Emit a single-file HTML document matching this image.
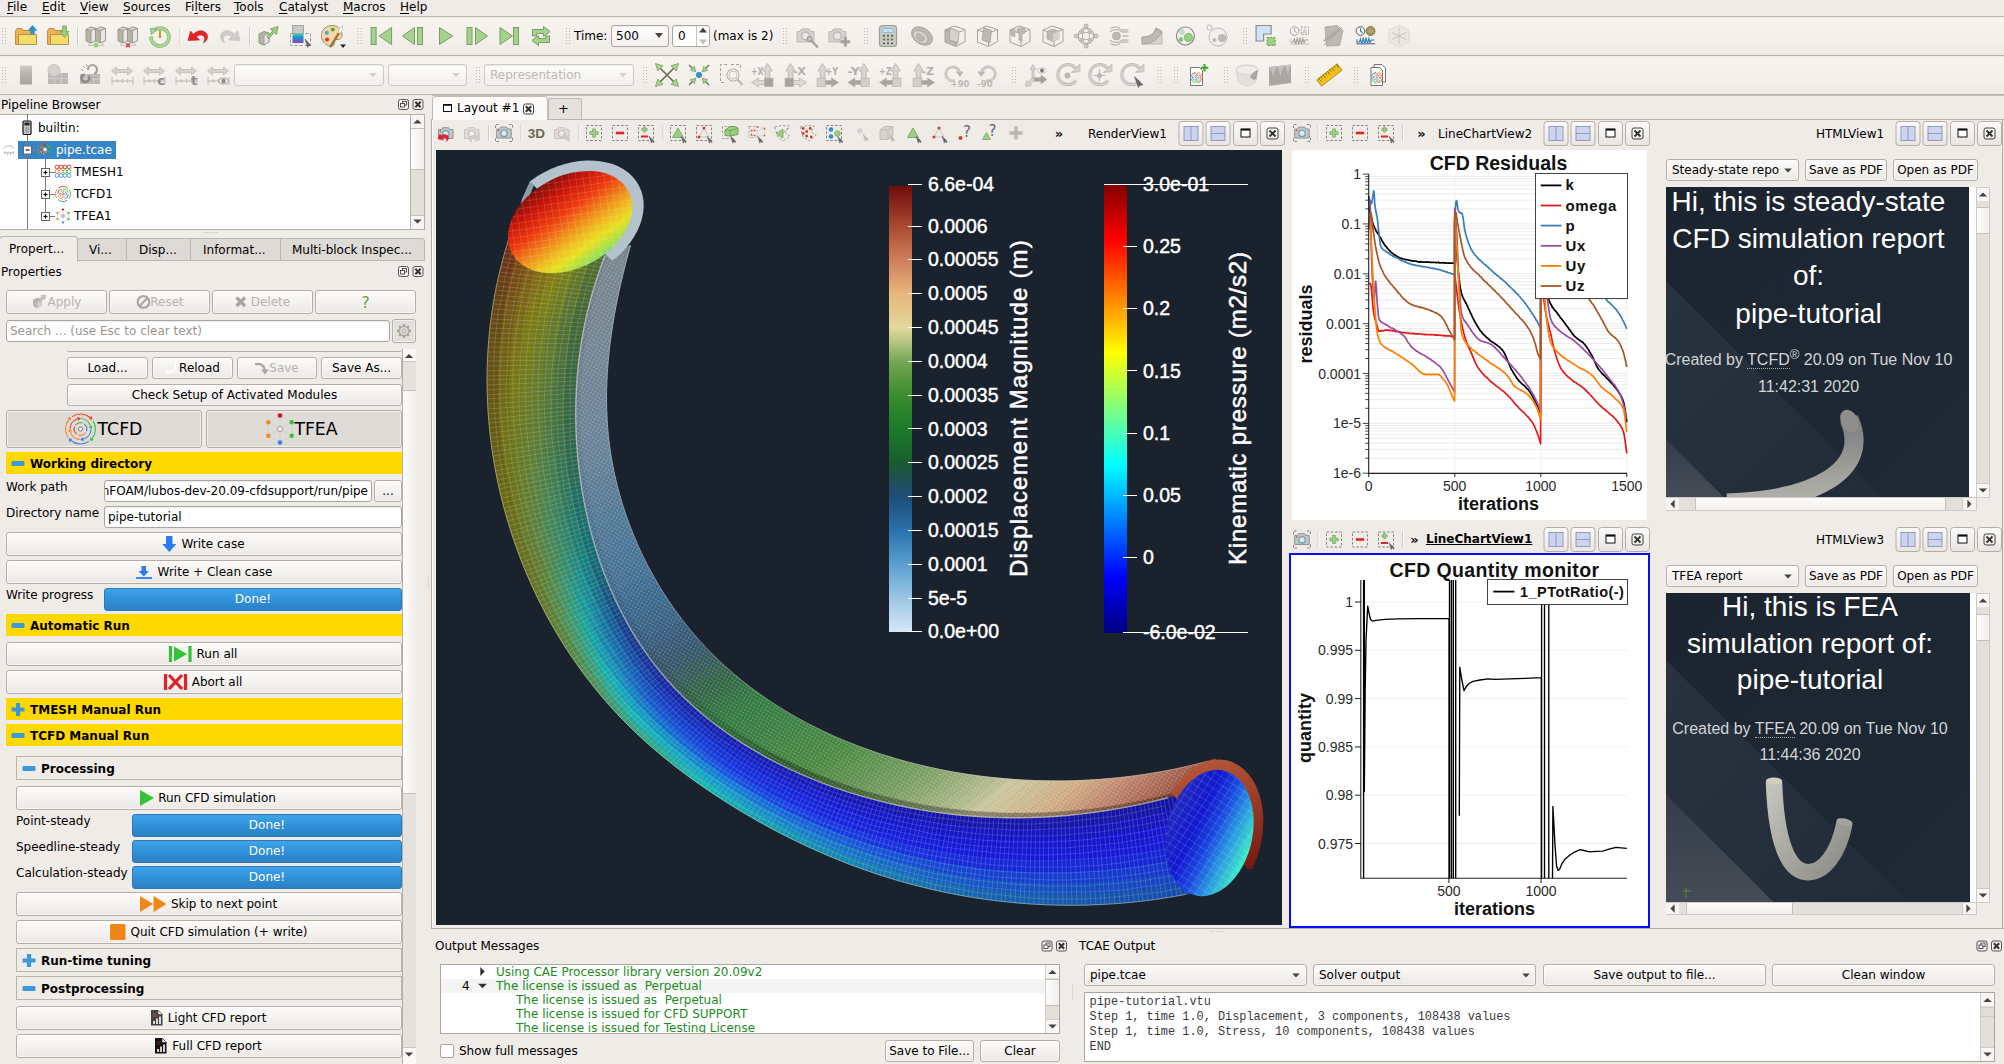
<!DOCTYPE html>
<html><head><meta charset="utf-8"><title>TCAE</title>
<style>
*{box-sizing:border-box}
html,body{margin:0;padding:0}
body{width:2004px;height:1064px;overflow:hidden;background:#efebe7;font-family:"DejaVu Sans","Liberation Sans",sans-serif;font-size:12px;color:#000;position:relative;line-height:15px}
.a{position:absolute}
.t{position:absolute;white-space:nowrap;line-height:15px;margin-top:1px}
.btn{padding-top:1px;position:absolute;border:1px solid #b4aea6;border-radius:3px;background:linear-gradient(#fcfbfa,#ece9e5);text-align:center;white-space:nowrap;box-shadow:inset 0 0 0 1px rgba(255,255,255,.55)}
.btn.dis{color:#b7b3ad}
.tb{position:absolute;border:1px solid #b4aea6;border-radius:3px;background:linear-gradient(#f9f8f6,#e6e2dd)}
.inp{position:absolute;border:1px solid #aaa59e;border-radius:3px;background:#fff;white-space:nowrap;overflow:hidden;box-shadow:inset 0 1px 1px rgba(0,0,0,.08)}
.hl{position:absolute;height:1px;background:#c9c4bd}
.ybar{padding-top:1px;position:absolute;left:6px;width:396px;height:22px;background:#ffd800;font-weight:bold;line-height:22px}
.gbar{padding-top:1px;position:absolute;left:16px;width:386px;height:24px;border:1px solid #b9b4ad;background:#efebe7;font-weight:bold;line-height:22px}
.prog{position:absolute;height:23px;border:1px solid #2f77b5;border-radius:3px;background:linear-gradient(#3fa4ea,#2f8fd6 55%,#2b82c6);color:#fff;text-align:center;line-height:21px}
.dark{background:#1a222d}
u{text-decoration:underline;text-underline-offset:2px}
svg{position:absolute;overflow:visible}
</style></head><body>
<!-- ===== MENU BAR ===== -->
<div class="a" style="left:0;top:0;width:2004px;height:17px;background:#efebe7;border-bottom:1px solid #bcb7b1"></div>
<div class="t" style="left:7px;top:-1px"><u>F</u>ile</div>
<div class="t" style="left:42px;top:-1px"><u>E</u>dit</div>
<div class="t" style="left:80px;top:-1px"><u>V</u>iew</div>
<div class="t" style="left:123px;top:-1px"><u>S</u>ources</div>
<div class="t" style="left:185px;top:-1px">Fi<u>l</u>ters</div>
<div class="t" style="left:234px;top:-1px"><u>T</u>ools</div>
<div class="t" style="left:279px;top:-1px"><u>C</u>atalyst</div>
<div class="t" style="left:343px;top:-1px"><u>M</u>acros</div>
<div class="t" style="left:400px;top:-1px"><u>H</u>elp</div>
<!-- ===== TOOLBARS ===== -->
<div class="a" style="left:0;top:18px;width:2004px;height:38px;background:linear-gradient(#f8f5f1,#f4f1ec 50%,#eeebe6);border-bottom:1px solid #b7b2ac"></div>
<div class="a" style="left:0;top:57px;width:2004px;height:38px;background:linear-gradient(#f8f5f1,#f4f1ec 50%,#eeebe6);border-bottom:1px solid #b7b2ac"></div>
<div class="t" style="left:574px;top:28px">Time:</div>
<div class="inp" style="left:611px;top:25px;width:58px;height:22px;line-height:21px;padding-left:4px;background:linear-gradient(#fff,#f4f2ef)">500</div>
<div class="inp" style="left:672px;top:25px;width:38px;height:22px;line-height:21px;padding-left:5px">0</div>
<div class="t" style="left:713px;top:28px">(max is 2)</div>
<div class="inp" style="left:234px;top:64px;width:150px;height:22px;background:linear-gradient(#fdfdfc,#f1efec);border-color:#cfcac4"></div>
<div class="inp" style="left:388px;top:64px;width:79px;height:22px;background:linear-gradient(#fdfdfc,#f1efec);border-color:#cfcac4"></div>
<div class="inp" style="left:484px;top:64px;width:150px;height:22px;background:linear-gradient(#fdfdfc,#f1efec);border-color:#cfcac4;color:#bdb9b3;line-height:21px;padding-left:5px">Representation</div>
<svg style="left:0;top:17px" width="2004" height="78" viewBox="0 17 2004 78">
<g transform="translate(-8.0 24.0)"><g fill="#bdb8b1"><rect x="10" y="4" width="1" height="1"/><rect x="13" y="4" width="1" height="1"/><rect x="10" y="7" width="1" height="1"/><rect x="13" y="7" width="1" height="1"/><rect x="10" y="10" width="1" height="1"/><rect x="13" y="10" width="1" height="1"/><rect x="10" y="13" width="1" height="1"/><rect x="13" y="13" width="1" height="1"/><rect x="10" y="16" width="1" height="1"/><rect x="13" y="16" width="1" height="1"/><rect x="10" y="19" width="1" height="1"/><rect x="13" y="19" width="1" height="1"/></g></g>
<g transform="translate(14.0 24.0)"><path d="M1.5 20.5V6.5l1.5-2h5l1.5 2H20v14z" fill="#f0b050" stroke="#b8924a" stroke-width="1"/><path d="M4.5 20.5V10.5H22.5V20.5z" fill="#f6da6a" stroke="#a89a52" stroke-width="1"/><path d="M18.5 1.2L23 6.5H20.3V10h-3.6V6.5H14z" fill="#2f8fd0" stroke="#2f8fd0" stroke-width=".5"/></g>
<g transform="translate(46.0 24.0)"><path d="M1.5 20.5V6.5l1.5-2h5l1.5 2H20v14z" fill="#f0b050" stroke="#b8924a" stroke-width="1"/><path d="M4.5 20.5V10.5H22.5V20.5z" fill="#f6da6a" stroke="#a89a52" stroke-width="1"/><path d="M16.7 2h3.6v5.5H23L18.5 13.5 14 7.5h2.7z" fill="#9bd07f" stroke="#7aa565" stroke-width="1"/></g>
<g transform="translate(65.0 24.0)"><path d="M12.5 3V21" stroke="#cfcac4" stroke-width="1"/><path d="M13.5 3V21" stroke="#fff" stroke-width="1"/></g>
<g transform="translate(84.0 24.0)"><path d="M5 19v2.5h14V19" fill="none" stroke="#c8c5c0" stroke-width="1.2"/><path d="M2 5.5l5-2.5 5 1.5v12l-5 2.5-5-2z" fill="#b4b6a4" stroke="#8f9088" stroke-width=".8"/><path d="M7 6.5l5-2v12l-5 2.5z" fill="#ece6ea" stroke="#8f9088" stroke-width=".8"/><path d="M2 5.5l5 1 5-2-5-1.5z" fill="#cfd0c8" stroke="#8f9088" stroke-width=".6"/><path d="M11.5 5.5l5-2.5 5 1.5v12l-5 2.5-5-2z" fill="#b4b6a4" stroke="#8f9088" stroke-width=".8"/><path d="M16.5 6.5l5-2v12l-5 2.5z" fill="#ece6ea" stroke="#8f9088" stroke-width=".8"/><path d="M11.5 5.5l5 1 5-2-5-1.5z" fill="#cfd0c8" stroke="#8f9088" stroke-width=".6"/><circle cx="12" cy="21.2" r="2.4" fill="#93cf7b"/></g>
<g transform="translate(116.0 24.0)"><path d="M5 19v2.5h14V19" fill="none" stroke="#c8c5c0" stroke-width="1.2"/><path d="M2 5.5l5-2.5 5 1.5v12l-5 2.5-5-2z" fill="#b4b6a4" stroke="#8f9088" stroke-width=".8"/><path d="M7 6.5l5-2v12l-5 2.5z" fill="#ece6ea" stroke="#8f9088" stroke-width=".8"/><path d="M2 5.5l5 1 5-2-5-1.5z" fill="#cfd0c8" stroke="#8f9088" stroke-width=".6"/><path d="M11.5 5.5l5-2.5 5 1.5v12l-5 2.5-5-2z" fill="#b4b6a4" stroke="#8f9088" stroke-width=".8"/><path d="M16.5 6.5l5-2v12l-5 2.5z" fill="#ece6ea" stroke="#8f9088" stroke-width=".8"/><path d="M11.5 5.5l5 1 5-2-5-1.5z" fill="#cfd0c8" stroke="#8f9088" stroke-width=".6"/><path d="M10 19.2l4 4m0-4l-4 4" stroke="#d83a3a" stroke-width="1.5"/></g>
<g transform="translate(148.0 24.0)"><path d="M5.2 7.2A9 9 0 1 1 3 12.5" fill="none" stroke="#8ab878" stroke-width="3.6"/><path d="M5.2 7.2A9 9 0 1 1 3 12.5" fill="none" stroke="#a9d896" stroke-width="2.2"/><path d="M2.2 4.5l7 .6-5.6 5.6z" fill="#a9d896" stroke="#7c9a6a" stroke-width=".8"/><path d="M12 6.5v5.5" stroke="#c89a30" stroke-width="2" stroke-linecap="round"/><circle cx="12" cy="12.6" r="1.5" fill="#c89a30"/></g>
<g transform="translate(167.5 24.0)"><path d="M12.5 3V21" stroke="#cfcac4" stroke-width="1"/><path d="M13.5 3V21" stroke="#fff" stroke-width="1"/></g>
<g transform="translate(186.0 24.0)"><path d="M2 16.5l2.5-9.5 3 3.2C11 6 17.5 5.5 20.5 9.5c2.2 3.4.6 7.300-3 9.3 1.800-3.300 1.400-6.200-1-7.300-2.200-1-4.500-.2-6 1.200l3 3.300z" fill="#e8202a" stroke="#c01820" stroke-width=".6"/></g>
<g transform="translate(218.0 24.0)"><g transform="translate(24 0) scale(-1 1)"><path d="M2 16.5l2.5-9.5 3 3.2C11 6 17.5 5.5 20.5 9.5c2.2 3.4.6 7.300-3 9.3 1.800-3.300 1.400-6.200-1-7.300-2.200-1-4.500-.2-6 1.200l3 3.300z" fill="#cfccc8" stroke="#bdbab5" stroke-width=".6"/></g></g>
<g transform="translate(237.0 24.0)"><path d="M12.5 3V21" stroke="#cfcac4" stroke-width="1"/><path d="M13.5 3V21" stroke="#fff" stroke-width="1"/></g>
<g transform="translate(256.0 24.0)"><path d="M3 10l5-2.500 5 1.500v9l-5 3-5-2z" fill="#b4b6a4" stroke="#7fa56a" stroke-width="1"/><path d="M8 11.500l5-2.500v9l-5 3z" fill="#e6e2e4" stroke="#8f9088" stroke-width=".7"/><path d="M11 12.500L17 7l-2.500-2 7.500-2.500-1.500 8-2-2-6 6z" fill="#9bd07f" stroke="#7aa565" stroke-width="1"/></g>
<g transform="translate(288.0 24.0)"><defs><linearGradient id="icm" x1="0" y1="0" x2="0" y2="1"><stop offset="0" stop-color="#4fd0b0"/><stop offset=".4" stop-color="#1f8fd8"/><stop offset="1" stop-color="#7a4fb0"/></linearGradient></defs><rect x="2.500" y="9.500" width="20" height="12" fill="none" stroke="#9a9792" stroke-width="1" stroke-dasharray="3 2"/><rect x="4.500" y="1.500" width="11" height="8" fill="#c9c9c9" stroke="#9a9792" stroke-width=".8"/><rect x="4.500" y="9.500" width="11" height="9.500" fill="url(#icm)"/><path d="M17 15l6 6.500-2.200.2-1.200 1.800z" fill="#666" stroke="#555" stroke-width=".5"/></g>
<g transform="translate(320.0 24.0)"><path d="M12.500 1.500C5 1.500 1 7 1.500 12.500 2 18.500 7.500 22.500 12 22c2.500-.3 2.500-2.500 2-3.800-.5-1.700 1-3 3-2.700 3.500.5 5.500-2.200 5-5.500-.7-5-4.500-8.500-9.500-8.500z" fill="#f5d9a8" stroke="#9a8a6a" stroke-width="1"/><circle cx="6.800" cy="8.800" r="2.100" fill="#4aa8e0"/><circle cx="12.800" cy="5.600" r="2.100" fill="#6aa040"/><circle cx="7" cy="15.500" r="2.100" fill="#e03a2a"/><path d="M9.500 22.500L18.500 8l1.600.9L11 23.500z" fill="#a8783a" stroke="#7a5a2a" stroke-width=".5"/><path d="M18 8.500c.5-3 2.500-5.500 4.500-6.500.3 2.500-.5 5.500-2.800 7.500z" fill="#fff" stroke="#aaa" stroke-width=".6"/></g>
<g transform="translate(347.5 24.0)"><g fill="#bdb8b1"><rect x="10" y="4" width="1" height="1"/><rect x="13" y="4" width="1" height="1"/><rect x="10" y="7" width="1" height="1"/><rect x="13" y="7" width="1" height="1"/><rect x="10" y="10" width="1" height="1"/><rect x="13" y="10" width="1" height="1"/><rect x="10" y="13" width="1" height="1"/><rect x="13" y="13" width="1" height="1"/><rect x="10" y="16" width="1" height="1"/><rect x="13" y="16" width="1" height="1"/><rect x="10" y="19" width="1" height="1"/><rect x="13" y="19" width="1" height="1"/></g></g>
<g transform="translate(369.6 24.0)"><rect x="1.5" y="3.500" width="5" height="17" fill="#a3d48d" stroke="#7c9a6a" stroke-width="1"/><path d="M22 3.500L9.5 12 22 20.500z" fill="#a3d48d" stroke="#7c9a6a" stroke-width="1"/></g>
<g transform="translate(401.0 24.0)"><path d="M13.5 3.500L1.5 12 13.5 20.500z" fill="#a3d48d" stroke="#7c9a6a" stroke-width="1"/><rect x="16.5" y="3.500" width="5" height="17" fill="#a3d48d" stroke="#7c9a6a" stroke-width="1"/></g>
<g transform="translate(434.0 24.0)"><path d="M5.5 3.500L18.5 12 5.5 20.500z" fill="#a3d48d" stroke="#7c9a6a" stroke-width="1"/></g>
<g transform="translate(465.0 24.0)"><rect x="2" y="3.500" width="5" height="17" fill="#a3d48d" stroke="#7c9a6a" stroke-width="1"/><path d="M10.5 3.500L22.5 12 10.5 20.500z" fill="#a3d48d" stroke="#7c9a6a" stroke-width="1"/></g>
<g transform="translate(498.0 24.0)"><path d="M2 3.500L14.5 12 2 20.500z" fill="#a3d48d" stroke="#7c9a6a" stroke-width="1"/><rect x="15.5" y="3.500" width="5" height="17" fill="#a3d48d" stroke="#7c9a6a" stroke-width="1"/></g>
<g transform="translate(529.0 24.0)"><path d="M3.500 12V5.500h11V2.500l6.500 5-6.500 5V9.500h-7V12z" fill="#a3d48d" stroke="#7c9a6a" stroke-width="1"/><path d="M20.500 12v6.500h-11v3l-6.500-5 6.500-5v3h7V12z" fill="#a3d48d" stroke="#7c9a6a" stroke-width="1"/></g>
<g transform="translate(556.0 24.0)"><g fill="#bdb8b1"><rect x="10" y="4" width="1" height="1"/><rect x="13" y="4" width="1" height="1"/><rect x="10" y="7" width="1" height="1"/><rect x="13" y="7" width="1" height="1"/><rect x="10" y="10" width="1" height="1"/><rect x="13" y="10" width="1" height="1"/><rect x="10" y="13" width="1" height="1"/><rect x="13" y="13" width="1" height="1"/><rect x="10" y="16" width="1" height="1"/><rect x="13" y="16" width="1" height="1"/><rect x="10" y="19" width="1" height="1"/><rect x="13" y="19" width="1" height="1"/></g></g>
<g transform="translate(773.0 24.0)"><g fill="#bdb8b1"><rect x="10" y="4" width="1" height="1"/><rect x="13" y="4" width="1" height="1"/><rect x="10" y="7" width="1" height="1"/><rect x="13" y="7" width="1" height="1"/><rect x="10" y="10" width="1" height="1"/><rect x="13" y="10" width="1" height="1"/><rect x="10" y="13" width="1" height="1"/><rect x="13" y="13" width="1" height="1"/><rect x="10" y="16" width="1" height="1"/><rect x="13" y="16" width="1" height="1"/><rect x="10" y="19" width="1" height="1"/><rect x="13" y="19" width="1" height="1"/></g></g>
<g transform="translate(795.5 24.0)"><path d="M1.500 7.500h3l1.500-2.500h8l1.500 2.500h3v10.500h-17z" fill="#d6d3cf" stroke="#bcb9b4" stroke-width="1"/><circle cx="10" cy="12" r="4" fill="#e9e7e4" stroke="#bcb9b4" stroke-width="1.500"/><circle cx="14" cy="15" r="2.200" fill="none" stroke="#a5a29d" stroke-width="1.500"/><path d="M15.500 16.500l7 7" stroke="#a5a29d" stroke-width="2.400"/></g>
<g transform="translate(827.4 24.0)"><path d="M1.500 7.500h3l1.500-2.500h8l1.500 2.500h3v10.500h-17z" fill="#d6d3cf" stroke="#bcb9b4" stroke-width="1"/><circle cx="10" cy="12" r="4" fill="#e9e7e4" stroke="#bcb9b4" stroke-width="1.500"/><path d="M18 13v9.500M13.300 17.800h9.500" stroke="#a5a29d" stroke-width="3"/></g>
<g transform="translate(854.0 24.0)"><g fill="#bdb8b1"><rect x="10" y="4" width="1" height="1"/><rect x="13" y="4" width="1" height="1"/><rect x="10" y="7" width="1" height="1"/><rect x="13" y="7" width="1" height="1"/><rect x="10" y="10" width="1" height="1"/><rect x="13" y="10" width="1" height="1"/><rect x="10" y="13" width="1" height="1"/><rect x="13" y="13" width="1" height="1"/><rect x="10" y="16" width="1" height="1"/><rect x="13" y="16" width="1" height="1"/><rect x="10" y="19" width="1" height="1"/><rect x="13" y="19" width="1" height="1"/></g></g>
<g transform="translate(876.0 24.0)"><rect x="3.500" y="1.500" width="17" height="21" rx="3" fill="#c8cac8" stroke="#9a9c98" stroke-width="1.200"/><rect x="6.500" y="4.500" width="11" height="4" rx="1" fill="#bfe0f8" stroke="#8aa0b0" stroke-width=".6"/><circle cx="8" cy="11.8" r="1.150" fill="#6a6a3a"/><circle cx="12" cy="11.8" r="1.150" fill="#6a6a3a"/><circle cx="16" cy="11.8" r="1.150" fill="#6a6a3a"/><circle cx="8" cy="15.600000000000001" r="1.150" fill="#6a6a3a"/><circle cx="12" cy="15.600000000000001" r="1.150" fill="#6a6a3a"/><circle cx="16" cy="15.600000000000001" r="1.150" fill="#6a6a3a"/><circle cx="8" cy="19.4" r="1.150" fill="#6a6a3a"/><circle cx="12" cy="19.4" r="1.150" fill="#6a6a3a"/><circle cx="16" cy="19.4" r="1.150" fill="#6a6a3a"/></g>
<g transform="translate(910.0 24.0)"><ellipse cx="12" cy="12" rx="11.500" ry="8" transform="rotate(35 12 12)" fill="#bcb9b4" stroke="#a5a29d" stroke-width=".8"/><ellipse cx="10.500" cy="13" rx="8.500" ry="5.500" transform="rotate(35 10.500 13)" fill="#d6d3cf" stroke="#a5a29d" stroke-width=".8"/><ellipse cx="10" cy="13.500" rx="4.500" ry="2.800" transform="rotate(35 10 13.500)" fill="#bcb9b4" stroke="#a5a29d" stroke-width=".8"/></g>
<g transform="translate(943.0 24.0)"><path d="M2 6l5-2.200 1 .3 8 3.400-1 11.500-2 3.500-11-4.500z" fill="#bcb9b4"/><path d="M2 6l9-4 11 3.500v12l-9 5-11-4.500z" fill="none" stroke="#a5a29d" stroke-width="1"/><path d="M2 6l11 3.500 9-4M13 9.500v13" fill="none" stroke="#a5a29d" stroke-width="1"/><path d="M7 4l9 3.500-1 11.500-9-3.500z" fill="#d6d3cf" stroke="#a5a29d" stroke-width=".8"/></g>
<g transform="translate(975.5 24.0)"><path d="M2 6l9-4 11 3.500v12l-9 5-11-4.500z" fill="none" stroke="#a5a29d" stroke-width="1"/><path d="M2 6l11 3.500 9-4M13 9.500v13" fill="none" stroke="#a5a29d" stroke-width="1"/><path d="M8 3.500l8 3-1.500 12.500-8-3z" fill="#bcb9b4" stroke="#a5a29d" stroke-width=".8"/></g>
<g transform="translate(1008.0 24.0)"><path d="M2 6l9-4 11 3.500v12l-9 5-11-4.500z" fill="none" stroke="#a5a29d" stroke-width="1"/><path d="M2 6l11 3.500 9-4M13 9.500v13" fill="none" stroke="#a5a29d" stroke-width="1"/><path d="M3 6.500l4-1.800v8l-4-1.500zM9 5l4-1.500 4 1.300v4l-3 1.500v7l-3-1.200v-7l-2-.8z" fill="#bcb9b4" stroke="#a5a29d" stroke-width=".6"/></g>
<g transform="translate(1041.0 24.0)"><path d="M2 6l9-4 11 3.500v12l-9 5-11-4.500z" fill="none" stroke="#a5a29d" stroke-width="1"/><path d="M2 6l11 3.500 9-4M13 9.500v13" fill="none" stroke="#a5a29d" stroke-width="1"/><path d="M6 7.500l6-2.500 6 2v7.500l-6 3-6-2.500z" fill="#bcb9b4" stroke="#a5a29d" stroke-width=".6"/><path d="M12 10l6-3v7.500l-6 3z" fill="#d6d3cf"/></g>
<g transform="translate(1074.0 24.0)"><circle cx="12" cy="12" r="8" fill="none" stroke="#a5a29d" stroke-width="1"/><ellipse cx="12" cy="12" rx="8" ry="3.500" fill="none" stroke="#a5a29d" stroke-width=".8"/><ellipse cx="12" cy="12" rx="3.500" ry="8" fill="none" stroke="#a5a29d" stroke-width=".8"/><circle cx="12" cy="2" r="2" fill="#d6d3cf" stroke="#a5a29d" stroke-width=".8"/><circle cx="12" cy="22" r="2" fill="#d6d3cf" stroke="#a5a29d" stroke-width=".8"/><circle cx="2" cy="12" r="2" fill="#d6d3cf" stroke="#a5a29d" stroke-width=".8"/><circle cx="22" cy="12" r="2" fill="#d6d3cf" stroke="#a5a29d" stroke-width=".8"/><circle cx="8" cy="8" r="1.400" fill="#d6d3cf" stroke="#a5a29d" stroke-width=".7"/><circle cx="16" cy="8" r="1.400" fill="#d6d3cf" stroke="#a5a29d" stroke-width=".7"/><circle cx="8" cy="16" r="1.400" fill="#d6d3cf" stroke="#a5a29d" stroke-width=".7"/><circle cx="16" cy="16" r="1.400" fill="#d6d3cf" stroke="#a5a29d" stroke-width=".7"/></g>
<g transform="translate(1107.4 24.0)"><circle cx="9" cy="12" r="4" fill="#bcb9b4" stroke="#a5a29d" stroke-width=".6"/><path d="M3 4.500c4-2.500 8-2 11 1.500h7M3 19.500c4 2.500 8 2 11-1.500h7M2.500 8c3-3 9-3.500 12 0h6.500M2.500 16c3 3 9 3.500 12 0h6.500M15 12h6" fill="none" stroke="#a5a29d" stroke-width="1"/></g>
<g transform="translate(1140.0 24.0)"><path d="M2 20v-7c8 0 12-3 14-9l6 3.500V20z" fill="#d6d3cf" stroke="#bcb9b4" stroke-width="1"/><path d="M2 20v-7c8 0 12-3 14-9l6 3.500c-3 7-9 12.500-20 12.500z" fill="#bcb9b4" stroke="#a5a29d" stroke-width=".8"/></g>
<g transform="translate(1173.4 24.0)"><circle cx="12" cy="12" r="9" fill="#f2f0ed" stroke="#8a8a86" stroke-width="1.200"/><circle cx="15" cy="13.500" r="4.200" fill="#93cf7b" stroke="#7aa565" stroke-width=".6"/><circle cx="8.500" cy="8" r="2.400" fill="#c4e4e0" stroke="#9ab8b4" stroke-width=".6"/><circle cx="7.500" cy="15.500" r="1.900" fill="#8ac070" stroke="#7aa565" stroke-width=".5"/></g>
<g transform="translate(1205.5 24.0)"><circle cx="12.500" cy="13" r="9" fill="#f2f0ed" stroke="#bcb9b4" stroke-width="1"/><circle cx="16.500" cy="14" r="4" fill="#bcb9b4"/><circle cx="9" cy="16" r="2" fill="#bcb9b4"/><circle cx="4" cy="3.500" r="2.500" fill="#f8f7f5" stroke="#bcb9b4" stroke-width="1"/></g>
<g transform="translate(1233.0 24.0)"><g fill="#bdb8b1"><rect x="10" y="4" width="1" height="1"/><rect x="13" y="4" width="1" height="1"/><rect x="10" y="7" width="1" height="1"/><rect x="13" y="7" width="1" height="1"/><rect x="10" y="10" width="1" height="1"/><rect x="13" y="10" width="1" height="1"/><rect x="10" y="13" width="1" height="1"/><rect x="13" y="13" width="1" height="1"/><rect x="10" y="16" width="1" height="1"/><rect x="13" y="16" width="1" height="1"/><rect x="10" y="19" width="1" height="1"/><rect x="13" y="19" width="1" height="1"/></g></g>
<g transform="translate(1254.6 24.0)"><path d="M1.500 1.500h15v8.500h-7.500v7h-7.500z" fill="#cfe4f8" stroke="#8a8c90" stroke-width="1.200"/><rect x="12.500" y="13.500" width="8" height="8" fill="#9bd07f" stroke="#6a8a5a" stroke-width="1" stroke-dasharray="2 1.500"/></g>
<g transform="translate(1288.0 24.0)"><circle cx="6.500" cy="7" r="4.300" fill="#f8f7f5" stroke="#a5a29d" stroke-width="1"/><path d="M6.500 4v3.200l2.200 1.500" fill="none" stroke="#a5a29d" stroke-width="1"/><rect x="13" y="3" width="7.500" height="7.500" fill="none" stroke="#a5a29d" stroke-width="1" stroke-dasharray="2 1.300"/><path d="M14.500 9l2.200-4.500 2.300 4.500z" fill="#d6d3cf" stroke="#bcb9b4" stroke-width=".6"/><path d="M3 15.0v5h18.500" fill="none" stroke="#a5a29d" stroke-width="1" opacity=".6"/><path d="M3.500 18.0h2l1-3 1.400 5.500 1.400-7 1.400 7 1.400-7 1.400 6.500 1.400-5.500 1.200 4 1.300-2.500h3" fill="none" stroke="#a5a29d" stroke-width="1.150"/></g>
<g transform="translate(1321.0 24.0)"><path d="M4 3l12-1.500 6 5-3.500 15-13 .5z" fill="#bcb9b4" stroke="#a5a29d" stroke-width=".8"/><path d="M3 21L21 3M2 16l2 1 .5-3 2.200 1.500.3-3.300 2.300 1.600.2-3.500 2.400 1.700.2-3.500 2.300 1.600.3-3.400 2.200 1.500.3-3 2.300 1.300" fill="none" stroke="#a5a29d" stroke-width="1"/></g>
<g transform="translate(1354.0 24.0)"><circle cx="6.500" cy="7" r="4.300" fill="#fbfbfa" stroke="#555" stroke-width="1"/><path d="M6.500 4v3.200l2.200 1.500" fill="none" stroke="#2f7fc0" stroke-width="1.200"/><circle cx="16.500" cy="7" r="4.400" fill="#c8a030" stroke="#7a6a3a" stroke-width="1"/><rect x="14" y="4.500" width="5" height="5" fill="#a8a090" stroke="#8a7a4a" stroke-width=".5" stroke-dasharray="1.500 1"/><path d="M3 15.0v5h18.500" fill="none" stroke="#2f7fc0" stroke-width="1" opacity=".6"/><path d="M3.500 18.0h2l1-3 1.400 5.500 1.400-7 1.400 7 1.400-7 1.400 6.500 1.400-5.500 1.200 4 1.300-2.500h3" fill="none" stroke="#2f7fc0" stroke-width="1.150"/><path d="M3 15.500v4h18" fill="none" stroke="#888" stroke-width="1"/></g>
<g transform="translate(1387.0 24.0)"><path d="M2 6l10-4.500 10 4.500v12l-10 4.500-10-4.500z" fill="#ebe8e4" stroke="#dcd9d4" stroke-width="1"/><path d="M12 4v16M5 8.500l14 7M19 8.500l-14 7" stroke="#c9c6c1" stroke-width="1"/></g>
<g transform="translate(-8.0 63.0)"><g fill="#bdb8b1"><rect x="10" y="4" width="1" height="1"/><rect x="13" y="4" width="1" height="1"/><rect x="10" y="7" width="1" height="1"/><rect x="13" y="7" width="1" height="1"/><rect x="10" y="10" width="1" height="1"/><rect x="13" y="10" width="1" height="1"/><rect x="10" y="13" width="1" height="1"/><rect x="13" y="13" width="1" height="1"/><rect x="10" y="16" width="1" height="1"/><rect x="13" y="16" width="1" height="1"/><rect x="10" y="19" width="1" height="1"/><rect x="13" y="19" width="1" height="1"/></g></g>
<g transform="translate(14.0 63.0)"><defs><linearGradient id="igr" x1="0" y1="0" x2="0" y2="1"><stop offset="0" stop-color="#cfccc8"/><stop offset=".5" stop-color="#b4b1ad"/><stop offset="1" stop-color="#a8a5a1"/></linearGradient></defs><rect x="6" y="2.500" width="12" height="19" rx="1" fill="url(#igr)"/></g>
<g transform="translate(46.0 63.0)"><rect x="2" y="10" width="20" height="11" fill="#bcb9b4"/><path d="M2 15.5h20M8.666666666666668 10v11M15.333333333333334 10v11" stroke="#d6d3cf" stroke-width=".8"/><circle cx="8" cy="7.500" r="6" fill="#d6d3cf" stroke="#bcb9b4" stroke-width=".8"/></g>
<g transform="translate(78.0 63.0)"><rect x="2" y="11" width="20" height="10" fill="#bcb9b4"/><path d="M2 16.0h20M8.666666666666668 11v10M15.333333333333334 11v10" stroke="#d6d3cf" stroke-width=".8"/><path d="M10 7c0-3 2-5 4.500-5s4.500 2 4.500 5c0 2-1.500 3.500-3 4" fill="none" stroke="#a5a29d" stroke-width="2.200"/><path d="M10.500 13c1.500 1.500 1 4.500-1.500 5.500s-5-.5-5.500-2.500 1-4 3-4.500" fill="none" stroke="#8f8c88" stroke-width="2.600"/><path d="M5 3l2 2M8.500 1.500l.8 2.500M3 6.500l2.500.8M14 14l2.500.5M13 16l1.500 2" stroke="#a5a29d" stroke-width="1"/></g>
<g transform="translate(110.0 63.0)"><path d="M1.500 8l5-4v2.500h11V4l5 4-5 4V9.500h-11V12z" fill="#d6d3cf" stroke="#bcb9b4" stroke-width=".8"/><path d="M2 14v8M23 14v8M2 18h21M7.200 16v4M12.500 16v4M17.700 16v4" stroke="#bcb9b4" stroke-width="1" fill="none"/></g>
<g transform="translate(142.0 63.0)"><path d="M1.500 8l5-4v2.500h11V4l5 4-5 4V9.500h-11V12z" fill="#d6d3cf" stroke="#bcb9b4" stroke-width=".8"/><path d="M2 14v8M23 14v8M2 18h21M7.200 16v4M12.500 16v4M17.700 16v4" stroke="#bcb9b4" stroke-width="1" fill="none"/><text x="19" y="22" font-family="DejaVu Sans,sans-serif" font-weight="bold" font-size="13" fill="#8f8c88" text-anchor="middle">c</text></g>
<g transform="translate(174.0 63.0)"><path d="M1.500 8l5-4v2.500h11V4l5 4-5 4V9.500h-11V12z" fill="#d6d3cf" stroke="#bcb9b4" stroke-width=".8"/><path d="M2 14v8M23 14v8M2 18h21M7.200 16v4M12.500 16v4M17.700 16v4" stroke="#bcb9b4" stroke-width="1" fill="none"/><text x="20" y="22" font-family="DejaVu Sans,sans-serif" font-weight="bold" font-size="13" fill="#8f8c88" text-anchor="middle">t</text></g>
<g transform="translate(206.0 63.0)"><path d="M1.500 8l5-4v2.500h11V4l5 4-5 4V9.500h-11V12z" fill="#d6d3cf" stroke="#bcb9b4" stroke-width=".8"/><path d="M2 14v8M23 14v8M2 18h21M7.200 16v4M12.500 16v4M17.700 16v4" stroke="#bcb9b4" stroke-width="1" fill="none"/><ellipse cx="17.500" cy="18" rx="5" ry="3" fill="#efebe7" stroke="#a5a29d" stroke-width="1"/><circle cx="17.500" cy="18" r="2.200" fill="#8f8c88"/></g>
<g transform="translate(466.0 63.0)"><g fill="#bdb8b1"><rect x="10" y="4" width="1" height="1"/><rect x="13" y="4" width="1" height="1"/><rect x="10" y="7" width="1" height="1"/><rect x="13" y="7" width="1" height="1"/><rect x="10" y="10" width="1" height="1"/><rect x="13" y="10" width="1" height="1"/><rect x="10" y="13" width="1" height="1"/><rect x="13" y="13" width="1" height="1"/><rect x="10" y="16" width="1" height="1"/><rect x="13" y="16" width="1" height="1"/><rect x="10" y="19" width="1" height="1"/><rect x="13" y="19" width="1" height="1"/></g></g>
<g transform="translate(633.0 63.0)"><g fill="#bdb8b1"><rect x="10" y="4" width="1" height="1"/><rect x="13" y="4" width="1" height="1"/><rect x="10" y="7" width="1" height="1"/><rect x="13" y="7" width="1" height="1"/><rect x="10" y="10" width="1" height="1"/><rect x="13" y="10" width="1" height="1"/><rect x="10" y="13" width="1" height="1"/><rect x="13" y="13" width="1" height="1"/><rect x="10" y="16" width="1" height="1"/><rect x="13" y="16" width="1" height="1"/><rect x="10" y="19" width="1" height="1"/><rect x="13" y="19" width="1" height="1"/></g></g>
<g transform="translate(655.0 63.0)"><path d="M5 5l14 14M19 5L5 19" stroke="#6a6a52" stroke-width="1.600"/><path d="M0 0L7.500 2.300 2.300 7.500z" transform="translate(0.5 0.5) rotate(0)" fill="#a3d48d" stroke="#7c9a6a" stroke-width=".8"/><path d="M0 0L7.500 2.300 2.300 7.500z" transform="translate(23.5 0.5) rotate(90)" fill="#a3d48d" stroke="#7c9a6a" stroke-width=".8"/><path d="M0 0L7.500 2.300 2.300 7.500z" transform="translate(23.5 23.5) rotate(180)" fill="#a3d48d" stroke="#7c9a6a" stroke-width=".8"/><path d="M0 0L7.500 2.300 2.300 7.500z" transform="translate(0.5 23.5) rotate(270)" fill="#a3d48d" stroke="#7c9a6a" stroke-width=".8"/></g>
<g transform="translate(687.0 63.0)"><circle cx="12" cy="12" r="3" fill="#2f8fd0"/><g transform="rotate(0 12 12)"><path d="M2 2l4 4" stroke="#6a6a52" stroke-width="1.300"/><path d="M8.800 8.800L3.300 7.300 7.300 3.300z" fill="#a3d48d" stroke="#7c9a6a" stroke-width=".8"/></g><g transform="rotate(90 12 12)"><path d="M2 2l4 4" stroke="#6a6a52" stroke-width="1.300"/><path d="M8.800 8.800L3.300 7.300 7.300 3.300z" fill="#a3d48d" stroke="#7c9a6a" stroke-width=".8"/></g><g transform="rotate(180 12 12)"><path d="M2 2l4 4" stroke="#6a6a52" stroke-width="1.300"/><path d="M8.800 8.800L3.300 7.300 7.300 3.300z" fill="#a3d48d" stroke="#7c9a6a" stroke-width=".8"/></g><g transform="rotate(270 12 12)"><path d="M2 2l4 4" stroke="#6a6a52" stroke-width="1.300"/><path d="M8.800 8.800L3.300 7.300 7.300 3.300z" fill="#a3d48d" stroke="#7c9a6a" stroke-width=".8"/></g></g>
<g transform="translate(719.0 63.0)"><path d="M8 1.500H1.500v18h4M12 1.500h9.500v6" fill="none" stroke="#a5a29d" stroke-width="1" stroke-dasharray="3 2"/><circle cx="14" cy="12" r="6" fill="none" stroke="#bcb9b4" stroke-width="1.200"/><circle cx="14" cy="12" r="4" fill="none" stroke="#bcb9b4" stroke-width=".8"/><path d="M18.500 16.500l5 5.500" stroke="#bcb9b4" stroke-width="2.200"/></g>
<g transform="translate(751.0 63.0)"><path d="M14.200 17V8h-2.400L16.500.500 21.200 8h-2.400V17z" fill="#d8d5d1" stroke="#b4b1ac" stroke-width=".8"/><path d="M15 17.500H7.500v-2.500L.500 19.500l7 4.500v-2.500H15z" fill="#dcd9d5" stroke="#b4b1ac" stroke-width=".7"/><rect x="13.500" y="15.200" width="8.500" height="8.500" fill="#a8a5a0" stroke="#b4b1ac" stroke-width=".6"/><text x="0" y="12.300" font-family="DejaVu Sans,sans-serif" font-weight="bold" font-size="10" fill="#b4b1ac" textLength="12.500" lengthAdjust="spacingAndGlyphs">+X</text></g>
<g transform="translate(783.0 63.0)"><path d="M5.200 17V8H2.800L7.500.500 12.200 8H9.800V17z" fill="#d8d5d1" stroke="#b4b1ac" stroke-width=".8"/><path d="M9 17.500h7.500v-2.500l7 4.500-7 4.500v-2.500H9z" fill="#dcd9d5" stroke="#b4b1ac" stroke-width=".7"/><rect x="2" y="15.200" width="8.500" height="8.500" fill="#a8a5a0" stroke="#b4b1ac" stroke-width=".6"/><text x="10.500" y="12.300" font-family="DejaVu Sans,sans-serif" font-weight="bold" font-size="10" fill="#b4b1ac" textLength="12.500" lengthAdjust="spacingAndGlyphs">-X</text></g>
<g transform="translate(815.0 63.0)"><path d="M5.200 17V8H2.800L7.500.500 12.200 8H9.800V17z" fill="#d8d5d1" stroke="#b4b1ac" stroke-width=".8"/><path d="M9 17.500h7.500v-2.500l7 4.500-7 4.500v-2.500H9z" fill="#a8a5a0" stroke="#b4b1ac" stroke-width=".7"/><rect x="2" y="15.200" width="8.500" height="8.500" fill="#d2cfcb" stroke="#b4b1ac" stroke-width=".6"/><text x="10.500" y="12.300" font-family="DejaVu Sans,sans-serif" font-weight="bold" font-size="10" fill="#b4b1ac" textLength="12.500" lengthAdjust="spacingAndGlyphs">+Y</text></g>
<g transform="translate(847.4 63.0)"><path d="M14.200 17V8h-2.400L16.500.500 21.200 8h-2.400V17z" fill="#d8d5d1" stroke="#b4b1ac" stroke-width=".8"/><path d="M15 17.500H7.500v-2.500L.500 19.500l7 4.500v-2.500H15z" fill="#a8a5a0" stroke="#b4b1ac" stroke-width=".7"/><rect x="13.500" y="15.200" width="8.500" height="8.500" fill="#d2cfcb" stroke="#b4b1ac" stroke-width=".6"/><text x="0" y="12.300" font-family="DejaVu Sans,sans-serif" font-weight="bold" font-size="10" fill="#b4b1ac" textLength="12.500" lengthAdjust="spacingAndGlyphs">-Y</text></g>
<g transform="translate(879.0 63.0)"><path d="M14.200 17V8h-2.400L16.500.500 21.200 8h-2.400V17z" fill="#d8d5d1" stroke="#b4b1ac" stroke-width=".8"/><path d="M15 17.500H7.500v-2.500L.500 19.500l7 4.500v-2.500H15z" fill="#a8a5a0" stroke="#b4b1ac" stroke-width=".7"/><rect x="13.500" y="15.200" width="8.500" height="8.500" fill="#d2cfcb" stroke="#b4b1ac" stroke-width=".6"/><text x="0" y="12.300" font-family="DejaVu Sans,sans-serif" font-weight="bold" font-size="10" fill="#b4b1ac" textLength="12.500" lengthAdjust="spacingAndGlyphs">+Z</text></g>
<g transform="translate(911.0 63.0)"><path d="M5.200 17V8H2.800L7.500.500 12.200 8H9.800V17z" fill="#d8d5d1" stroke="#b4b1ac" stroke-width=".8"/><path d="M9 17.500h7.500v-2.500l7 4.500-7 4.500v-2.500H9z" fill="#a8a5a0" stroke="#b4b1ac" stroke-width=".7"/><rect x="2" y="15.200" width="8.500" height="8.500" fill="#d2cfcb" stroke="#b4b1ac" stroke-width=".6"/><text x="10.500" y="12.300" font-family="DejaVu Sans,sans-serif" font-weight="bold" font-size="10" fill="#b4b1ac" textLength="12.500" lengthAdjust="spacingAndGlyphs">-Z</text></g>
<g transform="translate(943.0 63.0)"><g transform="translate(-2 0)"><path d="M14 17.500A7 7 0 1 1 18.500 9" fill="none" stroke="#bcb9b4" stroke-width="2.600"/><path d="M14.500 8.500h8l-3.500 5.500z" fill="#bcb9b4"/><path d="M14 17.500A7 7 0 1 1 18.500 9" fill="none" stroke="#d6d3cf" stroke-width="1.200"/></g><text x="17" y="24" font-family="DejaVu Sans,sans-serif" font-weight="bold" font-size="8.500" fill="#bcb9b4" text-anchor="middle">+90</text></g>
<g transform="translate(978.0 63.0)"><g transform="translate(22 0) scale(-1 1)"><path d="M14 17.500A7 7 0 1 1 18.500 9" fill="none" stroke="#bcb9b4" stroke-width="2.600"/><path d="M14.500 8.500h8l-3.500 5.500z" fill="#bcb9b4"/><path d="M14 17.500A7 7 0 1 1 18.500 9" fill="none" stroke="#d6d3cf" stroke-width="1.200"/></g><text x="7" y="24" font-family="DejaVu Sans,sans-serif" font-weight="bold" font-size="8.500" fill="#bcb9b4" text-anchor="middle">-90</text></g>
<g transform="translate(1002.0 63.0)"><g fill="#bdb8b1"><rect x="10" y="4" width="1" height="1"/><rect x="13" y="4" width="1" height="1"/><rect x="10" y="7" width="1" height="1"/><rect x="13" y="7" width="1" height="1"/><rect x="10" y="10" width="1" height="1"/><rect x="13" y="10" width="1" height="1"/><rect x="10" y="13" width="1" height="1"/><rect x="13" y="13" width="1" height="1"/><rect x="10" y="16" width="1" height="1"/><rect x="13" y="16" width="1" height="1"/><rect x="10" y="19" width="1" height="1"/><rect x="13" y="19" width="1" height="1"/></g></g>
<g transform="translate(1024.0 63.0)"><path d="M8 17V6.500h-2l3-5 3 5h-2V15z" fill="#d6d3cf" stroke="#bcb9b4" stroke-width=".8"/><path d="M10 14.500h7v-2.500l6 4.500-6 4.500v-2.500h-7z" fill="#a5a29d" stroke="#bcb9b4" stroke-width=".6"/><path d="M9 15l-5 4-1.500-1.500-1 6 6-1-1.500-1.500 4.500-4z" fill="#d6d3cf" stroke="#bcb9b4" stroke-width=".8"/><ellipse cx="18" cy="7.500" rx="4.500" ry="2.600" fill="#f4f2ef" stroke="#bcb9b4" stroke-width=".8"/><circle cx="18" cy="7.500" r="1.900" fill="#777"/></g>
<g transform="translate(1056.0 63.0)"><path d="M20 17.500A10 10 0 1 1 21.500 9" fill="none" stroke="#bcb9b4" stroke-width="3.200"/><path d="M20 17.500A10 10 0 1 1 21.500 9" fill="none" stroke="#d6d3cf" stroke-width="1.600"/><path d="M15.500 9.500l8.500-1V1z" fill="#d6d3cf" stroke="#bcb9b4" stroke-width=".8"/><circle cx="11.500" cy="12.500" r="3" fill="#bcb9b4"/></g>
<g transform="translate(1088.0 63.0)"><path d="M20 17.500A10 10 0 1 1 21.500 9" fill="none" stroke="#bcb9b4" stroke-width="3.200"/><path d="M20 17.500A10 10 0 1 1 21.500 9" fill="none" stroke="#d6d3cf" stroke-width="1.600"/><path d="M15.500 9.500l8.500-1V1z" fill="#d6d3cf" stroke="#bcb9b4" stroke-width=".8"/><circle cx="11.500" cy="12.500" r="2.500" fill="#bcb9b4"/><path d="M11.500 6.500v12M5.500 12.500h12" stroke="#bcb9b4" stroke-width="1.200"/></g>
<g transform="translate(1120.0 63.0)"><path d="M20 17.500A10 10 0 1 1 21.500 9" fill="none" stroke="#bcb9b4" stroke-width="3.200"/><path d="M20 17.500A10 10 0 1 1 21.500 9" fill="none" stroke="#d6d3cf" stroke-width="1.600"/><path d="M15.500 9.500l8.500-1V1z" fill="#d6d3cf" stroke="#bcb9b4" stroke-width=".8"/><path d="M14.500 13.500l8.500 8.500-3 .2-1.600 2.300z" fill="#6a6a6a" stroke="#555" stroke-width=".5"/></g>
<g transform="translate(1147.4 63.0)"><g fill="#bdb8b1"><rect x="10" y="4" width="1" height="1"/><rect x="13" y="4" width="1" height="1"/><rect x="10" y="7" width="1" height="1"/><rect x="13" y="7" width="1" height="1"/><rect x="10" y="10" width="1" height="1"/><rect x="13" y="10" width="1" height="1"/><rect x="10" y="13" width="1" height="1"/><rect x="13" y="13" width="1" height="1"/><rect x="10" y="16" width="1" height="1"/><rect x="13" y="16" width="1" height="1"/><rect x="10" y="19" width="1" height="1"/><rect x="13" y="19" width="1" height="1"/></g></g>
<g transform="translate(1164.0 63.0)"><g fill="#bdb8b1"><rect x="10" y="4" width="1" height="1"/><rect x="13" y="4" width="1" height="1"/><rect x="10" y="7" width="1" height="1"/><rect x="13" y="7" width="1" height="1"/><rect x="10" y="10" width="1" height="1"/><rect x="13" y="10" width="1" height="1"/><rect x="10" y="13" width="1" height="1"/><rect x="13" y="13" width="1" height="1"/><rect x="10" y="16" width="1" height="1"/><rect x="13" y="16" width="1" height="1"/><rect x="10" y="19" width="1" height="1"/><rect x="13" y="19" width="1" height="1"/></g></g>
<g transform="translate(1186.0 63.0)"><path d="M4.500 4.500h9l3 3v15h-12z" fill="#fdfdfd" stroke="#777" stroke-width="1"/><path d="M15.9 15.3A5.5 5.5 0 0 1 11.3 19.9" fill="none" stroke="#e8442e" stroke-width="0.8"/><path d="M9.7 19.9A5.5 5.5 0 0 1 5.1 15.3" fill="none" stroke="#3fbf3f" stroke-width="0.8"/><path d="M5.1 13.7A5.5 5.5 0 0 1 9.7 9.1" fill="none" stroke="#3f7fe8" stroke-width="0.8"/><path d="M11.3 9.1A5.5 5.5 0 0 1 15.9 13.7" fill="none" stroke="#f08a2a" stroke-width="0.8"/><path d="M13.6 16.9A4.0 4.0 0 0 1 9.0 18.2" fill="none" stroke="#3fbf3f" stroke-width="0.8"/><path d="M8.1 17.6A4.0 4.0 0 0 1 6.8 13.0" fill="none" stroke="#3f7fe8" stroke-width="0.8"/><path d="M7.4 12.1A4.0 4.0 0 0 1 12.0 10.8" fill="none" stroke="#f08a2a" stroke-width="0.8"/><path d="M12.9 11.4A4.0 4.0 0 0 1 14.2 16.0" fill="none" stroke="#e8442e" stroke-width="0.8"/><path d="M11.4 16.8A2.5 2.5 0 0 1 8.5 16.0" fill="none" stroke="#3f7fe8" stroke-width="0.8"/><path d="M8.2 15.4A2.5 2.5 0 0 1 9.0 12.5" fill="none" stroke="#f08a2a" stroke-width="0.8"/><path d="M9.6 12.2A2.5 2.5 0 0 1 12.5 13.0" fill="none" stroke="#e8442e" stroke-width="0.8"/><path d="M12.8 13.6A2.5 2.5 0 0 1 12.0 16.5" fill="none" stroke="#3fbf3f" stroke-width="0.8"/><circle cx="10.5" cy="14.5" r="0.8" fill="none" stroke="#666" stroke-width="0.6400000000000001"/><path d="M18.500 1v7.500M14.800 4.800h7.500" stroke="#3aa82a" stroke-width="2"/></g>
<g transform="translate(1214.0 63.0)"><g fill="#bdb8b1"><rect x="10" y="4" width="1" height="1"/><rect x="13" y="4" width="1" height="1"/><rect x="10" y="7" width="1" height="1"/><rect x="13" y="7" width="1" height="1"/><rect x="10" y="10" width="1" height="1"/><rect x="13" y="10" width="1" height="1"/><rect x="10" y="13" width="1" height="1"/><rect x="13" y="13" width="1" height="1"/><rect x="10" y="16" width="1" height="1"/><rect x="13" y="16" width="1" height="1"/><rect x="10" y="19" width="1" height="1"/><rect x="13" y="19" width="1" height="1"/></g></g>
<g transform="translate(1235.0 63.0)"><path d="M1 7c0-3 5-5 11-5s11 2 11 5l-2 11c-1 3-5 4.500-9 4.500s-8-1.500-9-4.500z" fill="#e4e1dd" stroke="#d2cfca" stroke-width=".8"/><ellipse cx="12" cy="7" rx="11" ry="4.500" fill="#efedea" stroke="#d2cfca" stroke-width=".8"/><path d="M15 14c2-4 5-6.500 8-7l-1.500 9c-2 1-4.500 1-6.500-2z" fill="#aaa7a3"/></g>
<g transform="translate(1268.0 63.0)"><path d="M1 4l22-2.500v18.500l-22 3z" fill="#aaa7a3"/><path d="M1 4c2 1 3 6 4 10 1-6 2.500-9 4.500-10.500 1.500 2 2 7 3 10 1-6 2.500-9 4.500-10.500 1.500 2 2 6 3 9 .8-5 1.800-8 3-9.500V1.500L1 4z" fill="#c4c1bd"/></g>
<g transform="translate(1295.0 63.0)"><g fill="#bdb8b1"><rect x="10" y="4" width="1" height="1"/><rect x="13" y="4" width="1" height="1"/><rect x="10" y="7" width="1" height="1"/><rect x="13" y="7" width="1" height="1"/><rect x="10" y="10" width="1" height="1"/><rect x="13" y="10" width="1" height="1"/><rect x="10" y="13" width="1" height="1"/><rect x="13" y="13" width="1" height="1"/><rect x="10" y="16" width="1" height="1"/><rect x="13" y="16" width="1" height="1"/><rect x="10" y="19" width="1" height="1"/><rect x="13" y="19" width="1" height="1"/></g></g>
<g transform="translate(1317.4 63.0)"><g transform="rotate(-38 12 12)"><rect x="-1" y="8" width="26" height="8" fill="#f2c21a" stroke="#a8841a" stroke-width=".8"/><path d="M1.5 8v4" stroke="#7a5f10" stroke-width=".8"/><path d="M4.3 8v2.5" stroke="#7a5f10" stroke-width=".8"/><path d="M7.1 8v4" stroke="#7a5f10" stroke-width=".8"/><path d="M9.899999999999999 8v2.5" stroke="#7a5f10" stroke-width=".8"/><path d="M12.7 8v4" stroke="#7a5f10" stroke-width=".8"/><path d="M15.5 8v2.5" stroke="#7a5f10" stroke-width=".8"/><path d="M18.299999999999997 8v4" stroke="#7a5f10" stroke-width=".8"/><path d="M21.099999999999998 8v2.5" stroke="#7a5f10" stroke-width=".8"/><path d="M23.9 8v4" stroke="#7a5f10" stroke-width=".8"/></g></g>
<g transform="translate(1344.0 63.0)"><g fill="#bdb8b1"><rect x="10" y="4" width="1" height="1"/><rect x="13" y="4" width="1" height="1"/><rect x="10" y="7" width="1" height="1"/><rect x="13" y="7" width="1" height="1"/><rect x="10" y="10" width="1" height="1"/><rect x="13" y="10" width="1" height="1"/><rect x="10" y="13" width="1" height="1"/><rect x="13" y="13" width="1" height="1"/><rect x="10" y="16" width="1" height="1"/><rect x="13" y="16" width="1" height="1"/><rect x="10" y="19" width="1" height="1"/><rect x="13" y="19" width="1" height="1"/></g></g>
<g transform="translate(1366.0 63.0)"><path d="M8 1.500h8l3.500 3.500v14h-11.500z" fill="#fdfdfd" stroke="#777" stroke-width="1"/><path d="M5 4.500h8.500l3 3v15h-11.500z" fill="#fdfdfd" stroke="#777" stroke-width="1"/><path d="M16.4 15.3A5.5 5.5 0 0 1 11.8 19.9" fill="none" stroke="#e8442e" stroke-width="0.8"/><path d="M10.2 19.9A5.5 5.5 0 0 1 5.6 15.3" fill="none" stroke="#3fbf3f" stroke-width="0.8"/><path d="M5.6 13.7A5.5 5.5 0 0 1 10.2 9.1" fill="none" stroke="#3f7fe8" stroke-width="0.8"/><path d="M11.8 9.1A5.5 5.5 0 0 1 16.4 13.7" fill="none" stroke="#f08a2a" stroke-width="0.8"/><path d="M14.1 16.9A4.0 4.0 0 0 1 9.5 18.2" fill="none" stroke="#3fbf3f" stroke-width="0.8"/><path d="M8.6 17.6A4.0 4.0 0 0 1 7.3 13.0" fill="none" stroke="#3f7fe8" stroke-width="0.8"/><path d="M7.9 12.1A4.0 4.0 0 0 1 12.5 10.8" fill="none" stroke="#f08a2a" stroke-width="0.8"/><path d="M13.4 11.4A4.0 4.0 0 0 1 14.7 16.0" fill="none" stroke="#e8442e" stroke-width="0.8"/><path d="M11.9 16.8A2.5 2.5 0 0 1 9.0 16.0" fill="none" stroke="#3f7fe8" stroke-width="0.8"/><path d="M8.7 15.4A2.5 2.5 0 0 1 9.5 12.5" fill="none" stroke="#f08a2a" stroke-width="0.8"/><path d="M10.1 12.2A2.5 2.5 0 0 1 13.0 13.0" fill="none" stroke="#e8442e" stroke-width="0.8"/><path d="M13.3 13.6A2.5 2.5 0 0 1 12.5 16.5" fill="none" stroke="#3fbf3f" stroke-width="0.8"/><circle cx="11" cy="14.5" r="0.8" fill="none" stroke="#666" stroke-width="0.6400000000000001"/></g>
<path d="M340 44.500h6l-3 3.500z" fill="#222"/><path d="M655 33h8l-4 5z" fill="#444"/><path d="M699 32.500h8l-4-5z" fill="#444"/><path d="M699 39.500h8l-4 5z" fill="#bbb"/><path d="M696.500 26v20" stroke="#c9c4bd"/><path d="M369 73h8l-4 4.500zM452 73h8l-4 4.500zM619 73h8l-4 4.500z" fill="#d6d3cf"/></svg>

<!-- ===== PIPELINE BROWSER ===== -->
<div class="t" style="left:1px;top:97px">Pipeline Browser</div>
<div class="a" style="left:-1px;top:114px;width:412px;height:116px;background:#fff;border:1px solid #b4aea6"></div>
<div class="a" style="left:410px;top:114px;width:15px;height:116px;background:#e3e0dc;border:1px solid #b4aea6"></div>
<div class="a" style="left:411px;top:115px;width:13px;height:14px;background:#f7f6f4"></div><div class="a" style="left:411px;top:215px;width:13px;height:14px;background:#f7f6f4;border-top:1px solid #c4bfb8"></div><div class="a" style="left:411px;top:128px;width:13px;height:42px;background:linear-gradient(to right,#fdfcfb,#f1efec);border-bottom:1px solid #c4bfb8;border-top:1px solid #c4bfb8"></div>
<div class="a" style="left:27px;top:114px;width:1px;height:115px;background:#666"></div>
<div class="a" style="left:45px;top:158px;width:1px;height:62px;background:#666"></div>
<div class="t" style="left:38px;top:120px">builtin:</div>
<div class="a" style="left:18px;top:141px;width:98px;height:18px;background:#3584c6"></div>
<div class="t" style="left:56px;top:142px;color:#fff">pipe.tcae</div>
<div class="t" style="left:74px;top:164px">TMESH1</div>
<div class="t" style="left:74px;top:186px">TCFD1</div>
<div class="t" style="left:74px;top:208px">TFEA1</div>
<!-- ===== TABS ===== -->
<div class="a" style="left:77px;top:238px;width:348px;height:23px;background:#dedad6;border:1px solid #bbb6af;border-radius:3px 3px 0 0"></div>
<div class="a" style="left:126px;top:239px;width:1px;height:21px;background:#bbb6af"></div>
<div class="a" style="left:190px;top:239px;width:1px;height:21px;background:#bbb6af"></div>
<div class="a" style="left:280px;top:239px;width:1px;height:21px;background:#bbb6af"></div>
<div class="a" style="left:-1px;top:236px;width:79px;height:26px;background:#efebe7;border:1px solid #bbb6af;border-bottom:none;border-radius:4px 4px 0 0"></div>
<div class="t" style="left:9px;top:241px">Propert...</div>
<div class="t" style="left:89px;top:242px">Vi...</div>
<div class="t" style="left:139px;top:242px">Disp...</div>
<div class="t" style="left:203px;top:242px">Informat...</div>
<div class="t" style="left:292px;top:242px">Multi-block Inspec...</div>
<div class="t" style="left:1px;top:264px">Properties</div>
<!-- buttons row -->
<div class="btn dis" style="left:6px;top:290px;width:101px;height:24px;line-height:21px;padding-left:16px">Apply</div>
<div class="btn dis" style="left:109px;top:290px;width:101px;height:24px;line-height:21px;padding-left:15px">Reset</div>
<div class="btn dis" style="left:212px;top:290px;width:101px;height:24px;line-height:21px;padding-left:16px">Delete</div>
<div class="btn" style="left:315px;top:290px;width:101px;height:24px;line-height:21px;color:#6f9f4a;font-size:16px">?</div>
<div class="inp" style="left:6px;top:320px;width:384px;height:22px;line-height:21px;padding-left:3px;color:#9a968f">Search ... (use Esc to clear text)</div>
<div class="btn" style="left:392px;top:319px;width:24px;height:24px;background:#e3dfda"></div>
<!-- scroll area -->
<div class="a" style="left:67px;top:350px;width:335px;height:2px;border-bottom:1px solid #b4aea6;border-radius:0 0 3px 3px"></div>
<div class="a" style="left:402px;top:349px;width:14px;height:715px;background:#e5e2de;border-left:1px solid #b4afa8"></div><div class="a" style="left:403px;top:349px;width:13px;height:13px;background:#faf9f7;border-bottom:1px solid #cbc6c0"></div><div class="a" style="left:403px;top:1047px;width:13px;height:17px;background:#faf9f7;border-top:1px solid #cbc6c0"></div>
<div class="a" style="left:403px;top:390px;width:13px;height:404px;background:linear-gradient(to right,#fdfcfb,#f1efec);border-top:1px solid #c4bfb8;border-bottom:1px solid #c4bfb8"></div>
<div class="btn" style="left:67px;top:357px;width:81px;height:22px;line-height:19px">Load...</div>
<div class="btn" style="left:152px;top:357px;width:81px;height:22px;line-height:19px;padding-left:14px">Reload</div>
<div class="btn dis" style="left:237px;top:357px;width:80px;height:22px;line-height:19px;padding-left:14px">Save</div>
<div class="btn" style="left:321px;top:357px;width:81px;height:22px;line-height:19px">Save As...</div>
<div class="btn" style="left:67px;top:384px;width:335px;height:22px;line-height:19px">Check Setup of Activated Modules</div>
<div class="btn" style="left:6px;top:410px;width:196px;height:38px;background:#dfdbd7;font-size:17.3px;line-height:35px;padding-left:32px">TCFD</div>
<div class="btn" style="left:206px;top:410px;width:196px;height:38px;background:#dfdbd7;font-size:17.3px;line-height:35px;padding-left:24px">TFEA</div>
<div class="ybar" style="top:452px;padding-left:24px">Working directory</div>
<div class="t" style="left:6px;top:479px">Work path</div>
<div class="inp" style="left:104px;top:480px;width:268px;height:22px;line-height:20px;text-align:right;padding-right:3px"><span style="position:absolute;right:3px">nFOAM/lubos-dev-20.09-cfdsupport/run/pipe</span></div>
<div class="btn" style="left:374px;top:480px;width:28px;height:22px;line-height:19px">...</div>
<div class="t" style="left:6px;top:505px">Directory name</div>
<div class="inp" style="left:104px;top:506px;width:298px;height:22px;line-height:20px;padding-left:3px">pipe-tutorial</div>
<div class="btn" style="left:6px;top:532px;width:396px;height:24px;line-height:21px;padding-left:18px">Write case</div>
<div class="btn" style="left:6px;top:560px;width:396px;height:24px;line-height:21px;padding-left:22px">Write + Clean case</div>
<div class="t" style="left:6px;top:587px">Write progress</div>
<div class="prog" style="left:104px;top:588px;width:298px">Done!</div>
<div class="ybar" style="top:614px;padding-left:24px">Automatic Run</div>
<div class="btn" style="left:6px;top:642px;width:396px;height:24px;line-height:21px;padding-left:26px">Run all</div>
<div class="btn" style="left:6px;top:670px;width:396px;height:24px;line-height:21px;padding-left:26px">Abort all</div>
<div class="ybar" style="top:698px;padding-left:24px">TMESH Manual Run</div>
<div class="ybar" style="top:724px;padding-left:24px">TCFD Manual Run</div>
<div class="gbar" style="top:756px;padding-left:24px">Processing</div>
<div class="btn" style="left:16px;top:786px;width:386px;height:24px;line-height:21px;padding-left:16px">Run CFD simulation</div>
<div class="t" style="left:16px;top:813px">Point-steady</div>
<div class="prog" style="left:132px;top:814px;width:270px">Done!</div>
<div class="t" style="left:16px;top:839px">Speedline-steady</div>
<div class="prog" style="left:132px;top:840px;width:270px">Done!</div>
<div class="t" style="left:16px;top:865px">Calculation-steady</div>
<div class="prog" style="left:132px;top:866px;width:270px">Done!</div>
<div class="btn" style="left:16px;top:892px;width:386px;height:24px;line-height:21px;padding-left:30px">Skip to next point</div>
<div class="btn" style="left:16px;top:920px;width:386px;height:24px;line-height:21px;padding-left:20px">Quit CFD simulation (+ write)</div>
<div class="gbar" style="top:948px;padding-left:24px">Run-time tuning</div>
<div class="gbar" style="top:976px;padding-left:24px">Postprocessing</div>
<div class="btn" style="left:16px;top:1006px;width:386px;height:24px;line-height:21px;padding-left:16px">Light CFD report</div>
<div class="btn" style="left:16px;top:1034px;width:386px;height:24px;line-height:21px;padding-left:16px">Full CFD report</div>
<!-- ===== CENTRAL AREA ===== -->
<div class="a" style="left:432px;top:95px;width:1572px;height:1px;background:#c4bfb9"></div>
<div class="a" style="left:431px;top:119px;width:1573px;height:1px;background:#b8b3ad"></div>
<div class="a" style="left:548px;top:98px;width:34px;height:21px;background:#e4e0dc;border:1px solid #c0bbb4;border-bottom:none;border-radius:3px 3px 0 0"></div>
<div class="t" style="left:558px;top:100px;font-size:13px">+</div>
<div class="a" style="left:432px;top:96px;width:116px;height:24px;background:#fbfaf9;border:1px solid #c0bbb4;border-bottom:none;border-radius:4px 4px 0 0"></div>
<div class="a" style="left:431px;top:119px;width:1px;height:810px;background:#b0aca7"></div><div class="a" style="left:432px;top:120px;width:1px;height:808px;background:#fbfaf8"></div>
<div class="t" style="left:457px;top:100px">Layout #1</div>
<div class="a" style="left:2002px;top:119px;width:1px;height:810px;background:#b0aca7"></div>
<!-- view title bars -->
<div class="t" style="left:1088px;top:126px">RenderView1</div>
<div class="t" style="left:1438px;top:126px">LineChartView2</div>
<div class="t" style="left:1816px;top:126px">HTMLView1</div>
<div class="t" style="left:1426px;top:531px;font-weight:bold;text-decoration:underline">LineChartView1</div>
<div class="t" style="left:1816px;top:532px">HTMLView3</div>
<svg style="left:436px;top:150px" width="846" height="775" viewBox="436 150 846 775">
<rect x="436" y="150" width="846" height="775" fill="#1a222d"/>
<g><path d="M508.6 239.5L520.7 241.5L516.9 253.5L504.9 251.8Z" fill="#6d3115" stroke="#6d3115" stroke-width=".8"/><path d="M520.7 241.5L532.7 243.4L529.0 255.2L516.9 253.5Z" fill="#784215" stroke="#784215" stroke-width=".8"/><path d="M532.7 243.4L544.8 245.4L541.0 257.0L529.0 255.2Z" fill="#805415" stroke="#805415" stroke-width=".8"/><path d="M544.8 245.4L556.9 247.3L553.0 258.7L541.0 257.0Z" fill="#856615" stroke="#856615" stroke-width=".8"/><path d="M556.9 247.3L568.9 249.3L565.1 260.4L553.0 258.7Z" fill="#857615" stroke="#857615" stroke-width=".8"/><path d="M568.9 249.3L581.0 251.2L577.1 262.1L565.1 260.4Z" fill="#808015" stroke="#808015" stroke-width=".8"/><path d="M581.0 251.2L593.1 253.2L589.2 263.9L577.1 262.1Z" fill="#6a7823" stroke="#6a7823" stroke-width=".8"/><path d="M593.1 253.2L605.2 255.1L601.2 265.6L589.2 263.9Z" fill="#546d2d" stroke="#546d2d" stroke-width=".8"/><path d="M605.2 255.1L608.7 253.7L604.9 264.2L601.2 265.6Z" fill="#727d87" stroke="#727d87" stroke-width=".8"/><path d="M608.7 253.7L630.6 245.3L627.7 255.8L604.9 264.2Z" fill="#79858f" stroke="#79858f" stroke-width=".8"/><path d="M504.9 251.8L516.9 253.5L513.5 265.6L501.5 264.1Z" fill="#6c3515" stroke="#6c3515" stroke-width=".8"/><path d="M516.9 253.5L529.0 255.2L525.5 267.1L513.5 265.6Z" fill="#774615" stroke="#774615" stroke-width=".8"/><path d="M529.0 255.2L541.0 257.0L537.5 268.6L525.5 267.1Z" fill="#7f5815" stroke="#7f5815" stroke-width=".8"/><path d="M541.0 257.0L553.0 258.7L549.5 270.2L537.5 268.6Z" fill="#836a15" stroke="#836a15" stroke-width=".8"/><path d="M553.0 258.7L565.1 260.4L561.5 271.7L549.5 270.2Z" fill="#837815" stroke="#837815" stroke-width=".8"/><path d="M565.1 260.4L577.1 262.1L573.5 273.2L561.5 271.7Z" fill="#7b7f18" stroke="#7b7f18" stroke-width=".8"/><path d="M577.1 262.1L589.2 263.9L585.5 274.7L573.5 273.2Z" fill="#667725" stroke="#667725" stroke-width=".8"/><path d="M589.2 263.9L601.2 265.6L597.5 276.2L585.5 274.7Z" fill="#516c2f" stroke="#516c2f" stroke-width=".8"/><path d="M601.2 265.6L604.9 264.2L601.4 274.8L597.5 276.2Z" fill="#727d87" stroke="#727d87" stroke-width=".8"/><path d="M604.9 264.2L627.7 255.8L624.9 266.5L601.4 274.8Z" fill="#798690" stroke="#798690" stroke-width=".8"/><path d="M501.5 264.1L513.5 265.6L510.5 277.9L498.5 276.6Z" fill="#6b3915" stroke="#6b3915" stroke-width=".8"/><path d="M513.5 265.6L525.5 267.1L522.4 279.1L510.5 277.9Z" fill="#764a15" stroke="#764a15" stroke-width=".8"/><path d="M525.5 267.1L537.5 268.6L534.4 280.4L522.4 279.1Z" fill="#7e5c15" stroke="#7e5c15" stroke-width=".8"/><path d="M537.5 268.6L549.5 270.2L546.3 281.7L534.4 280.4Z" fill="#826d15" stroke="#826d15" stroke-width=".8"/><path d="M549.5 270.2L561.5 271.7L558.3 283.0L546.3 281.7Z" fill="#827b15" stroke="#827b15" stroke-width=".8"/><path d="M561.5 271.7L573.5 273.2L570.2 284.3L558.3 283.0Z" fill="#767e1c" stroke="#767e1c" stroke-width=".8"/><path d="M573.5 273.2L585.5 274.7L582.2 285.6L570.2 284.3Z" fill="#627628" stroke="#627628" stroke-width=".8"/><path d="M585.5 274.7L597.5 276.2L594.1 286.9L582.2 285.6Z" fill="#4e6b31" stroke="#4e6b31" stroke-width=".8"/><path d="M597.5 276.2L601.4 274.8L598.1 285.5L594.1 286.9Z" fill="#717e88" stroke="#717e88" stroke-width=".8"/><path d="M601.4 274.8L624.9 266.5L622.3 277.1L598.1 285.5Z" fill="#788691" stroke="#788691" stroke-width=".8"/><path d="M498.5 276.6L510.5 277.9L507.7 290.2L495.8 289.1Z" fill="#6a3d15" stroke="#6a3d15" stroke-width=".8"/><path d="M510.5 277.9L522.4 279.1L519.6 291.2L507.7 290.2Z" fill="#744e15" stroke="#744e15" stroke-width=".8"/><path d="M522.4 279.1L534.4 280.4L531.5 292.3L519.6 291.2Z" fill="#7c6015" stroke="#7c6015" stroke-width=".8"/><path d="M534.4 280.4L546.3 281.7L543.4 293.4L531.5 292.3Z" fill="#807015" stroke="#807015" stroke-width=".8"/><path d="M546.3 281.7L558.3 283.0L555.3 294.4L543.4 293.4Z" fill="#807e15" stroke="#807e15" stroke-width=".8"/><path d="M558.3 283.0L570.2 284.3L567.2 295.5L555.3 294.4Z" fill="#727c1f" stroke="#727c1f" stroke-width=".8"/><path d="M570.2 284.3L582.2 285.6L579.1 296.6L567.2 295.5Z" fill="#5f742a" stroke="#5f742a" stroke-width=".8"/><path d="M582.2 285.6L594.1 286.9L591.0 297.7L579.1 296.6Z" fill="#4c6a33" stroke="#4c6a33" stroke-width=".8"/><path d="M594.1 286.9L598.1 285.5L595.1 296.3L591.0 297.7Z" fill="#717e88" stroke="#717e88" stroke-width=".8"/><path d="M598.1 285.5L622.3 277.1L619.8 287.8L595.1 296.3Z" fill="#788691" stroke="#788691" stroke-width=".8"/><path d="M495.8 289.1L507.7 290.2L505.4 302.6L493.5 301.7Z" fill="#684115" stroke="#684115" stroke-width=".8"/><path d="M507.7 290.2L519.6 291.2L517.2 303.4L505.4 302.6Z" fill="#735215" stroke="#735215" stroke-width=".8"/><path d="M519.6 291.2L531.5 292.3L529.0 304.3L517.2 303.4Z" fill="#7b6415" stroke="#7b6415" stroke-width=".8"/><path d="M531.5 292.3L543.4 293.4L540.9 305.1L529.0 304.3Z" fill="#7f7415" stroke="#7f7415" stroke-width=".8"/><path d="M543.4 293.4L555.3 294.4L552.7 306.0L540.9 305.1Z" fill="#7e7f16" stroke="#7e7f16" stroke-width=".8"/><path d="M555.3 294.4L567.2 295.5L564.6 306.8L552.7 306.0Z" fill="#6d7b23" stroke="#6d7b23" stroke-width=".8"/><path d="M567.2 295.5L579.1 296.6L576.4 307.7L564.6 306.8Z" fill="#5b732d" stroke="#5b732d" stroke-width=".8"/><path d="M579.1 296.6L591.0 297.7L588.2 308.5L576.4 307.7Z" fill="#496834" stroke="#496834" stroke-width=".8"/><path d="M591.0 297.7L595.1 296.3L592.3 307.1L588.2 308.5Z" fill="#707e89" stroke="#707e89" stroke-width=".8"/><path d="M595.1 296.3L619.8 287.8L617.5 298.5L592.3 307.1Z" fill="#778692" stroke="#778692" stroke-width=".8"/><path d="M493.5 301.7L505.4 302.6L503.4 315.0L491.6 314.4Z" fill="#674515" stroke="#674515" stroke-width=".8"/><path d="M505.4 302.6L517.2 303.4L515.1 315.6L503.4 315.0Z" fill="#725615" stroke="#725615" stroke-width=".8"/><path d="M517.2 303.4L529.0 304.3L526.9 316.3L515.1 315.6Z" fill="#7a6715" stroke="#7a6715" stroke-width=".8"/><path d="M529.0 304.3L540.9 305.1L538.6 316.9L526.9 316.3Z" fill="#7e7715" stroke="#7e7715" stroke-width=".8"/><path d="M540.9 305.1L552.7 306.0L550.4 317.5L538.6 316.9Z" fill="#787e1a" stroke="#787e1a" stroke-width=".8"/><path d="M552.7 306.0L564.6 306.8L562.2 318.2L550.4 317.5Z" fill="#697a26" stroke="#697a26" stroke-width=".8"/><path d="M564.6 306.8L576.4 307.7L573.9 318.8L562.2 318.2Z" fill="#57722f" stroke="#57722f" stroke-width=".8"/><path d="M576.4 307.7L588.2 308.5L585.7 319.4L573.9 318.8Z" fill="#466736" stroke="#466736" stroke-width=".8"/><path d="M588.2 308.5L592.3 307.1L589.9 318.0L585.7 319.4Z" fill="#707e89" stroke="#707e89" stroke-width=".8"/><path d="M592.3 307.1L617.5 298.5L615.4 309.3L589.9 318.0Z" fill="#778692" stroke="#778692" stroke-width=".8"/><path d="M491.6 314.4L503.4 315.0L501.7 327.5L490.0 327.1Z" fill="#664815" stroke="#664815" stroke-width=".8"/><path d="M503.4 315.0L515.1 315.6L513.4 327.9L501.7 327.5Z" fill="#715915" stroke="#715915" stroke-width=".8"/><path d="M515.1 315.6L526.9 316.3L525.0 328.3L513.4 327.9Z" fill="#786a15" stroke="#786a15" stroke-width=".8"/><path d="M526.9 316.3L538.6 316.9L536.7 328.7L525.0 328.3Z" fill="#7c7a15" stroke="#7c7a15" stroke-width=".8"/><path d="M538.6 316.9L550.4 317.5L548.4 329.2L536.7 328.7Z" fill="#737c1e" stroke="#737c1e" stroke-width=".8"/><path d="M550.4 317.5L562.2 318.2L560.1 329.6L548.4 329.2Z" fill="#647829" stroke="#647829" stroke-width=".8"/><path d="M562.2 318.2L573.9 318.8L571.8 330.0L560.1 329.6Z" fill="#547132" stroke="#547132" stroke-width=".8"/><path d="M573.9 318.8L585.7 319.4L583.5 330.4L571.8 330.0Z" fill="#436638" stroke="#436638" stroke-width=".8"/><path d="M585.7 319.4L589.9 318.0L587.7 329.0L583.5 330.4Z" fill="#6f7e8a" stroke="#6f7e8a" stroke-width=".8"/><path d="M589.9 318.0L615.4 309.3L613.5 320.1L587.7 329.0Z" fill="#768693" stroke="#768693" stroke-width=".8"/><path d="M490.0 327.1L501.7 327.5L500.3 340.0L488.7 339.8Z" fill="#664b15" stroke="#664b15" stroke-width=".8"/><path d="M501.7 327.5L513.4 327.9L511.9 340.2L500.3 340.0Z" fill="#705d15" stroke="#705d15" stroke-width=".8"/><path d="M513.4 327.9L525.0 328.3L523.5 340.4L511.9 340.2Z" fill="#786d15" stroke="#786d15" stroke-width=".8"/><path d="M525.0 328.3L536.7 328.7L535.1 340.6L523.5 340.4Z" fill="#7a7b16" stroke="#7a7b16" stroke-width=".8"/><path d="M536.7 328.7L548.4 329.2L546.7 340.8L535.1 340.6Z" fill="#6f7b21" stroke="#6f7b21" stroke-width=".8"/><path d="M548.4 329.2L560.1 329.6L558.3 341.0L546.7 340.8Z" fill="#61782b" stroke="#61782b" stroke-width=".8"/><path d="M560.1 329.6L571.8 330.0L569.9 341.3L558.3 341.0Z" fill="#517034" stroke="#517034" stroke-width=".8"/><path d="M571.8 330.0L583.5 330.4L581.5 341.5L569.9 341.3Z" fill="#416639" stroke="#416639" stroke-width=".8"/><path d="M583.5 330.4L587.7 329.0L585.7 340.0L581.5 341.5Z" fill="#6e7e8a" stroke="#6e7e8a" stroke-width=".8"/><path d="M587.7 329.0L613.5 320.1L611.8 331.0L585.7 340.0Z" fill="#758693" stroke="#758693" stroke-width=".8"/><path d="M488.7 339.8L500.3 340.0L499.3 352.6L487.8 352.6Z" fill="#664e15" stroke="#664e15" stroke-width=".8"/><path d="M500.3 340.0L511.9 340.2L510.8 352.6L499.3 352.6Z" fill="#705f15" stroke="#705f15" stroke-width=".8"/><path d="M511.9 340.2L523.5 340.4L522.3 352.6L510.8 352.6Z" fill="#787015" stroke="#787015" stroke-width=".8"/><path d="M523.5 340.4L535.1 340.6L533.8 352.6L522.3 352.6Z" fill="#787b18" stroke="#787b18" stroke-width=".8"/><path d="M535.1 340.6L546.7 340.8L545.3 352.6L533.8 352.6Z" fill="#6d7b24" stroke="#6d7b24" stroke-width=".8"/><path d="M546.7 340.8L558.3 341.0L556.8 352.6L545.3 352.6Z" fill="#5e782e" stroke="#5e782e" stroke-width=".8"/><path d="M558.3 341.0L569.9 341.3L568.3 352.5L556.8 352.6Z" fill="#4f7036" stroke="#4f7036" stroke-width=".8"/><path d="M569.9 341.3L581.5 341.5L579.8 352.5L568.3 352.5Z" fill="#3f663b" stroke="#3f663b" stroke-width=".8"/><path d="M581.5 341.5L585.7 340.0L584.1 351.0L579.8 352.5Z" fill="#6e7e8b" stroke="#6e7e8b" stroke-width=".8"/><path d="M585.7 340.0L611.8 331.0L610.3 341.8L584.1 351.0Z" fill="#758694" stroke="#758694" stroke-width=".8"/><path d="M487.8 352.6L499.3 352.6L498.7 365.2L487.3 365.4Z" fill="#665015" stroke="#665015" stroke-width=".8"/><path d="M499.3 352.6L510.8 352.6L510.1 365.0L498.7 365.2Z" fill="#706115" stroke="#706115" stroke-width=".8"/><path d="M510.8 352.6L522.3 352.6L521.5 364.7L510.1 365.0Z" fill="#787315" stroke="#787315" stroke-width=".8"/><path d="M522.3 352.6L533.8 352.6L532.9 364.5L521.5 364.7Z" fill="#757b1b" stroke="#757b1b" stroke-width=".8"/><path d="M533.8 352.6L545.3 352.6L544.3 364.3L532.9 364.5Z" fill="#6a7b26" stroke="#6a7b26" stroke-width=".8"/><path d="M545.3 352.6L556.8 352.6L555.7 364.1L544.3 364.3Z" fill="#5c7830" stroke="#5c7830" stroke-width=".8"/><path d="M556.8 352.6L568.3 352.5L567.1 363.9L555.7 364.1Z" fill="#4d7038" stroke="#4d7038" stroke-width=".8"/><path d="M568.3 352.5L579.8 352.5L578.5 363.7L567.1 363.9Z" fill="#3e663c" stroke="#3e663c" stroke-width=".8"/><path d="M579.8 352.5L584.1 351.0L582.7 362.1L578.5 363.7Z" fill="#6d7e8b" stroke="#6d7e8b" stroke-width=".8"/><path d="M584.1 351.0L610.3 341.8L609.0 352.7L582.7 362.1Z" fill="#748694" stroke="#748694" stroke-width=".8"/><path d="M487.3 365.4L498.7 365.2L498.3 377.8L487.0 378.2Z" fill="#665215" stroke="#665215" stroke-width=".8"/><path d="M498.7 365.2L510.1 365.0L509.6 377.4L498.3 377.8Z" fill="#706415" stroke="#706415" stroke-width=".8"/><path d="M510.1 365.0L521.5 364.7L520.9 376.9L509.6 377.4Z" fill="#787515" stroke="#787515" stroke-width=".8"/><path d="M521.5 364.7L532.9 364.5L532.2 376.5L520.9 376.9Z" fill="#737b1d" stroke="#737b1d" stroke-width=".8"/><path d="M532.9 364.5L544.3 364.3L543.5 376.1L532.2 376.5Z" fill="#687b28" stroke="#687b28" stroke-width=".8"/><path d="M544.3 364.3L555.7 364.1L554.8 375.7L543.5 376.1Z" fill="#5a7832" stroke="#5a7832" stroke-width=".8"/><path d="M555.7 364.1L567.1 363.9L566.1 375.2L554.8 375.7Z" fill="#4b703a" stroke="#4b703a" stroke-width=".8"/><path d="M567.1 363.9L578.5 363.7L577.4 374.8L566.1 375.2Z" fill="#3c663e" stroke="#3c663e" stroke-width=".8"/><path d="M578.5 363.7L582.7 362.1L581.7 373.3L577.4 374.8Z" fill="#6c7e8c" stroke="#6c7e8c" stroke-width=".8"/><path d="M582.7 362.1L609.0 352.7L608.0 363.7L581.7 373.3Z" fill="#738695" stroke="#738695" stroke-width=".8"/><path d="M487.0 378.2L498.3 377.8L498.3 390.4L487.2 391.0Z" fill="#665415" stroke="#665415" stroke-width=".8"/><path d="M498.3 377.8L509.6 377.4L509.5 389.8L498.3 390.4Z" fill="#706615" stroke="#706615" stroke-width=".8"/><path d="M509.6 377.4L520.9 376.9L520.7 389.1L509.5 389.8Z" fill="#777815" stroke="#777815" stroke-width=".8"/><path d="M520.9 376.9L532.2 376.5L531.9 388.5L520.7 389.1Z" fill="#707b20" stroke="#707b20" stroke-width=".8"/><path d="M532.2 376.5L543.5 376.1L543.0 387.9L531.9 388.5Z" fill="#657b2b" stroke="#657b2b" stroke-width=".8"/><path d="M543.5 376.1L554.8 375.7L554.2 387.3L543.0 387.9Z" fill="#587834" stroke="#587834" stroke-width=".8"/><path d="M554.8 375.7L566.1 375.2L565.4 386.6L554.2 387.3Z" fill="#49703c" stroke="#49703c" stroke-width=".8"/><path d="M566.1 375.2L577.4 374.8L576.6 386.0L565.4 386.6Z" fill="#3b6640" stroke="#3b6640" stroke-width=".8"/><path d="M577.4 374.8L581.7 373.3L580.8 384.4L576.6 386.0Z" fill="#6c7d8c" stroke="#6c7d8c" stroke-width=".8"/><path d="M581.7 373.3L608.0 363.7L607.2 374.6L580.8 384.4Z" fill="#738595" stroke="#738595" stroke-width=".8"/><path d="M487.2 391.0L498.3 390.4L498.7 403.0L487.6 403.8Z" fill="#665615" stroke="#665615" stroke-width=".8"/><path d="M498.3 390.4L509.5 389.8L509.7 402.2L498.7 403.0Z" fill="#706915" stroke="#706915" stroke-width=".8"/><path d="M509.5 389.8L520.7 389.1L520.8 401.3L509.7 402.2Z" fill="#757817" stroke="#757817" stroke-width=".8"/><path d="M520.7 389.1L531.9 388.5L531.8 400.5L520.8 401.3Z" fill="#6d7b23" stroke="#6d7b23" stroke-width=".8"/><path d="M531.9 388.5L543.0 387.9L542.9 399.7L531.8 400.5Z" fill="#637b2d" stroke="#637b2d" stroke-width=".8"/><path d="M543.0 387.9L554.2 387.3L553.9 398.9L542.9 399.7Z" fill="#567837" stroke="#567837" stroke-width=".8"/><path d="M554.2 387.3L565.4 386.6L565.0 398.0L553.9 398.9Z" fill="#47703d" stroke="#47703d" stroke-width=".8"/><path d="M565.4 386.6L576.6 386.0L576.0 397.2L565.0 398.0Z" fill="#396641" stroke="#396641" stroke-width=".8"/><path d="M576.6 386.0L580.8 384.4L580.3 395.6L576.0 397.2Z" fill="#6b7d8d" stroke="#6b7d8d" stroke-width=".8"/><path d="M580.8 384.4L607.2 374.6L606.7 385.6L580.3 395.6Z" fill="#728596" stroke="#728596" stroke-width=".8"/><path d="M487.6 403.8L498.7 403.0L499.3 415.6L488.4 416.6Z" fill="#665915" stroke="#665915" stroke-width=".8"/><path d="M498.7 403.0L509.7 402.2L510.3 414.5L499.3 415.6Z" fill="#706b15" stroke="#706b15" stroke-width=".8"/><path d="M509.7 402.2L520.8 401.3L521.2 413.5L510.3 414.5Z" fill="#72781a" stroke="#72781a" stroke-width=".8"/><path d="M520.8 401.3L531.8 400.5L532.1 412.5L521.2 413.5Z" fill="#6b7b25" stroke="#6b7b25" stroke-width=".8"/><path d="M531.8 400.5L542.9 399.7L543.0 411.5L532.1 412.5Z" fill="#607b30" stroke="#607b30" stroke-width=".8"/><path d="M542.9 399.7L553.9 398.9L553.9 410.5L543.0 411.5Z" fill="#537839" stroke="#537839" stroke-width=".8"/><path d="M553.9 398.9L565.0 398.0L564.8 409.4L553.9 410.5Z" fill="#45703f" stroke="#45703f" stroke-width=".8"/><path d="M565.0 398.0L576.0 397.2L575.8 408.4L564.8 409.4Z" fill="#386643" stroke="#386643" stroke-width=".8"/><path d="M576.0 397.2L580.3 395.6L580.1 406.7L575.8 408.4Z" fill="#6a7d8d" stroke="#6a7d8d" stroke-width=".8"/><path d="M580.3 395.6L606.7 385.6L606.5 396.5L580.1 406.7Z" fill="#718596" stroke="#718596" stroke-width=".8"/><path d="M488.4 416.6L499.3 415.6L500.3 428.1L489.6 429.4Z" fill="#665b15" stroke="#665b15" stroke-width=".8"/><path d="M499.3 415.6L510.3 414.5L511.1 426.9L500.3 428.1Z" fill="#706e15" stroke="#706e15" stroke-width=".8"/><path d="M510.3 414.5L521.2 413.5L521.9 425.7L511.1 426.9Z" fill="#70781d" stroke="#70781d" stroke-width=".8"/><path d="M521.2 413.5L532.1 412.5L532.7 424.5L521.9 425.7Z" fill="#687b28" stroke="#687b28" stroke-width=".8"/><path d="M532.1 412.5L543.0 411.5L543.4 423.3L532.7 424.5Z" fill="#5e7b32" stroke="#5e7b32" stroke-width=".8"/><path d="M543.0 411.5L553.9 410.5L554.2 422.1L543.4 423.3Z" fill="#51783b" stroke="#51783b" stroke-width=".8"/><path d="M553.9 410.5L564.8 409.4L565.0 420.8L554.2 422.1Z" fill="#437041" stroke="#437041" stroke-width=".8"/><path d="M564.8 409.4L575.8 408.4L575.8 419.6L565.0 420.8Z" fill="#366644" stroke="#366644" stroke-width=".8"/><path d="M575.8 408.4L580.1 406.7L580.1 417.9L575.8 419.6Z" fill="#697d8e" stroke="#697d8e" stroke-width=".8"/><path d="M580.1 406.7L606.5 396.5L606.6 407.5L580.1 417.9Z" fill="#708597" stroke="#708597" stroke-width=".8"/><path d="M489.6 429.4L500.3 428.1L501.6 440.7L491.0 442.1Z" fill="#665d15" stroke="#665d15" stroke-width=".8"/><path d="M500.3 428.1L511.1 426.9L512.3 439.3L501.6 440.7Z" fill="#707015" stroke="#707015" stroke-width=".8"/><path d="M511.1 426.9L521.9 425.7L522.9 437.9L512.3 439.3Z" fill="#6d781f" stroke="#6d781f" stroke-width=".8"/><path d="M521.9 425.7L532.7 424.5L533.5 436.5L522.9 437.9Z" fill="#667b2a" stroke="#667b2a" stroke-width=".8"/><path d="M532.7 424.5L543.4 423.3L544.2 435.0L533.5 436.5Z" fill="#5b7b35" stroke="#5b7b35" stroke-width=".8"/><path d="M543.4 423.3L554.2 422.1L554.8 433.6L544.2 435.0Z" fill="#4f783d" stroke="#4f783d" stroke-width=".8"/><path d="M554.2 422.1L565.0 420.8L565.4 432.2L554.8 433.6Z" fill="#417043" stroke="#417043" stroke-width=".8"/><path d="M565.0 420.8L575.8 419.6L576.1 430.8L565.4 432.2Z" fill="#346646" stroke="#346646" stroke-width=".8"/><path d="M575.8 419.6L580.1 417.9L580.4 429.1L576.1 430.8Z" fill="#687d8e" stroke="#687d8e" stroke-width=".8"/><path d="M580.1 417.9L606.6 407.5L607.1 418.5L580.4 429.1Z" fill="#6f8597" stroke="#6f8597" stroke-width=".8"/><path d="M491.0 442.1L501.6 440.7L503.3 453.2L492.8 454.8Z" fill="#665f15" stroke="#665f15" stroke-width=".8"/><path d="M501.6 440.7L512.3 439.3L513.8 451.6L503.3 453.2Z" fill="#6e7117" stroke="#6e7117" stroke-width=".8"/><path d="M512.3 439.3L522.9 437.9L524.2 450.0L513.8 451.6Z" fill="#6b7822" stroke="#6b7822" stroke-width=".8"/><path d="M522.9 437.9L533.5 436.5L534.7 448.4L524.2 450.0Z" fill="#637c2e" stroke="#637c2e" stroke-width=".8"/><path d="M533.5 436.5L544.2 435.0L545.2 446.8L534.7 448.4Z" fill="#597c38" stroke="#597c38" stroke-width=".8"/><path d="M544.2 435.0L554.8 433.6L555.7 445.2L545.2 446.8Z" fill="#4c7841" stroke="#4c7841" stroke-width=".8"/><path d="M554.8 433.6L565.4 432.2L566.1 443.6L555.7 445.2Z" fill="#3f7146" stroke="#3f7146" stroke-width=".8"/><path d="M565.4 432.2L576.1 430.8L576.6 442.0L566.1 443.6Z" fill="#326649" stroke="#326649" stroke-width=".8"/><path d="M576.1 430.8L580.4 429.1L581.0 440.3L576.6 442.0Z" fill="#677d8e" stroke="#677d8e" stroke-width=".8"/><path d="M580.4 429.1L607.1 418.5L607.8 429.4L581.0 440.3Z" fill="#6e8597" stroke="#6e8597" stroke-width=".8"/><path d="M492.8 454.8L503.3 453.2L505.2 465.6L494.9 467.4Z" fill="#676215" stroke="#676215" stroke-width=".8"/><path d="M503.3 453.2L513.8 451.6L515.5 463.9L505.2 465.6Z" fill="#6d7219" stroke="#6d7219" stroke-width=".8"/><path d="M513.8 451.6L524.2 450.0L525.9 462.1L515.5 463.9Z" fill="#697925" stroke="#697925" stroke-width=".8"/><path d="M524.2 450.0L534.7 448.4L536.2 460.3L525.9 462.1Z" fill="#617d32" stroke="#617d32" stroke-width=".8"/><path d="M534.7 448.4L545.2 446.8L546.5 458.5L536.2 460.3Z" fill="#567d3d" stroke="#567d3d" stroke-width=".8"/><path d="M545.2 446.8L555.7 445.2L556.8 456.8L546.5 458.5Z" fill="#497945" stroke="#497945" stroke-width=".8"/><path d="M555.7 445.2L566.1 443.6L567.1 455.0L556.8 456.8Z" fill="#3c724b" stroke="#3c724b" stroke-width=".8"/><path d="M566.1 443.6L576.6 442.0L577.4 453.2L567.1 455.0Z" fill="#2f674d" stroke="#2f674d" stroke-width=".8"/><path d="M576.6 442.0L581.0 440.3L581.8 451.4L577.4 453.2Z" fill="#667c8f" stroke="#667c8f" stroke-width=".8"/><path d="M581.0 440.3L607.8 429.4L608.9 440.4L581.8 451.4Z" fill="#6c8498" stroke="#6c8498" stroke-width=".8"/><path d="M494.9 467.4L505.2 465.6L507.5 478.0L497.4 480.0Z" fill="#686515" stroke="#686515" stroke-width=".8"/><path d="M505.2 465.6L515.5 463.9L517.6 476.1L507.5 478.0Z" fill="#6c731c" stroke="#6c731c" stroke-width=".8"/><path d="M515.5 463.9L525.9 462.1L527.8 474.1L517.6 476.1Z" fill="#677b28" stroke="#677b28" stroke-width=".8"/><path d="M525.9 462.1L536.2 460.3L537.9 472.2L527.8 474.1Z" fill="#5e7f36" stroke="#5e7f36" stroke-width=".8"/><path d="M536.2 460.3L546.5 458.5L548.1 470.2L537.9 472.2Z" fill="#527f41" stroke="#527f41" stroke-width=".8"/><path d="M546.5 458.5L556.8 456.8L558.2 468.3L548.1 470.2Z" fill="#467b4a" stroke="#467b4a" stroke-width=".8"/><path d="M556.8 456.8L567.1 455.0L568.3 466.3L558.2 468.3Z" fill="#39734f" stroke="#39734f" stroke-width=".8"/><path d="M567.1 455.0L577.4 453.2L578.5 464.4L568.3 466.3Z" fill="#2c6851" stroke="#2c6851" stroke-width=".8"/><path d="M577.4 453.2L581.8 451.4L582.9 462.5L578.5 464.4Z" fill="#637b8e" stroke="#637b8e" stroke-width=".8"/><path d="M581.8 451.4L608.9 440.4L610.3 451.2L582.9 462.5Z" fill="#698398" stroke="#698398" stroke-width=".8"/><path d="M497.4 480.0L507.5 478.0L510.1 490.4L500.1 492.5Z" fill="#696815" stroke="#696815" stroke-width=".8"/><path d="M507.5 478.0L517.6 476.1L520.0 488.2L510.1 490.4Z" fill="#6a741e" stroke="#6a741e" stroke-width=".8"/><path d="M517.6 476.1L527.8 474.1L530.0 486.1L520.0 488.2Z" fill="#657c2c" stroke="#657c2c" stroke-width=".8"/><path d="M527.8 474.1L537.9 472.2L540.0 484.0L530.0 486.1Z" fill="#5b803a" stroke="#5b803a" stroke-width=".8"/><path d="M537.9 472.2L548.1 470.2L549.9 481.9L540.0 484.0Z" fill="#4f8046" stroke="#4f8046" stroke-width=".8"/><path d="M548.1 470.2L558.2 468.3L559.9 479.7L549.9 481.9Z" fill="#427c4e" stroke="#427c4e" stroke-width=".8"/><path d="M558.2 468.3L568.3 466.3L569.9 477.6L559.9 479.7Z" fill="#357454" stroke="#357454" stroke-width=".8"/><path d="M568.3 466.3L578.5 464.4L579.8 475.5L569.9 477.6Z" fill="#296955" stroke="#296955" stroke-width=".8"/><path d="M578.5 464.4L582.9 462.5L584.3 473.6L579.8 475.5Z" fill="#607a8e" stroke="#607a8e" stroke-width=".8"/><path d="M582.9 462.5L610.3 451.2L612.1 462.1L584.3 473.6Z" fill="#668297" stroke="#668297" stroke-width=".8"/><path d="M500.1 492.5L510.1 490.4L513.0 502.6L503.2 504.9Z" fill="#6a6a15" stroke="#6a6a15" stroke-width=".8"/><path d="M510.1 490.4L520.0 488.2L522.7 500.3L513.0 502.6Z" fill="#697521" stroke="#697521" stroke-width=".8"/><path d="M520.0 488.2L530.0 486.1L532.5 498.0L522.7 500.3Z" fill="#637d2f" stroke="#637d2f" stroke-width=".8"/><path d="M530.0 486.1L540.0 484.0L542.3 495.8L532.5 498.0Z" fill="#58823e" stroke="#58823e" stroke-width=".8"/><path d="M540.0 484.0L549.9 481.9L552.1 493.5L542.3 495.8Z" fill="#4c824a" stroke="#4c824a" stroke-width=".8"/><path d="M549.9 481.9L559.9 479.7L561.9 491.2L552.1 493.5Z" fill="#3f7d53" stroke="#3f7d53" stroke-width=".8"/><path d="M559.9 479.7L569.9 477.6L571.6 488.9L561.9 491.2Z" fill="#327558" stroke="#327558" stroke-width=".8"/><path d="M569.9 477.6L579.8 475.5L581.4 486.6L571.6 488.9Z" fill="#266a59" stroke="#266a59" stroke-width=".8"/><path d="M579.8 475.5L584.3 473.6L586.0 484.7L581.4 486.6Z" fill="#5c788e" stroke="#5c788e" stroke-width=".8"/><path d="M584.3 473.6L612.1 462.1L614.2 472.8L586.0 484.7Z" fill="#628097" stroke="#628097" stroke-width=".8"/><path d="M503.2 504.9L513.0 502.6L516.2 514.8L506.6 517.3Z" fill="#6a6c17" stroke="#6a6c17" stroke-width=".8"/><path d="M513.0 502.6L522.7 500.3L525.8 512.4L516.2 514.8Z" fill="#687724" stroke="#687724" stroke-width=".8"/><path d="M522.7 500.3L532.5 498.0L535.3 509.9L525.8 512.4Z" fill="#617f33" stroke="#617f33" stroke-width=".8"/><path d="M532.5 498.0L542.3 495.8L544.9 507.5L535.3 509.9Z" fill="#558342" stroke="#558342" stroke-width=".8"/><path d="M542.3 495.8L552.1 493.5L554.5 505.0L544.9 507.5Z" fill="#49834f" stroke="#49834f" stroke-width=".8"/><path d="M552.1 493.5L561.9 491.2L564.1 502.6L554.5 505.0Z" fill="#3c7f58" stroke="#3c7f58" stroke-width=".8"/><path d="M561.9 491.2L571.6 488.9L573.7 500.1L564.1 502.6Z" fill="#2e775d" stroke="#2e775d" stroke-width=".8"/><path d="M571.6 488.9L581.4 486.6L583.3 497.6L573.7 500.1Z" fill="#226c5e" stroke="#226c5e" stroke-width=".8"/><path d="M581.4 486.6L586.0 484.7L588.0 495.7L583.3 497.6Z" fill="#59778d" stroke="#59778d" stroke-width=".8"/><path d="M586.0 484.7L614.2 472.8L616.7 483.5L588.0 495.7Z" fill="#5f7e96" stroke="#5f7e96" stroke-width=".8"/><path d="M506.6 517.3L516.2 514.8L519.7 526.9L510.3 529.5Z" fill="#696d19" stroke="#696d19" stroke-width=".8"/><path d="M516.2 514.8L525.8 512.4L529.1 524.3L519.7 526.9Z" fill="#667826" stroke="#667826" stroke-width=".8"/><path d="M525.8 512.4L535.3 509.9L538.5 521.7L529.1 524.3Z" fill="#5f8036" stroke="#5f8036" stroke-width=".8"/><path d="M535.3 509.9L544.9 507.5L547.9 519.1L538.5 521.7Z" fill="#528447" stroke="#528447" stroke-width=".8"/><path d="M544.9 507.5L554.5 505.0L557.3 516.5L547.9 519.1Z" fill="#458454" stroke="#458454" stroke-width=".8"/><path d="M554.5 505.0L564.1 502.6L566.7 513.9L557.3 516.5Z" fill="#38805d" stroke="#38805d" stroke-width=".8"/><path d="M564.1 502.6L573.7 500.1L576.0 511.3L566.7 513.9Z" fill="#2b7862" stroke="#2b7862" stroke-width=".8"/><path d="M573.7 500.1L583.3 497.6L585.4 508.6L576.0 511.3Z" fill="#1f6d62" stroke="#1f6d62" stroke-width=".8"/><path d="M583.3 497.6L588.0 495.7L590.2 506.6L585.4 508.6Z" fill="#56768d" stroke="#56768d" stroke-width=".8"/><path d="M588.0 495.7L616.7 483.5L619.5 494.1L590.2 506.6Z" fill="#5b7d96" stroke="#5b7d96" stroke-width=".8"/><path d="M510.3 529.5L519.7 526.9L523.5 538.9L514.3 541.7Z" fill="#686e1a" stroke="#686e1a" stroke-width=".8"/><path d="M519.7 526.9L529.1 524.3L532.7 536.2L523.5 538.9Z" fill="#657929" stroke="#657929" stroke-width=".8"/><path d="M529.1 524.3L538.5 521.7L541.9 533.4L532.7 536.2Z" fill="#5c813a" stroke="#5c813a" stroke-width=".8"/><path d="M538.5 521.7L547.9 519.1L551.1 530.6L541.9 533.4Z" fill="#4f864b" stroke="#4f864b" stroke-width=".8"/><path d="M547.9 519.1L557.3 516.5L560.3 527.9L551.1 530.6Z" fill="#418659" stroke="#418659" stroke-width=".8"/><path d="M557.3 516.5L566.7 513.9L569.5 525.1L560.3 527.9Z" fill="#348162" stroke="#348162" stroke-width=".8"/><path d="M566.7 513.9L576.0 511.3L578.7 522.4L569.5 525.1Z" fill="#277967" stroke="#277967" stroke-width=".8"/><path d="M576.0 511.3L585.4 508.6L587.9 519.6L578.7 522.4Z" fill="#1b6e67" stroke="#1b6e67" stroke-width=".8"/><path d="M585.4 508.6L590.2 506.6L592.7 517.5L587.9 519.6Z" fill="#53758e" stroke="#53758e" stroke-width=".8"/><path d="M590.2 506.6L619.5 494.1L622.6 504.7L592.7 517.5Z" fill="#587c97" stroke="#587c97" stroke-width=".8"/><path d="M514.3 541.7L523.5 538.9L527.6 550.8L518.6 553.8Z" fill="#676f1c" stroke="#676f1c" stroke-width=".8"/><path d="M523.5 538.9L532.7 536.2L536.6 547.9L527.6 550.8Z" fill="#637a2c" stroke="#637a2c" stroke-width=".8"/><path d="M532.7 536.2L541.9 533.4L545.6 545.0L536.6 547.9Z" fill="#5a833e" stroke="#5a833e" stroke-width=".8"/><path d="M541.9 533.4L551.1 530.6L554.6 542.1L545.6 545.0Z" fill="#4c8750" stroke="#4c8750" stroke-width=".8"/><path d="M551.1 530.6L560.3 527.9L563.6 539.2L554.6 542.1Z" fill="#3e875e" stroke="#3e875e" stroke-width=".8"/><path d="M560.3 527.9L569.5 525.1L572.6 536.3L563.6 539.2Z" fill="#308367" stroke="#308367" stroke-width=".8"/><path d="M569.5 525.1L578.7 522.4L581.6 533.4L572.6 536.3Z" fill="#237a6c" stroke="#237a6c" stroke-width=".8"/><path d="M578.7 522.4L587.9 519.6L590.5 530.5L581.6 533.4Z" fill="#186f6c" stroke="#186f6c" stroke-width=".8"/><path d="M587.9 519.6L592.7 517.5L595.5 528.3L590.5 530.5Z" fill="#4f748f" stroke="#4f748f" stroke-width=".8"/><path d="M592.7 517.5L622.6 504.7L626.0 515.1L595.5 528.3Z" fill="#547c98" stroke="#547c98" stroke-width=".8"/><path d="M518.6 553.8L527.6 550.8L532.1 562.6L523.3 565.7Z" fill="#66701e" stroke="#66701e" stroke-width=".8"/><path d="M527.6 550.8L536.6 547.9L540.8 559.6L532.1 562.6Z" fill="#617c2f" stroke="#617c2f" stroke-width=".8"/><path d="M536.6 547.9L545.6 545.0L549.6 556.5L540.8 559.6Z" fill="#578441" stroke="#578441" stroke-width=".8"/><path d="M545.6 545.0L554.6 542.1L558.4 553.5L549.6 556.5Z" fill="#498854" stroke="#498854" stroke-width=".8"/><path d="M554.6 542.1L563.6 539.2L567.2 550.4L558.4 553.5Z" fill="#3a8863" stroke="#3a8863" stroke-width=".8"/><path d="M563.6 539.2L572.6 536.3L575.9 547.4L567.2 550.4Z" fill="#2c846c" stroke="#2c846c" stroke-width=".8"/><path d="M572.6 536.3L581.6 533.4L584.7 544.3L575.9 547.4Z" fill="#1f7c71" stroke="#1f7c71" stroke-width=".8"/><path d="M581.6 533.4L590.5 530.5L593.5 541.3L584.7 544.3Z" fill="#156f70" stroke="#156f70" stroke-width=".8"/><path d="M590.5 530.5L595.5 528.3L598.6 539.1L593.5 541.3Z" fill="#4d738e" stroke="#4d738e" stroke-width=".8"/><path d="M595.5 528.3L626.0 515.1L629.7 525.4L598.6 539.1Z" fill="#527a97" stroke="#527a97" stroke-width=".8"/><path d="M523.3 565.7L532.1 562.6L536.8 574.3L528.2 577.5Z" fill="#657120" stroke="#657120" stroke-width=".8"/><path d="M532.1 562.6L540.8 559.6L545.4 571.1L536.8 574.3Z" fill="#607d32" stroke="#607d32" stroke-width=".8"/><path d="M540.8 559.6L549.6 556.5L553.9 568.0L545.4 571.1Z" fill="#558545" stroke="#558545" stroke-width=".8"/><path d="M549.6 556.5L558.4 553.5L562.5 564.8L553.9 568.0Z" fill="#458a59" stroke="#458a59" stroke-width=".8"/><path d="M558.4 553.5L567.2 550.4L571.1 561.6L562.5 564.8Z" fill="#368a68" stroke="#368a68" stroke-width=".8"/><path d="M567.2 550.4L575.9 547.4L579.6 558.4L571.1 561.6Z" fill="#288572" stroke="#288572" stroke-width=".8"/><path d="M575.9 547.4L584.7 544.3L588.2 555.2L579.6 558.4Z" fill="#1b7d76" stroke="#1b7d76" stroke-width=".8"/><path d="M584.7 544.3L593.5 541.3L596.8 552.0L588.2 555.2Z" fill="#156d71" stroke="#156d71" stroke-width=".8"/><path d="M593.5 541.3L598.6 539.1L601.9 549.7L596.8 552.0Z" fill="#4b718e" stroke="#4b718e" stroke-width=".8"/><path d="M598.6 539.1L629.7 525.4L633.8 535.6L601.9 549.7Z" fill="#507897" stroke="#507897" stroke-width=".8"/><path d="M528.2 577.5L536.8 574.3L541.8 585.9L533.5 589.2Z" fill="#647424" stroke="#647424" stroke-width=".8"/><path d="M536.8 574.3L545.4 571.1L550.2 582.6L541.8 585.9Z" fill="#5d8037" stroke="#5d8037" stroke-width=".8"/><path d="M545.4 571.1L553.9 568.0L558.5 579.2L550.2 582.6Z" fill="#51894d" stroke="#51894d" stroke-width=".8"/><path d="M553.9 568.0L562.5 564.8L566.9 575.9L558.5 579.2Z" fill="#408d62" stroke="#408d62" stroke-width=".8"/><path d="M562.5 564.8L571.1 561.6L575.2 572.6L566.9 575.9Z" fill="#308d73" stroke="#308d73" stroke-width=".8"/><path d="M571.1 561.6L579.6 558.4L583.6 569.3L575.2 572.6Z" fill="#21897c" stroke="#21897c" stroke-width=".8"/><path d="M579.6 558.4L588.2 555.2L591.9 566.0L583.6 569.3Z" fill="#157f80" stroke="#157f80" stroke-width=".8"/><path d="M588.2 555.2L596.8 552.0L600.3 562.7L591.9 566.0Z" fill="#156874" stroke="#156874" stroke-width=".8"/><path d="M596.8 552.0L601.9 549.7L605.6 560.3L600.3 562.7Z" fill="#496f8d" stroke="#496f8d" stroke-width=".8"/><path d="M601.9 549.7L633.8 535.6L638.1 545.7L605.6 560.3Z" fill="#4d7796" stroke="#4d7796" stroke-width=".8"/><path d="M533.5 589.2L541.8 585.9L547.1 597.3L539.0 600.7Z" fill="#637729" stroke="#637729" stroke-width=".8"/><path d="M541.8 585.9L550.2 582.6L555.3 593.9L547.1 597.3Z" fill="#5a843e" stroke="#5a843e" stroke-width=".8"/><path d="M550.2 582.6L558.5 579.2L563.4 590.4L555.3 593.9Z" fill="#4c8d55" stroke="#4c8d55" stroke-width=".8"/><path d="M558.5 579.2L566.9 575.9L571.6 587.0L563.4 590.4Z" fill="#3a926d" stroke="#3a926d" stroke-width=".8"/><path d="M566.9 575.9L575.2 572.6L579.7 583.5L571.6 587.0Z" fill="#28927e" stroke="#28927e" stroke-width=".8"/><path d="M575.2 572.6L583.6 569.3L587.8 580.1L579.7 583.5Z" fill="#198d89" stroke="#198d89" stroke-width=".8"/><path d="M583.6 569.3L591.9 566.0L596.0 576.6L587.8 580.1Z" fill="#157a84" stroke="#157a84" stroke-width=".8"/><path d="M591.9 566.0L600.3 562.7L604.1 573.2L596.0 576.6Z" fill="#156377" stroke="#156377" stroke-width=".8"/><path d="M600.3 562.7L605.6 560.3L609.5 570.7L604.1 573.2Z" fill="#466e8c" stroke="#466e8c" stroke-width=".8"/><path d="M605.6 560.3L638.1 545.7L642.7 555.7L609.5 570.7Z" fill="#4a7595" stroke="#4a7595" stroke-width=".8"/><path d="M539.0 600.7L547.1 597.3L552.8 608.6L544.9 612.1Z" fill="#617a2e" stroke="#617a2e" stroke-width=".8"/><path d="M547.1 597.3L555.3 593.9L560.7 605.0L552.8 608.6Z" fill="#578745" stroke="#578745" stroke-width=".8"/><path d="M555.3 593.9L563.4 590.4L568.6 601.4L560.7 605.0Z" fill="#47915f" stroke="#47915f" stroke-width=".8"/><path d="M563.4 590.4L571.6 587.0L576.5 597.9L568.6 601.4Z" fill="#339678" stroke="#339678" stroke-width=".8"/><path d="M571.6 587.0L579.7 583.5L584.5 594.3L576.5 597.9Z" fill="#20968b" stroke="#20968b" stroke-width=".8"/><path d="M579.7 583.5L587.8 580.1L592.4 590.8L584.5 594.3Z" fill="#158c91" stroke="#158c91" stroke-width=".8"/><path d="M587.8 580.1L596.0 576.6L600.3 587.2L592.4 590.8Z" fill="#157587" stroke="#157587" stroke-width=".8"/><path d="M596.0 576.6L604.1 573.2L608.2 583.6L600.3 587.2Z" fill="#155e7a" stroke="#155e7a" stroke-width=".8"/><path d="M604.1 573.2L609.5 570.7L613.7 581.1L608.2 583.6Z" fill="#436c8b" stroke="#436c8b" stroke-width=".8"/><path d="M609.5 570.7L642.7 555.7L647.6 565.5L613.7 581.1Z" fill="#487394" stroke="#487394" stroke-width=".8"/><path d="M544.9 612.1L552.8 608.6L558.7 619.7L551.0 623.4Z" fill="#5f7e33" stroke="#5f7e33" stroke-width=".8"/><path d="M552.8 608.6L560.7 605.0L566.4 616.0L558.7 619.7Z" fill="#538b4d" stroke="#538b4d" stroke-width=".8"/><path d="M560.7 605.0L568.6 601.4L574.1 612.3L566.4 616.0Z" fill="#419568" stroke="#419568" stroke-width=".8"/><path d="M568.6 601.4L576.5 597.9L581.8 608.7L574.1 612.3Z" fill="#2b9a83" stroke="#2b9a83" stroke-width=".8"/><path d="M576.5 597.9L584.5 594.3L589.5 605.0L581.8 608.7Z" fill="#179a98" stroke="#179a98" stroke-width=".8"/><path d="M584.5 594.3L592.4 590.8L597.2 601.3L589.5 605.0Z" fill="#158795" stroke="#158795" stroke-width=".8"/><path d="M592.4 590.8L600.3 587.2L604.9 597.6L597.2 601.3Z" fill="#156f8b" stroke="#156f8b" stroke-width=".8"/><path d="M600.3 587.2L608.2 583.6L612.6 593.9L604.9 597.6Z" fill="#15587e" stroke="#15587e" stroke-width=".8"/><path d="M608.2 583.6L613.7 581.1L618.3 591.3L612.6 593.9Z" fill="#416a8a" stroke="#416a8a" stroke-width=".8"/><path d="M613.7 581.1L647.6 565.5L652.9 575.1L618.3 591.3Z" fill="#457193" stroke="#457193" stroke-width=".8"/><path d="M551.0 623.4L558.7 619.7L564.9 630.7L557.4 634.5Z" fill="#5c8139" stroke="#5c8139" stroke-width=".8"/><path d="M558.7 619.7L566.4 616.0L572.4 626.9L564.9 630.7Z" fill="#4f8f54" stroke="#4f8f54" stroke-width=".8"/><path d="M566.4 616.0L574.1 612.3L579.9 623.1L572.4 626.9Z" fill="#3b9972" stroke="#3b9972" stroke-width=".8"/><path d="M574.1 612.3L581.8 608.7L587.4 619.3L579.9 623.1Z" fill="#239e90" stroke="#239e90" stroke-width=".8"/><path d="M581.8 608.7L589.5 605.0L594.9 615.5L587.4 619.3Z" fill="#15979e" stroke="#15979e" stroke-width=".8"/><path d="M589.5 605.0L597.2 601.3L602.4 611.7L594.9 615.5Z" fill="#158099" stroke="#158099" stroke-width=".8"/><path d="M597.2 601.3L604.9 597.6L609.9 607.9L602.4 611.7Z" fill="#15688f" stroke="#15688f" stroke-width=".8"/><path d="M604.9 597.6L612.6 593.9L617.4 604.1L609.9 607.9Z" fill="#155181" stroke="#155181" stroke-width=".8"/><path d="M612.6 593.9L618.3 591.3L623.1 601.4L617.4 604.1Z" fill="#3d6789" stroke="#3d6789" stroke-width=".8"/><path d="M618.3 591.3L652.9 575.1L658.3 584.6L623.1 601.4Z" fill="#416e92" stroke="#416e92" stroke-width=".8"/><path d="M557.4 634.5L564.9 630.7L571.4 641.5L564.2 645.4Z" fill="#5a843f" stroke="#5a843f" stroke-width=".8"/><path d="M564.9 630.7L572.4 626.9L578.7 637.5L571.4 641.5Z" fill="#4a925d" stroke="#4a925d" stroke-width=".8"/><path d="M572.4 626.9L579.9 623.1L586.0 633.6L578.7 637.5Z" fill="#359d7d" stroke="#359d7d" stroke-width=".8"/><path d="M579.9 623.1L587.4 619.3L593.3 629.7L586.0 633.6Z" fill="#1aa29c" stroke="#1aa29c" stroke-width=".8"/><path d="M587.4 619.3L594.9 615.5L600.5 625.8L593.3 629.7Z" fill="#1591a2" stroke="#1591a2" stroke-width=".8"/><path d="M594.9 615.5L602.4 611.7L607.8 621.9L600.5 625.8Z" fill="#157a9d" stroke="#157a9d" stroke-width=".8"/><path d="M602.4 611.7L609.9 607.9L615.1 618.0L607.8 621.9Z" fill="#156192" stroke="#156192" stroke-width=".8"/><path d="M609.9 607.9L617.4 604.1L622.4 614.1L615.1 618.0Z" fill="#154a84" stroke="#154a84" stroke-width=".8"/><path d="M617.4 604.1L623.1 601.4L628.2 611.3L622.4 614.1Z" fill="#3a6487" stroke="#3a6487" stroke-width=".8"/><path d="M623.1 601.4L658.3 584.6L664.1 594.0L628.2 611.3Z" fill="#3d6a8f" stroke="#3d6a8f" stroke-width=".8"/><path d="M564.2 645.4L571.4 641.5L578.2 652.1L571.2 656.1Z" fill="#578745" stroke="#578745" stroke-width=".8"/><path d="M571.4 641.5L578.7 637.5L585.3 648.1L578.2 652.1Z" fill="#469665" stroke="#469665" stroke-width=".8"/><path d="M578.7 637.5L586.0 633.6L592.4 644.0L585.3 648.1Z" fill="#2ea188" stroke="#2ea188" stroke-width=".8"/><path d="M586.0 633.6L593.3 629.7L599.4 640.0L592.4 644.0Z" fill="#15a3a6" stroke="#15a3a6" stroke-width=".8"/><path d="M593.3 629.7L600.5 625.8L606.5 636.0L599.4 640.0Z" fill="#158aa6" stroke="#158aa6" stroke-width=".8"/><path d="M600.5 625.8L607.8 621.9L613.6 632.0L606.5 636.0Z" fill="#1572a1" stroke="#1572a1" stroke-width=".8"/><path d="M607.8 621.9L615.1 618.0L620.6 628.0L613.6 632.0Z" fill="#155a96" stroke="#155a96" stroke-width=".8"/><path d="M615.1 618.0L622.4 614.1L627.7 624.0L620.6 628.0Z" fill="#154287" stroke="#154287" stroke-width=".8"/><path d="M622.4 614.1L628.2 611.3L633.6 621.1L627.7 624.0Z" fill="#396183" stroke="#396183" stroke-width=".8"/><path d="M628.2 611.3L664.1 594.0L670.2 603.1L633.6 621.1Z" fill="#3c688b" stroke="#3c688b" stroke-width=".8"/><path d="M571.2 656.1L578.2 652.1L585.3 662.5L578.5 666.6Z" fill="#548b4c" stroke="#548b4c" stroke-width=".8"/><path d="M578.2 652.1L585.3 648.1L592.2 658.4L585.3 662.5Z" fill="#409a6e" stroke="#409a6e" stroke-width=".8"/><path d="M585.3 648.1L592.4 644.0L599.1 654.3L592.2 658.4Z" fill="#26a594" stroke="#26a594" stroke-width=".8"/><path d="M592.4 644.0L599.4 640.0L605.9 650.1L599.1 654.3Z" fill="#159eab" stroke="#159eab" stroke-width=".8"/><path d="M599.4 640.0L606.5 636.0L612.8 646.0L605.9 650.1Z" fill="#1585ab" stroke="#1585ab" stroke-width=".8"/><path d="M606.5 636.0L613.6 632.0L619.6 641.9L612.8 646.0Z" fill="#156da5" stroke="#156da5" stroke-width=".8"/><path d="M613.6 632.0L620.6 628.0L626.5 637.8L619.6 641.9Z" fill="#15559a" stroke="#15559a" stroke-width=".8"/><path d="M620.6 628.0L627.7 624.0L633.3 633.7L626.5 637.8Z" fill="#153e8b" stroke="#153e8b" stroke-width=".8"/><path d="M627.7 624.0L633.6 621.1L639.4 630.7L633.3 633.7Z" fill="#385f7f" stroke="#385f7f" stroke-width=".8"/><path d="M633.6 621.1L670.2 603.1L676.5 612.1L639.4 630.7Z" fill="#3c6587" stroke="#3c6587" stroke-width=".8"/><path d="M578.5 666.6L585.3 662.5L592.7 672.7L586.1 676.9Z" fill="#508f54" stroke="#508f54" stroke-width=".8"/><path d="M585.3 662.5L592.2 658.4L599.4 668.5L592.7 672.7Z" fill="#3a9e79" stroke="#3a9e79" stroke-width=".8"/><path d="M592.2 658.4L599.1 654.3L606.0 664.3L599.4 668.5Z" fill="#1eaaa0" stroke="#1eaaa0" stroke-width=".8"/><path d="M599.1 654.3L605.9 650.1L612.7 660.0L606.0 664.3Z" fill="#1599b0" stroke="#1599b0" stroke-width=".8"/><path d="M605.9 650.1L612.8 646.0L619.3 655.8L612.7 660.0Z" fill="#157fb0" stroke="#157fb0" stroke-width=".8"/><path d="M612.8 646.0L619.6 641.9L626.0 651.6L619.3 655.8Z" fill="#1568aa" stroke="#1568aa" stroke-width=".8"/><path d="M619.6 641.9L626.5 637.8L632.6 647.4L626.0 651.6Z" fill="#15519e" stroke="#15519e" stroke-width=".8"/><path d="M626.5 637.8L633.3 633.7L639.3 643.2L632.6 647.4Z" fill="#153b8f" stroke="#153b8f" stroke-width=".8"/><path d="M633.3 633.7L639.4 630.7L645.4 640.1L639.3 643.2Z" fill="#375c7a" stroke="#375c7a" stroke-width=".8"/><path d="M639.4 630.7L676.5 612.1L683.1 620.9L645.4 640.1Z" fill="#3b6282" stroke="#3b6282" stroke-width=".8"/><path d="M586.1 676.9L592.7 672.7L600.4 682.7L593.9 687.0Z" fill="#4b925c" stroke="#4b925c" stroke-width=".8"/><path d="M592.7 672.7L599.4 668.5L606.8 678.4L600.4 682.7Z" fill="#34a383" stroke="#34a383" stroke-width=".8"/><path d="M599.4 668.5L606.0 664.3L613.3 674.1L606.8 678.4Z" fill="#16aead" stroke="#16aead" stroke-width=".8"/><path d="M606.0 664.3L612.7 660.0L619.8 669.7L613.3 674.1Z" fill="#1594b4" stroke="#1594b4" stroke-width=".8"/><path d="M612.7 660.0L619.3 655.8L626.2 665.4L619.8 669.7Z" fill="#1579b4" stroke="#1579b4" stroke-width=".8"/><path d="M619.3 655.8L626.0 651.6L632.7 661.1L626.2 665.4Z" fill="#1563ae" stroke="#1563ae" stroke-width=".8"/><path d="M626.0 651.6L632.6 647.4L639.1 656.8L632.7 661.1Z" fill="#154ca3" stroke="#154ca3" stroke-width=".8"/><path d="M632.6 647.4L639.3 643.2L645.6 652.5L639.1 656.8Z" fill="#153792" stroke="#153792" stroke-width=".8"/><path d="M639.3 643.2L645.4 640.1L651.8 649.2L645.6 652.5Z" fill="#365976" stroke="#365976" stroke-width=".8"/><path d="M645.4 640.1L683.1 620.9L689.9 629.5L651.8 649.2Z" fill="#3a5e7e" stroke="#3a5e7e" stroke-width=".8"/><path d="M593.9 687.0L600.4 682.7L608.3 692.5L602.1 696.9Z" fill="#479664" stroke="#479664" stroke-width=".8"/><path d="M600.4 682.7L606.8 678.4L614.6 688.1L608.3 692.5Z" fill="#2da78e" stroke="#2da78e" stroke-width=".8"/><path d="M606.8 678.4L613.3 674.1L620.9 683.6L614.6 688.1Z" fill="#15abb3" stroke="#15abb3" stroke-width=".8"/><path d="M613.3 674.1L619.8 669.7L627.1 679.2L620.9 683.6Z" fill="#158eb9" stroke="#158eb9" stroke-width=".8"/><path d="M619.8 669.7L626.2 665.4L633.4 674.8L627.1 679.2Z" fill="#1573b9" stroke="#1573b9" stroke-width=".8"/><path d="M626.2 665.4L632.7 661.1L639.6 670.4L633.4 674.8Z" fill="#155eb3" stroke="#155eb3" stroke-width=".8"/><path d="M632.7 661.1L639.1 656.8L645.9 666.0L639.6 670.4Z" fill="#1548a7" stroke="#1548a7" stroke-width=".8"/><path d="M639.1 656.8L645.6 652.5L652.1 661.5L645.9 666.0Z" fill="#153496" stroke="#153496" stroke-width=".8"/><path d="M645.6 652.5L651.8 649.2L658.4 658.2L652.1 661.5Z" fill="#355571" stroke="#355571" stroke-width=".8"/><path d="M651.8 649.2L689.9 629.5L697.0 637.8L658.4 658.2Z" fill="#395b78" stroke="#395b78" stroke-width=".8"/><path d="M602.1 696.9L608.3 692.5L616.6 702.0L610.5 706.6Z" fill="#429a6d" stroke="#429a6d" stroke-width=".8"/><path d="M608.3 692.5L614.6 688.1L622.6 697.5L616.6 702.0Z" fill="#26ab9a" stroke="#26ab9a" stroke-width=".8"/><path d="M614.6 688.1L620.9 683.6L628.7 693.0L622.6 697.5Z" fill="#15a6b8" stroke="#15a6b8" stroke-width=".8"/><path d="M620.9 683.6L627.1 679.2L634.8 688.5L628.7 693.0Z" fill="#1587be" stroke="#1587be" stroke-width=".8"/><path d="M627.1 679.2L633.4 674.8L640.8 683.9L634.8 688.5Z" fill="#156bbe" stroke="#156bbe" stroke-width=".8"/><path d="M633.4 674.8L639.6 670.4L646.9 679.4L640.8 683.9Z" fill="#1557b8" stroke="#1557b8" stroke-width=".8"/><path d="M639.6 670.4L645.9 666.0L653.0 674.9L646.9 679.4Z" fill="#1543ab" stroke="#1543ab" stroke-width=".8"/><path d="M645.9 666.0L652.1 661.5L659.0 670.4L653.0 674.9Z" fill="#15309a" stroke="#15309a" stroke-width=".8"/><path d="M652.1 661.5L658.4 658.2L665.4 667.0L659.0 670.4Z" fill="#345269" stroke="#345269" stroke-width=".8"/><path d="M658.4 658.2L697.0 637.8L704.4 645.9L665.4 667.0Z" fill="#385870" stroke="#385870" stroke-width=".8"/><path d="M610.5 706.6L616.6 702.0L625.1 711.3L619.2 716.0Z" fill="#3c9e76" stroke="#3c9e76" stroke-width=".8"/><path d="M616.6 702.0L622.6 697.5L631.0 706.7L625.1 711.3Z" fill="#1eafa6" stroke="#1eafa6" stroke-width=".8"/><path d="M622.6 697.5L628.7 693.0L636.8 702.1L631.0 706.7Z" fill="#15a1bc" stroke="#15a1bc" stroke-width=".8"/><path d="M628.7 693.0L634.8 688.5L642.7 697.5L636.8 702.1Z" fill="#1580c3" stroke="#1580c3" stroke-width=".8"/><path d="M634.8 688.5L640.8 683.9L648.6 692.8L642.7 697.5Z" fill="#1564c3" stroke="#1564c3" stroke-width=".8"/><path d="M640.8 683.9L646.9 679.4L654.5 688.2L648.6 692.8Z" fill="#1551bc" stroke="#1551bc" stroke-width=".8"/><path d="M646.9 679.4L653.0 674.9L660.4 683.6L654.5 688.2Z" fill="#153eaf" stroke="#153eaf" stroke-width=".8"/><path d="M653.0 674.9L659.0 670.4L666.3 679.0L660.4 683.6Z" fill="#152c9e" stroke="#152c9e" stroke-width=".8"/><path d="M659.0 670.4L665.4 667.0L672.7 675.4L666.3 679.0Z" fill="#355462" stroke="#355462" stroke-width=".8"/><path d="M665.4 667.0L704.4 645.9L712.1 653.8L672.7 675.4Z" fill="#385a68" stroke="#385a68" stroke-width=".8"/><path d="M619.2 716.0L625.1 711.3L633.8 720.4L628.1 725.1Z" fill="#36a280" stroke="#36a280" stroke-width=".8"/><path d="M625.1 711.3L631.0 706.7L639.6 715.7L633.8 720.4Z" fill="#16b4b2" stroke="#16b4b2" stroke-width=".8"/><path d="M631.0 706.7L636.8 702.1L645.3 710.9L639.6 715.7Z" fill="#159bc1" stroke="#159bc1" stroke-width=".8"/><path d="M636.8 702.1L642.7 697.5L651.0 706.2L645.3 710.9Z" fill="#1578c8" stroke="#1578c8" stroke-width=".8"/><path d="M642.7 697.5L648.6 692.8L656.7 701.5L651.0 706.2Z" fill="#155bc8" stroke="#155bc8" stroke-width=".8"/><path d="M648.6 692.8L654.5 688.2L662.4 696.7L656.7 701.5Z" fill="#154ac1" stroke="#154ac1" stroke-width=".8"/><path d="M654.5 688.2L660.4 683.6L668.1 692.0L662.4 696.7Z" fill="#1538b4" stroke="#1538b4" stroke-width=".8"/><path d="M660.4 683.6L666.3 679.0L673.8 687.3L668.1 692.0Z" fill="#1528a2" stroke="#1528a2" stroke-width=".8"/><path d="M666.3 679.0L672.7 675.4L680.2 683.7L673.8 687.3Z" fill="#355659" stroke="#355659" stroke-width=".8"/><path d="M672.7 675.4L712.1 653.8L719.9 661.5L680.2 683.7Z" fill="#395c5f" stroke="#395c5f" stroke-width=".8"/><path d="M628.1 725.1L633.8 720.4L642.9 729.2L637.3 734.1Z" fill="#32a587" stroke="#32a587" stroke-width=".8"/><path d="M633.8 720.4L639.6 715.7L648.4 724.4L642.9 729.2Z" fill="#15b2b7" stroke="#15b2b7" stroke-width=".8"/><path d="M639.6 715.7L645.3 710.9L653.9 719.5L648.4 724.4Z" fill="#1597c4" stroke="#1597c4" stroke-width=".8"/><path d="M645.3 710.9L651.0 706.2L659.5 714.7L653.9 719.5Z" fill="#1572cb" stroke="#1572cb" stroke-width=".8"/><path d="M651.0 706.2L656.7 701.5L665.0 709.8L659.5 714.7Z" fill="#1556cb" stroke="#1556cb" stroke-width=".8"/><path d="M656.7 701.5L662.4 696.7L670.5 705.0L665.0 709.8Z" fill="#1545c4" stroke="#1545c4" stroke-width=".8"/><path d="M662.4 696.7L668.1 692.0L676.1 700.1L670.5 705.0Z" fill="#1534b7" stroke="#1534b7" stroke-width=".8"/><path d="M668.1 692.0L673.8 687.3L681.6 695.3L676.1 700.1Z" fill="#1525a5" stroke="#1525a5" stroke-width=".8"/><path d="M673.8 687.3L680.2 683.7L688.1 691.6L681.6 695.3Z" fill="#345b4d" stroke="#345b4d" stroke-width=".8"/><path d="M680.2 683.7L719.9 661.5L728.0 668.9L688.1 691.6Z" fill="#376152" stroke="#376152" stroke-width=".8"/><path d="M637.3 734.1L642.9 729.2L652.1 737.8L646.8 742.7Z" fill="#2ea78d" stroke="#2ea78d" stroke-width=".8"/><path d="M642.9 729.2L648.4 724.4L657.5 732.8L652.1 737.8Z" fill="#15b0b9" stroke="#15b0b9" stroke-width=".8"/><path d="M648.4 724.4L653.9 719.5L662.9 727.8L657.5 732.8Z" fill="#1594c7" stroke="#1594c7" stroke-width=".8"/><path d="M653.9 719.5L659.5 714.7L668.2 722.9L662.9 727.8Z" fill="#156ece" stroke="#156ece" stroke-width=".8"/><path d="M659.5 714.7L665.0 709.8L673.6 717.9L668.2 722.9Z" fill="#1552ce" stroke="#1552ce" stroke-width=".8"/><path d="M665.0 709.8L670.5 705.0L679.0 713.0L673.6 717.9Z" fill="#1542c7" stroke="#1542c7" stroke-width=".8"/><path d="M670.5 705.0L676.1 700.1L684.3 708.0L679.0 713.0Z" fill="#1532b9" stroke="#1532b9" stroke-width=".8"/><path d="M676.1 700.1L681.6 695.3L689.7 703.0L684.3 708.0Z" fill="#1524a7" stroke="#1524a7" stroke-width=".8"/><path d="M681.6 695.3L688.1 691.6L696.2 699.3L689.7 703.0Z" fill="#326043" stroke="#326043" stroke-width=".8"/><path d="M688.1 691.6L728.0 668.9L736.3 676.0L696.2 699.3Z" fill="#356647" stroke="#356647" stroke-width=".8"/><path d="M646.8 742.7L652.1 737.8L661.6 746.1L656.4 751.1Z" fill="#2aa993" stroke="#2aa993" stroke-width=".8"/><path d="M652.1 737.8L657.5 732.8L666.8 741.0L661.6 746.1Z" fill="#15aebc" stroke="#15aebc" stroke-width=".8"/><path d="M657.5 732.8L662.9 727.8L672.0 735.9L666.8 741.0Z" fill="#1591ca" stroke="#1591ca" stroke-width=".8"/><path d="M662.9 727.8L668.2 722.9L677.2 730.8L672.0 735.9Z" fill="#156ad1" stroke="#156ad1" stroke-width=".8"/><path d="M668.2 722.9L673.6 717.9L682.5 725.8L677.2 730.8Z" fill="#154ed1" stroke="#154ed1" stroke-width=".8"/><path d="M673.6 717.9L679.0 713.0L687.7 720.7L682.5 725.8Z" fill="#153fca" stroke="#153fca" stroke-width=".8"/><path d="M679.0 713.0L684.3 708.0L692.9 715.6L687.7 720.7Z" fill="#1531bc" stroke="#1531bc" stroke-width=".8"/><path d="M684.3 708.0L689.7 703.0L698.1 710.5L692.9 715.6Z" fill="#1523a9" stroke="#1523a9" stroke-width=".8"/><path d="M689.7 703.0L696.2 699.3L704.6 706.7L698.1 710.5Z" fill="#316340" stroke="#316340" stroke-width=".8"/><path d="M696.2 699.3L736.3 676.0L744.9 683.0L704.6 706.7Z" fill="#356c46" stroke="#356c46" stroke-width=".8"/><path d="M656.4 751.1L661.6 746.1L671.3 754.1L666.3 759.3Z" fill="#27ab99" stroke="#27ab99" stroke-width=".8"/><path d="M661.6 746.1L666.8 741.0L676.4 748.9L671.3 754.1Z" fill="#15abbe" stroke="#15abbe" stroke-width=".8"/><path d="M666.8 741.0L672.0 735.9L681.4 743.7L676.4 748.9Z" fill="#158dcc" stroke="#158dcc" stroke-width=".8"/><path d="M672.0 735.9L677.2 730.8L686.5 738.5L681.4 743.7Z" fill="#1566d4" stroke="#1566d4" stroke-width=".8"/><path d="M677.2 730.8L682.5 725.8L691.5 733.3L686.5 738.5Z" fill="#154ad4" stroke="#154ad4" stroke-width=".8"/><path d="M682.5 725.8L687.7 720.7L696.6 728.1L691.5 733.3Z" fill="#153ccc" stroke="#153ccc" stroke-width=".8"/><path d="M687.7 720.7L692.9 715.6L701.6 722.9L696.6 728.1Z" fill="#152fbe" stroke="#152fbe" stroke-width=".8"/><path d="M692.9 715.6L698.1 710.5L706.7 717.7L701.6 722.9Z" fill="#1522ab" stroke="#1522ab" stroke-width=".8"/><path d="M698.1 710.5L704.6 706.7L713.2 713.8L706.7 717.7Z" fill="#30663e" stroke="#30663e" stroke-width=".8"/><path d="M704.6 706.7L744.9 683.0L753.6 689.6L713.2 713.8Z" fill="#357245" stroke="#357245" stroke-width=".8"/><path d="M666.3 759.3L671.3 754.1L681.2 762.0L676.3 767.3Z" fill="#23ad9f" stroke="#23ad9f" stroke-width=".8"/><path d="M671.3 754.1L676.4 748.9L686.1 756.6L681.2 762.0Z" fill="#15a9c1" stroke="#15a9c1" stroke-width=".8"/><path d="M676.4 748.9L681.4 743.7L691.0 751.3L686.1 756.6Z" fill="#158acf" stroke="#158acf" stroke-width=".8"/><path d="M681.4 743.7L686.5 738.5L695.9 746.0L691.0 751.3Z" fill="#1562d6" stroke="#1562d6" stroke-width=".8"/><path d="M686.5 738.5L691.5 733.3L700.8 740.6L695.9 746.0Z" fill="#1546d6" stroke="#1546d6" stroke-width=".8"/><path d="M691.5 733.3L696.6 728.1L705.7 735.3L700.8 740.6Z" fill="#1539cf" stroke="#1539cf" stroke-width=".8"/><path d="M696.6 728.1L701.6 722.9L710.6 730.0L705.7 735.3Z" fill="#152dc1" stroke="#152dc1" stroke-width=".8"/><path d="M701.6 722.9L706.7 717.7L715.5 724.6L710.6 730.0Z" fill="#1521ad" stroke="#1521ad" stroke-width=".8"/><path d="M706.7 717.7L713.2 713.8L722.1 720.6L715.5 724.6Z" fill="#2e683b" stroke="#2e683b" stroke-width=".8"/><path d="M713.2 713.8L753.6 689.6L762.5 696.0L722.1 720.6Z" fill="#367844" stroke="#367844" stroke-width=".8"/><path d="M676.3 767.3L681.2 762.0L691.3 769.5L686.5 775.0Z" fill="#1fafa5" stroke="#1fafa5" stroke-width=".8"/><path d="M681.2 762.0L686.1 756.6L696.0 764.1L691.3 769.5Z" fill="#15a6c3" stroke="#15a6c3" stroke-width=".8"/><path d="M686.1 756.6L691.0 751.3L700.8 758.6L696.0 764.1Z" fill="#1586d2" stroke="#1586d2" stroke-width=".8"/><path d="M691.0 751.3L695.9 746.0L705.5 753.1L700.8 758.6Z" fill="#155ed9" stroke="#155ed9" stroke-width=".8"/><path d="M695.9 746.0L700.8 740.6L710.3 747.7L705.5 753.1Z" fill="#1542d9" stroke="#1542d9" stroke-width=".8"/><path d="M700.8 740.6L705.7 735.3L715.0 742.2L710.3 747.7Z" fill="#1536d2" stroke="#1536d2" stroke-width=".8"/><path d="M705.7 735.3L710.6 730.0L719.8 736.7L715.0 742.2Z" fill="#152bc3" stroke="#152bc3" stroke-width=".8"/><path d="M710.6 730.0L715.5 724.6L724.5 731.3L719.8 736.7Z" fill="#1520af" stroke="#1520af" stroke-width=".8"/><path d="M715.5 724.6L722.1 720.6L731.1 727.2L724.5 731.3Z" fill="#2e6939" stroke="#2e6939" stroke-width=".8"/><path d="M722.1 720.6L762.5 696.0L771.6 702.2L731.1 727.2Z" fill="#367d43" stroke="#367d43" stroke-width=".8"/><path d="M686.5 775.0L691.3 769.5L701.5 776.9L696.9 782.5Z" fill="#1ab2ac" stroke="#1ab2ac" stroke-width=".8"/><path d="M691.3 769.5L696.0 764.1L706.1 771.3L701.5 776.9Z" fill="#15a3c6" stroke="#15a3c6" stroke-width=".8"/><path d="M696.0 764.1L700.8 758.6L710.7 765.7L706.1 771.3Z" fill="#1583d4" stroke="#1583d4" stroke-width=".8"/><path d="M700.8 758.6L705.5 753.1L715.3 760.1L710.7 765.7Z" fill="#1559dc" stroke="#1559dc" stroke-width=".8"/><path d="M705.5 753.1L710.3 747.7L719.9 754.5L715.3 760.1Z" fill="#153edc" stroke="#153edc" stroke-width=".8"/><path d="M710.3 747.7L715.0 742.2L724.5 748.9L719.9 754.5Z" fill="#1533d4" stroke="#1533d4" stroke-width=".8"/><path d="M715.0 742.2L719.8 736.7L729.1 743.3L724.5 748.9Z" fill="#1528c6" stroke="#1528c6" stroke-width=".8"/><path d="M719.8 736.7L724.5 731.3L733.7 737.6L729.1 743.3Z" fill="#151fb2" stroke="#151fb2" stroke-width=".8"/><path d="M724.5 731.3L731.1 727.2L740.3 733.5L733.7 737.6Z" fill="#2e6737" stroke="#2e6737" stroke-width=".8"/><path d="M731.1 727.2L771.6 702.2L780.8 708.1L740.3 733.5Z" fill="#397e44" stroke="#397e44" stroke-width=".8"/><path d="M696.9 782.5L701.5 776.9L711.9 784.1L707.4 789.8Z" fill="#16b4b2" stroke="#16b4b2" stroke-width=".8"/><path d="M701.5 776.9L706.1 771.3L716.4 778.3L711.9 784.1Z" fill="#15a0c8" stroke="#15a0c8" stroke-width=".8"/><path d="M706.1 771.3L710.7 765.7L720.8 772.5L716.4 778.3Z" fill="#157fd7" stroke="#157fd7" stroke-width=".8"/><path d="M710.7 765.7L715.3 760.1L725.3 766.8L720.8 772.5Z" fill="#1555df" stroke="#1555df" stroke-width=".8"/><path d="M715.3 760.1L719.9 754.5L729.8 761.0L725.3 766.8Z" fill="#1539df" stroke="#1539df" stroke-width=".8"/><path d="M719.9 754.5L724.5 748.9L734.2 755.3L729.8 761.0Z" fill="#1530d7" stroke="#1530d7" stroke-width=".8"/><path d="M724.5 748.9L729.1 743.3L738.7 749.5L734.2 755.3Z" fill="#1526c8" stroke="#1526c8" stroke-width=".8"/><path d="M729.1 743.3L733.7 737.6L743.1 743.7L738.7 749.5Z" fill="#151eb4" stroke="#151eb4" stroke-width=".8"/><path d="M733.7 737.6L740.3 733.5L749.7 739.5L743.1 743.7Z" fill="#2f6535" stroke="#2f6535" stroke-width=".8"/><path d="M740.3 733.5L780.8 708.1L790.2 713.8L749.7 739.5Z" fill="#3c8044" stroke="#3c8044" stroke-width=".8"/><path d="M707.4 789.8L711.9 784.1L722.4 791.0L718.1 796.9Z" fill="#15b2b5" stroke="#15b2b5" stroke-width=".8"/><path d="M711.9 784.1L716.4 778.3L726.8 785.1L722.4 791.0Z" fill="#159dc9" stroke="#159dc9" stroke-width=".8"/><path d="M716.4 778.3L720.8 772.5L731.1 779.2L726.8 785.1Z" fill="#157bd8" stroke="#157bd8" stroke-width=".8"/><path d="M720.8 772.5L725.3 766.8L735.4 773.3L731.1 779.2Z" fill="#1551e0" stroke="#1551e0" stroke-width=".8"/><path d="M725.3 766.8L729.8 761.0L739.7 767.3L735.4 773.3Z" fill="#1536e0" stroke="#1536e0" stroke-width=".8"/><path d="M729.8 761.0L734.2 755.3L744.1 761.4L739.7 767.3Z" fill="#152dd8" stroke="#152dd8" stroke-width=".8"/><path d="M734.2 755.3L738.7 749.5L748.4 755.5L744.1 761.4Z" fill="#1525c9" stroke="#1525c9" stroke-width=".8"/><path d="M738.7 749.5L743.1 743.7L752.7 749.6L748.4 755.5Z" fill="#151db5" stroke="#151db5" stroke-width=".8"/><path d="M743.1 743.7L749.7 739.5L759.3 745.3L752.7 749.6Z" fill="#306334" stroke="#306334" stroke-width=".8"/><path d="M749.7 739.5L790.2 713.8L799.8 719.2L759.3 745.3Z" fill="#3e8144" stroke="#3e8144" stroke-width=".8"/><path d="M718.1 796.9L722.4 791.0L733.1 797.7L728.9 803.8Z" fill="#15adb5" stroke="#15adb5" stroke-width=".8"/><path d="M722.4 791.0L726.8 785.1L737.3 791.7L733.1 797.7Z" fill="#1599c9" stroke="#1599c9" stroke-width=".8"/><path d="M726.8 785.1L731.1 779.2L741.5 785.6L737.3 791.7Z" fill="#1578d8" stroke="#1578d8" stroke-width=".8"/><path d="M731.1 779.2L735.4 773.3L745.7 779.5L741.5 785.6Z" fill="#154fe0" stroke="#154fe0" stroke-width=".8"/><path d="M735.4 773.3L739.7 767.3L749.9 773.4L745.7 779.5Z" fill="#1534e0" stroke="#1534e0" stroke-width=".8"/><path d="M739.7 767.3L744.1 761.4L754.1 767.3L749.9 773.4Z" fill="#152cd8" stroke="#152cd8" stroke-width=".8"/><path d="M744.1 761.4L748.4 755.5L758.3 761.2L754.1 767.3Z" fill="#1523c9" stroke="#1523c9" stroke-width=".8"/><path d="M748.4 755.5L752.7 749.6L762.4 755.2L758.3 761.2Z" fill="#151cb5" stroke="#151cb5" stroke-width=".8"/><path d="M752.7 749.6L759.3 745.3L769.0 750.8L762.4 755.2Z" fill="#306132" stroke="#306132" stroke-width=".8"/><path d="M759.3 745.3L799.8 719.2L809.4 724.4L769.0 750.8Z" fill="#418344" stroke="#418344" stroke-width=".8"/><path d="M728.9 803.8L733.1 797.7L743.9 804.3L739.8 810.5Z" fill="#15a9b5" stroke="#15a9b5" stroke-width=".8"/><path d="M733.1 797.7L737.3 791.7L747.9 798.0L743.9 804.3Z" fill="#1595c9" stroke="#1595c9" stroke-width=".8"/><path d="M737.3 791.7L741.5 785.6L752.0 791.8L747.9 798.0Z" fill="#1575d8" stroke="#1575d8" stroke-width=".8"/><path d="M741.5 785.6L745.7 779.5L756.1 785.5L752.0 791.8Z" fill="#154ce0" stroke="#154ce0" stroke-width=".8"/><path d="M745.7 779.5L749.9 773.4L760.1 779.2L756.1 785.5Z" fill="#1532e0" stroke="#1532e0" stroke-width=".8"/><path d="M749.9 773.4L754.1 767.3L764.2 773.0L760.1 779.2Z" fill="#152ad8" stroke="#152ad8" stroke-width=".8"/><path d="M754.1 767.3L758.3 761.2L768.3 766.7L764.2 773.0Z" fill="#1522c9" stroke="#1522c9" stroke-width=".8"/><path d="M758.3 761.2L762.4 755.2L772.3 760.5L768.3 766.7Z" fill="#151bb5" stroke="#151bb5" stroke-width=".8"/><path d="M762.4 755.2L769.0 750.8L778.9 756.1L772.3 760.5Z" fill="#305e30" stroke="#305e30" stroke-width=".8"/><path d="M769.0 750.8L809.4 724.4L819.3 729.3L778.9 756.1Z" fill="#448544" stroke="#448544" stroke-width=".8"/><path d="M739.8 810.5L743.9 804.3L754.8 810.6L750.8 817.0Z" fill="#15a5b5" stroke="#15a5b5" stroke-width=".8"/><path d="M743.9 804.3L747.9 798.0L758.7 804.2L754.8 810.6Z" fill="#1591c9" stroke="#1591c9" stroke-width=".8"/><path d="M747.9 798.0L752.0 791.8L762.6 797.7L758.7 804.2Z" fill="#1571d8" stroke="#1571d8" stroke-width=".8"/><path d="M752.0 791.8L756.1 785.5L766.6 791.3L762.6 797.7Z" fill="#154ae0" stroke="#154ae0" stroke-width=".8"/><path d="M756.1 785.5L760.1 779.2L770.5 784.9L766.6 791.3Z" fill="#1530e0" stroke="#1530e0" stroke-width=".8"/><path d="M760.1 779.2L764.2 773.0L774.4 778.4L770.5 784.9Z" fill="#1529d8" stroke="#1529d8" stroke-width=".8"/><path d="M764.2 773.0L768.3 766.7L778.4 772.0L774.4 778.4Z" fill="#1521c9" stroke="#1521c9" stroke-width=".8"/><path d="M768.3 766.7L772.3 760.5L782.3 765.5L778.4 772.0Z" fill="#151bb5" stroke="#151bb5" stroke-width=".8"/><path d="M772.3 760.5L778.9 756.1L788.9 761.1L782.3 765.5Z" fill="#305c2f" stroke="#305c2f" stroke-width=".8"/><path d="M778.9 756.1L819.3 729.3L829.2 734.0L788.9 761.1Z" fill="#478644" stroke="#478644" stroke-width=".8"/><path d="M750.8 817.0L754.8 810.6L765.8 816.7L762.0 823.4Z" fill="#15a1b5" stroke="#15a1b5" stroke-width=".8"/><path d="M754.8 810.6L758.7 804.2L769.6 810.1L765.8 816.7Z" fill="#158dc9" stroke="#158dc9" stroke-width=".8"/><path d="M758.7 804.2L762.6 797.7L773.4 803.5L769.6 810.1Z" fill="#156ed8" stroke="#156ed8" stroke-width=".8"/><path d="M762.6 797.7L766.6 791.3L777.2 796.9L773.4 803.5Z" fill="#1547e0" stroke="#1547e0" stroke-width=".8"/><path d="M766.6 791.3L770.5 784.9L781.0 790.2L777.2 796.9Z" fill="#152fe0" stroke="#152fe0" stroke-width=".8"/><path d="M770.5 784.9L774.4 778.4L784.8 783.6L781.0 790.2Z" fill="#1527d8" stroke="#1527d8" stroke-width=".8"/><path d="M774.4 778.4L778.4 772.0L788.6 777.0L784.8 783.6Z" fill="#1520c9" stroke="#1520c9" stroke-width=".8"/><path d="M778.4 772.0L782.3 765.5L792.4 770.4L788.6 777.0Z" fill="#151ab5" stroke="#151ab5" stroke-width=".8"/><path d="M782.3 765.5L788.9 761.1L799.0 765.9L792.4 770.4Z" fill="#305a2d" stroke="#305a2d" stroke-width=".8"/><path d="M788.9 761.1L829.2 734.0L839.2 738.4L799.0 765.9Z" fill="#498844" stroke="#498844" stroke-width=".8"/><path d="M762.0 823.4L765.8 816.7L776.9 822.7L773.2 829.5Z" fill="#159db5" stroke="#159db5" stroke-width=".8"/><path d="M765.8 816.7L769.6 810.1L780.6 815.8L776.9 822.7Z" fill="#1589c9" stroke="#1589c9" stroke-width=".8"/><path d="M769.6 810.1L773.4 803.5L784.3 809.0L780.6 815.8Z" fill="#156bd8" stroke="#156bd8" stroke-width=".8"/><path d="M773.4 803.5L777.2 796.9L788.0 802.2L784.3 809.0Z" fill="#1545e0" stroke="#1545e0" stroke-width=".8"/><path d="M777.2 796.9L781.0 790.2L791.6 795.4L788.0 802.2Z" fill="#152de0" stroke="#152de0" stroke-width=".8"/><path d="M781.0 790.2L784.8 783.6L795.3 788.6L791.6 795.4Z" fill="#1526d8" stroke="#1526d8" stroke-width=".8"/><path d="M784.8 783.6L788.6 777.0L799.0 781.7L795.3 788.6Z" fill="#151fc9" stroke="#151fc9" stroke-width=".8"/><path d="M788.6 777.0L792.4 770.4L802.7 774.9L799.0 781.7Z" fill="#1519b5" stroke="#1519b5" stroke-width=".8"/><path d="M792.4 770.4L799.0 765.9L809.2 770.4L802.7 774.9Z" fill="#325b2d" stroke="#325b2d" stroke-width=".8"/><path d="M799.0 765.9L839.2 738.4L849.4 742.6L809.2 770.4Z" fill="#4c8a44" stroke="#4c8a44" stroke-width=".8"/><path d="M773.2 829.5L776.9 822.7L788.1 828.4L784.6 835.4Z" fill="#1598b5" stroke="#1598b5" stroke-width=".8"/><path d="M776.9 822.7L780.6 815.8L791.7 821.4L788.1 828.4Z" fill="#1585c9" stroke="#1585c9" stroke-width=".8"/><path d="M780.6 815.8L784.3 809.0L795.3 814.3L791.7 821.4Z" fill="#1567d8" stroke="#1567d8" stroke-width=".8"/><path d="M784.3 809.0L788.0 802.2L798.8 807.3L795.3 814.3Z" fill="#1542e0" stroke="#1542e0" stroke-width=".8"/><path d="M788.0 802.2L791.6 795.4L802.4 800.3L798.8 807.3Z" fill="#152be0" stroke="#152be0" stroke-width=".8"/><path d="M791.6 795.4L795.3 788.6L805.9 793.3L802.4 800.3Z" fill="#1524d8" stroke="#1524d8" stroke-width=".8"/><path d="M795.3 788.6L799.0 781.7L809.5 786.3L805.9 793.3Z" fill="#151ec9" stroke="#151ec9" stroke-width=".8"/><path d="M799.0 781.7L802.7 774.9L813.0 779.3L809.5 786.3Z" fill="#1518b5" stroke="#1518b5" stroke-width=".8"/><path d="M802.7 774.9L809.2 770.4L819.5 774.7L813.0 779.3Z" fill="#355c2e" stroke="#355c2e" stroke-width=".8"/><path d="M809.2 770.4L849.4 742.6L859.6 746.6L819.5 774.7Z" fill="#508c46" stroke="#508c46" stroke-width=".8"/><path d="M784.6 835.4L788.1 828.4L799.5 833.9L796.1 841.1Z" fill="#1594b5" stroke="#1594b5" stroke-width=".8"/><path d="M788.1 828.4L791.7 821.4L802.9 826.7L799.5 833.9Z" fill="#1581c9" stroke="#1581c9" stroke-width=".8"/><path d="M791.7 821.4L795.3 814.3L806.3 819.4L802.9 826.7Z" fill="#1564d8" stroke="#1564d8" stroke-width=".8"/><path d="M795.3 814.3L798.8 807.3L809.8 812.2L806.3 819.4Z" fill="#1540e0" stroke="#1540e0" stroke-width=".8"/><path d="M798.8 807.3L802.4 800.3L813.2 805.0L809.8 812.2Z" fill="#1529e0" stroke="#1529e0" stroke-width=".8"/><path d="M802.4 800.3L805.9 793.3L816.6 797.8L813.2 805.0Z" fill="#1523d8" stroke="#1523d8" stroke-width=".8"/><path d="M805.9 793.3L809.5 786.3L820.0 790.6L816.6 797.8Z" fill="#151dc9" stroke="#151dc9" stroke-width=".8"/><path d="M809.5 786.3L813.0 779.3L823.5 783.4L820.0 790.6Z" fill="#1518b5" stroke="#1518b5" stroke-width=".8"/><path d="M813.0 779.3L819.5 774.7L830.0 778.7L823.5 783.4Z" fill="#395e31" stroke="#395e31" stroke-width=".8"/><path d="M819.5 774.7L859.6 746.6L869.9 750.3L830.0 778.7Z" fill="#568e4a" stroke="#568e4a" stroke-width=".8"/><path d="M796.1 841.1L799.5 833.9L810.9 839.2L807.6 846.6Z" fill="#1590b5" stroke="#1590b5" stroke-width=".8"/><path d="M799.5 833.9L802.9 826.7L814.2 831.8L810.9 839.2Z" fill="#157dc9" stroke="#157dc9" stroke-width=".8"/><path d="M802.9 826.7L806.3 819.4L817.5 824.3L814.2 831.8Z" fill="#1561d8" stroke="#1561d8" stroke-width=".8"/><path d="M806.3 819.4L809.8 812.2L820.8 816.9L817.5 824.3Z" fill="#153de0" stroke="#153de0" stroke-width=".8"/><path d="M809.8 812.2L813.2 805.0L824.1 809.5L820.8 816.9Z" fill="#1527e0" stroke="#1527e0" stroke-width=".8"/><path d="M813.2 805.0L816.6 797.8L827.4 802.1L824.1 809.5Z" fill="#1521d8" stroke="#1521d8" stroke-width=".8"/><path d="M816.6 797.8L820.0 790.6L830.7 794.6L827.4 802.1Z" fill="#151cc9" stroke="#151cc9" stroke-width=".8"/><path d="M820.0 790.6L823.5 783.4L834.0 787.2L830.7 794.6Z" fill="#1517b5" stroke="#1517b5" stroke-width=".8"/><path d="M823.5 783.4L830.0 778.7L840.5 782.5L834.0 787.2Z" fill="#3c6033" stroke="#3c6033" stroke-width=".8"/><path d="M830.0 778.7L869.9 750.3L880.3 753.9L840.5 782.5Z" fill="#5c914e" stroke="#5c914e" stroke-width=".8"/><path d="M807.6 846.6L810.9 839.2L822.5 844.2L819.3 851.9Z" fill="#158cb4" stroke="#158cb4" stroke-width=".8"/><path d="M810.9 839.2L814.2 831.8L825.6 836.6L822.5 844.2Z" fill="#157ac9" stroke="#157ac9" stroke-width=".8"/><path d="M814.2 831.8L817.5 824.3L828.8 829.0L825.6 836.6Z" fill="#155ed8" stroke="#155ed8" stroke-width=".8"/><path d="M817.5 824.3L820.8 816.9L831.9 821.4L828.8 829.0Z" fill="#153bdf" stroke="#153bdf" stroke-width=".8"/><path d="M820.8 816.9L824.1 809.5L835.1 813.7L831.9 821.4Z" fill="#1526df" stroke="#1526df" stroke-width=".8"/><path d="M824.1 809.5L827.4 802.1L838.3 806.1L835.1 813.7Z" fill="#1520d8" stroke="#1520d8" stroke-width=".8"/><path d="M827.4 802.1L830.7 794.6L841.4 798.5L838.3 806.1Z" fill="#151bc9" stroke="#151bc9" stroke-width=".8"/><path d="M830.7 794.6L834.0 787.2L844.6 790.8L841.4 798.5Z" fill="#1516b4" stroke="#1516b4" stroke-width=".8"/><path d="M834.0 787.2L840.5 782.5L851.0 786.1L844.6 790.8Z" fill="#406136" stroke="#406136" stroke-width=".8"/><path d="M840.5 782.5L880.3 753.9L890.8 757.1L851.0 786.1Z" fill="#619352" stroke="#619352" stroke-width=".8"/><path d="M819.3 851.9L822.5 844.2L834.1 849.1L831.1 856.9Z" fill="#1589b4" stroke="#1589b4" stroke-width=".8"/><path d="M822.5 844.2L825.6 836.6L837.1 841.2L834.1 849.1Z" fill="#1577c8" stroke="#1577c8" stroke-width=".8"/><path d="M825.6 836.6L828.8 829.0L840.2 833.4L837.1 841.2Z" fill="#155cd7" stroke="#155cd7" stroke-width=".8"/><path d="M828.8 829.0L831.9 821.4L843.2 825.6L840.2 833.4Z" fill="#153adf" stroke="#153adf" stroke-width=".8"/><path d="M831.9 821.4L835.1 813.7L846.2 817.7L843.2 825.6Z" fill="#1525df" stroke="#1525df" stroke-width=".8"/><path d="M835.1 813.7L838.3 806.1L849.2 809.9L846.2 817.7Z" fill="#1520d7" stroke="#1520d7" stroke-width=".8"/><path d="M838.3 806.1L841.4 798.5L852.2 802.1L849.2 809.9Z" fill="#151ac8" stroke="#151ac8" stroke-width=".8"/><path d="M841.4 798.5L844.6 790.8L855.3 794.2L852.2 802.1Z" fill="#1516b4" stroke="#1516b4" stroke-width=".8"/><path d="M844.6 790.8L851.0 786.1L861.7 789.5L855.3 794.2Z" fill="#446339" stroke="#446339" stroke-width=".8"/><path d="M851.0 786.1L890.8 757.1L901.3 760.2L861.7 789.5Z" fill="#679656" stroke="#679656" stroke-width=".8"/><path d="M831.1 856.9L834.1 849.1L845.8 853.7L843.0 861.7Z" fill="#1586b3" stroke="#1586b3" stroke-width=".8"/><path d="M834.1 849.1L837.1 841.2L848.7 845.7L845.8 853.7Z" fill="#1574c8" stroke="#1574c8" stroke-width=".8"/><path d="M837.1 841.2L840.2 833.4L851.6 837.6L848.7 845.7Z" fill="#155ad7" stroke="#155ad7" stroke-width=".8"/><path d="M840.2 833.4L843.2 825.6L854.5 829.6L851.6 837.6Z" fill="#1538de" stroke="#1538de" stroke-width=".8"/><path d="M843.2 825.6L846.2 817.7L857.4 821.5L854.5 829.6Z" fill="#1524de" stroke="#1524de" stroke-width=".8"/><path d="M846.2 817.7L849.2 809.9L860.3 813.5L857.4 821.5Z" fill="#151fd7" stroke="#151fd7" stroke-width=".8"/><path d="M849.2 809.9L852.2 802.1L863.1 805.4L860.3 813.5Z" fill="#151ac8" stroke="#151ac8" stroke-width=".8"/><path d="M852.2 802.1L855.3 794.2L866.0 797.4L863.1 805.4Z" fill="#1515b3" stroke="#1515b3" stroke-width=".8"/><path d="M855.3 794.2L861.7 789.5L872.4 792.6L866.0 797.4Z" fill="#48653c" stroke="#48653c" stroke-width=".8"/><path d="M861.7 789.5L901.3 760.2L911.9 763.0L872.4 792.6Z" fill="#6d995a" stroke="#6d995a" stroke-width=".8"/><path d="M843.0 861.7L845.8 853.7L857.7 858.1L854.9 866.3Z" fill="#1583b3" stroke="#1583b3" stroke-width=".8"/><path d="M845.8 853.7L848.7 845.7L860.4 849.8L857.7 858.1Z" fill="#1572c7" stroke="#1572c7" stroke-width=".8"/><path d="M848.7 845.7L851.6 837.6L863.1 841.6L860.4 849.8Z" fill="#1557d6" stroke="#1557d6" stroke-width=".8"/><path d="M851.6 837.6L854.5 829.6L865.9 833.3L863.1 841.6Z" fill="#1537de" stroke="#1537de" stroke-width=".8"/><path d="M854.5 829.6L857.4 821.5L868.6 825.1L865.9 833.3Z" fill="#1523de" stroke="#1523de" stroke-width=".8"/><path d="M857.4 821.5L860.3 813.5L871.4 816.8L868.6 825.1Z" fill="#151ed6" stroke="#151ed6" stroke-width=".8"/><path d="M860.3 813.5L863.1 805.4L874.1 808.6L871.4 816.8Z" fill="#1519c7" stroke="#1519c7" stroke-width=".8"/><path d="M863.1 805.4L866.0 797.4L876.8 800.3L874.1 808.6Z" fill="#1515b3" stroke="#1515b3" stroke-width=".8"/><path d="M866.0 797.4L872.4 792.6L883.2 795.5L876.8 800.3Z" fill="#4c673e" stroke="#4c673e" stroke-width=".8"/><path d="M872.4 792.6L911.9 763.0L922.6 765.7L883.2 795.5Z" fill="#739c5f" stroke="#739c5f" stroke-width=".8"/><path d="M854.9 866.3L857.7 858.1L869.6 862.2L867.0 870.7Z" fill="#1580b3" stroke="#1580b3" stroke-width=".8"/><path d="M857.7 858.1L860.4 849.8L872.2 853.8L869.6 862.2Z" fill="#156fc7" stroke="#156fc7" stroke-width=".8"/><path d="M860.4 849.8L863.1 841.6L874.8 845.3L872.2 853.8Z" fill="#1555d6" stroke="#1555d6" stroke-width=".8"/><path d="M863.1 841.6L865.9 833.3L877.3 836.8L874.8 845.3Z" fill="#1535dd" stroke="#1535dd" stroke-width=".8"/><path d="M865.9 833.3L868.6 825.1L879.9 828.4L877.3 836.8Z" fill="#1522dd" stroke="#1522dd" stroke-width=".8"/><path d="M868.6 825.1L871.4 816.8L882.5 819.9L879.9 828.4Z" fill="#151dd6" stroke="#151dd6" stroke-width=".8"/><path d="M871.4 816.8L874.1 808.6L885.1 811.5L882.5 819.9Z" fill="#1518c7" stroke="#1518c7" stroke-width=".8"/><path d="M874.1 808.6L876.8 800.3L887.7 803.0L885.1 811.5Z" fill="#1515b3" stroke="#1515b3" stroke-width=".8"/><path d="M876.8 800.3L883.2 795.5L894.1 798.1L887.7 803.0Z" fill="#516942" stroke="#516942" stroke-width=".8"/><path d="M883.2 795.5L922.6 765.7L933.3 768.1L894.1 798.1Z" fill="#7a9f63" stroke="#7a9f63" stroke-width=".8"/><path d="M867.0 870.7L869.6 862.2L881.6 866.1L879.1 874.7Z" fill="#157cb2" stroke="#157cb2" stroke-width=".8"/><path d="M869.6 862.2L872.2 853.8L884.0 857.4L881.6 866.1Z" fill="#156cc6" stroke="#156cc6" stroke-width=".8"/><path d="M872.2 853.8L874.8 845.3L886.4 848.8L884.0 857.4Z" fill="#1553d5" stroke="#1553d5" stroke-width=".8"/><path d="M874.8 845.3L877.3 836.8L888.9 840.1L886.4 848.8Z" fill="#1534dd" stroke="#1534dd" stroke-width=".8"/><path d="M877.3 836.8L879.9 828.4L891.3 831.5L888.9 840.1Z" fill="#1521dd" stroke="#1521dd" stroke-width=".8"/><path d="M879.9 828.4L882.5 819.9L893.8 822.8L891.3 831.5Z" fill="#151cd5" stroke="#151cd5" stroke-width=".8"/><path d="M882.5 819.9L885.1 811.5L896.2 814.2L893.8 822.8Z" fill="#1518c6" stroke="#1518c6" stroke-width=".8"/><path d="M885.1 811.5L887.7 803.0L898.7 805.5L896.2 814.2Z" fill="#1515b2" stroke="#1515b2" stroke-width=".8"/><path d="M887.7 803.0L894.1 798.1L905.0 800.6L898.7 805.5Z" fill="#566c46" stroke="#566c46" stroke-width=".8"/><path d="M894.1 798.1L933.3 768.1L944.0 770.3L905.0 800.6Z" fill="#83a36a" stroke="#83a36a" stroke-width=".8"/><path d="M879.1 874.7L881.6 866.1L893.6 869.7L891.3 878.6Z" fill="#1579b2" stroke="#1579b2" stroke-width=".8"/><path d="M881.6 866.1L884.0 857.4L895.9 860.9L893.6 869.7Z" fill="#1569c6" stroke="#1569c6" stroke-width=".8"/><path d="M884.0 857.4L886.4 848.8L898.2 852.0L895.9 860.9Z" fill="#1551d4" stroke="#1551d4" stroke-width=".8"/><path d="M886.4 848.8L888.9 840.1L900.5 843.2L898.2 852.0Z" fill="#1532dc" stroke="#1532dc" stroke-width=".8"/><path d="M888.9 840.1L891.3 831.5L902.8 834.3L900.5 843.2Z" fill="#1520dc" stroke="#1520dc" stroke-width=".8"/><path d="M891.3 831.5L893.8 822.8L905.1 825.5L902.8 834.3Z" fill="#151bd4" stroke="#151bd4" stroke-width=".8"/><path d="M893.8 822.8L896.2 814.2L907.3 816.6L905.1 825.5Z" fill="#1517c6" stroke="#1517c6" stroke-width=".8"/><path d="M896.2 814.2L898.7 805.5L909.6 807.8L907.3 816.6Z" fill="#1515b1" stroke="#1515b1" stroke-width=".8"/><path d="M898.7 805.5L905.0 800.6L916.0 802.8L909.6 807.8Z" fill="#5c6e4a" stroke="#5c6e4a" stroke-width=".8"/><path d="M905.0 800.6L944.0 770.3L954.8 772.3L916.0 802.8Z" fill="#8ca771" stroke="#8ca771" stroke-width=".8"/><path d="M891.3 878.6L893.6 869.7L905.8 873.1L903.6 882.2Z" fill="#1576b1" stroke="#1576b1" stroke-width=".8"/><path d="M893.6 869.7L895.9 860.9L907.9 864.1L905.8 873.1Z" fill="#1566c5" stroke="#1566c5" stroke-width=".8"/><path d="M895.9 860.9L898.2 852.0L910.0 855.0L907.9 864.1Z" fill="#154ed4" stroke="#154ed4" stroke-width=".8"/><path d="M898.2 852.0L900.5 843.2L912.1 846.0L910.0 855.0Z" fill="#1531dc" stroke="#1531dc" stroke-width=".8"/><path d="M900.5 843.2L902.8 834.3L914.3 836.9L912.1 846.0Z" fill="#151fdc" stroke="#151fdc" stroke-width=".8"/><path d="M902.8 834.3L905.1 825.5L916.4 827.9L914.3 836.9Z" fill="#151bd4" stroke="#151bd4" stroke-width=".8"/><path d="M905.1 825.5L907.3 816.6L918.5 818.8L916.4 827.9Z" fill="#1517c5" stroke="#1517c5" stroke-width=".8"/><path d="M907.3 816.6L909.6 807.8L920.7 809.8L918.5 818.8Z" fill="#1515b0" stroke="#1515b0" stroke-width=".8"/><path d="M909.6 807.8L916.0 802.8L927.0 804.8L920.7 809.8Z" fill="#62714f" stroke="#62714f" stroke-width=".8"/><path d="M916.0 802.8L954.8 772.3L965.6 774.1L927.0 804.8Z" fill="#95ac77" stroke="#95ac77" stroke-width=".8"/><path d="M903.6 882.2L905.8 873.1L918.0 876.3L916.0 885.5Z" fill="#1573b1" stroke="#1573b1" stroke-width=".8"/><path d="M905.8 873.1L907.9 864.1L919.9 867.0L918.0 876.3Z" fill="#1564c5" stroke="#1564c5" stroke-width=".8"/><path d="M907.9 864.1L910.0 855.0L921.9 857.8L919.9 867.0Z" fill="#154cd3" stroke="#154cd3" stroke-width=".8"/><path d="M910.0 855.0L912.1 846.0L923.9 848.5L921.9 857.8Z" fill="#152fdb" stroke="#152fdb" stroke-width=".8"/><path d="M912.1 846.0L914.3 836.9L925.8 839.3L923.9 848.5Z" fill="#151edb" stroke="#151edb" stroke-width=".8"/><path d="M914.3 836.9L916.4 827.9L927.8 830.1L925.8 839.3Z" fill="#151ad3" stroke="#151ad3" stroke-width=".8"/><path d="M916.4 827.9L918.5 818.8L929.8 820.8L927.8 830.1Z" fill="#1516c5" stroke="#1516c5" stroke-width=".8"/><path d="M918.5 818.8L920.7 809.8L931.7 811.6L929.8 820.8Z" fill="#1515af" stroke="#1515af" stroke-width=".8"/><path d="M920.7 809.8L927.0 804.8L938.0 806.5L931.7 811.6Z" fill="#687453" stroke="#687453" stroke-width=".8"/><path d="M927.0 804.8L965.6 774.1L976.5 775.6L938.0 806.5Z" fill="#9eb07e" stroke="#9eb07e" stroke-width=".8"/><path d="M916.0 885.5L918.0 876.3L930.2 879.2L928.4 888.6Z" fill="#1570b0" stroke="#1570b0" stroke-width=".8"/><path d="M918.0 876.3L919.9 867.0L932.0 869.7L930.2 879.2Z" fill="#1561c4" stroke="#1561c4" stroke-width=".8"/><path d="M919.9 867.0L921.9 857.8L933.8 860.3L932.0 869.7Z" fill="#154ad3" stroke="#154ad3" stroke-width=".8"/><path d="M921.9 857.8L923.9 848.5L935.6 850.9L933.8 860.3Z" fill="#152edb" stroke="#152edb" stroke-width=".8"/><path d="M923.9 848.5L925.8 839.3L937.4 841.4L935.6 850.9Z" fill="#151ddb" stroke="#151ddb" stroke-width=".8"/><path d="M925.8 839.3L927.8 830.1L939.2 832.0L937.4 841.4Z" fill="#1519d3" stroke="#1519d3" stroke-width=".8"/><path d="M927.8 830.1L929.8 820.8L941.0 822.6L939.2 832.0Z" fill="#1515c4" stroke="#1515c4" stroke-width=".8"/><path d="M929.8 820.8L931.7 811.6L942.8 813.1L941.0 822.6Z" fill="#1515ae" stroke="#1515ae" stroke-width=".8"/><path d="M931.7 811.6L938.0 806.5L949.1 808.1L942.8 813.1Z" fill="#6e7758" stroke="#6e7758" stroke-width=".8"/><path d="M938.0 806.5L976.5 775.6L987.4 777.0L949.1 808.1Z" fill="#a7b485" stroke="#a7b485" stroke-width=".8"/><path d="M928.4 888.6L930.2 879.2L942.5 881.8L940.9 891.4Z" fill="#156db0" stroke="#156db0" stroke-width=".8"/><path d="M930.2 879.2L932.0 869.7L944.2 872.2L942.5 881.8Z" fill="#155ec4" stroke="#155ec4" stroke-width=".8"/><path d="M932.0 869.7L933.8 860.3L945.8 862.6L944.2 872.2Z" fill="#1548d2" stroke="#1548d2" stroke-width=".8"/><path d="M933.8 860.3L935.6 850.9L947.4 852.9L945.8 862.6Z" fill="#152dda" stroke="#152dda" stroke-width=".8"/><path d="M935.6 850.9L937.4 841.4L949.1 843.3L947.4 852.9Z" fill="#151cda" stroke="#151cda" stroke-width=".8"/><path d="M937.4 841.4L939.2 832.0L950.7 833.7L949.1 843.3Z" fill="#1518d2" stroke="#1518d2" stroke-width=".8"/><path d="M939.2 832.0L941.0 822.6L952.3 824.1L950.7 833.7Z" fill="#1515c4" stroke="#1515c4" stroke-width=".8"/><path d="M941.0 822.6L942.8 813.1L954.0 814.5L952.3 824.1Z" fill="#1515ad" stroke="#1515ad" stroke-width=".8"/><path d="M942.8 813.1L949.1 808.1L960.2 809.4L954.0 814.5Z" fill="#747a5c" stroke="#747a5c" stroke-width=".8"/><path d="M949.1 808.1L987.4 777.0L998.3 778.1L960.2 809.4Z" fill="#b0b98b" stroke="#b0b98b" stroke-width=".8"/><path d="M940.9 891.4L942.5 881.8L954.9 884.2L953.5 894.0Z" fill="#156ab0" stroke="#156ab0" stroke-width=".8"/><path d="M942.5 881.8L944.2 872.2L956.4 874.4L954.9 884.2Z" fill="#155bc3" stroke="#155bc3" stroke-width=".8"/><path d="M944.2 872.2L945.8 862.6L957.8 864.6L956.4 874.4Z" fill="#1546d2" stroke="#1546d2" stroke-width=".8"/><path d="M945.8 862.6L947.4 852.9L959.3 854.8L957.8 864.6Z" fill="#152bd9" stroke="#152bd9" stroke-width=".8"/><path d="M947.4 852.9L949.1 843.3L960.8 845.0L959.3 854.8Z" fill="#151bd9" stroke="#151bd9" stroke-width=".8"/><path d="M949.1 843.3L950.7 833.7L962.2 835.2L960.8 845.0Z" fill="#1518d2" stroke="#1518d2" stroke-width=".8"/><path d="M950.7 833.7L952.3 824.1L963.7 825.4L962.2 835.2Z" fill="#1515c3" stroke="#1515c3" stroke-width=".8"/><path d="M952.3 824.1L954.0 814.5L965.1 815.6L963.7 825.4Z" fill="#1515ac" stroke="#1515ac" stroke-width=".8"/><path d="M954.0 814.5L960.2 809.4L971.3 810.5L965.1 815.6Z" fill="#7b7d61" stroke="#7b7d61" stroke-width=".8"/><path d="M960.2 809.4L998.3 778.1L1009.2 779.1L971.3 810.5Z" fill="#bbbe92" stroke="#bbbe92" stroke-width=".8"/><path d="M953.5 894.0L954.9 884.2L967.3 886.3L966.1 896.3Z" fill="#1567af" stroke="#1567af" stroke-width=".8"/><path d="M954.9 884.2L956.4 874.4L968.6 876.3L967.3 886.3Z" fill="#1559c3" stroke="#1559c3" stroke-width=".8"/><path d="M956.4 874.4L957.8 864.6L969.9 866.4L968.6 876.3Z" fill="#1544d1" stroke="#1544d1" stroke-width=".8"/><path d="M957.8 864.6L959.3 854.8L971.2 856.4L969.9 866.4Z" fill="#152ad9" stroke="#152ad9" stroke-width=".8"/><path d="M959.3 854.8L960.8 845.0L972.5 846.4L971.2 856.4Z" fill="#151ad9" stroke="#151ad9" stroke-width=".8"/><path d="M960.8 845.0L962.2 835.2L973.7 836.4L972.5 846.4Z" fill="#1517d1" stroke="#1517d1" stroke-width=".8"/><path d="M962.2 835.2L963.7 825.4L975.0 826.4L973.7 836.4Z" fill="#1515c2" stroke="#1515c2" stroke-width=".8"/><path d="M963.7 825.4L965.1 815.6L976.3 816.5L975.0 826.4Z" fill="#1515ac" stroke="#1515ac" stroke-width=".8"/><path d="M965.1 815.6L971.3 810.5L982.4 811.3L976.3 816.5Z" fill="#858267" stroke="#858267" stroke-width=".8"/><path d="M971.3 810.5L1009.2 779.1L1020.2 779.9L982.4 811.3Z" fill="#c9c59c" stroke="#c9c59c" stroke-width=".8"/><path d="M966.1 896.3L967.3 886.3L979.8 888.2L978.7 898.3Z" fill="#1564af" stroke="#1564af" stroke-width=".8"/><path d="M967.3 886.3L968.6 876.3L980.9 878.0L979.8 888.2Z" fill="#1556c3" stroke="#1556c3" stroke-width=".8"/><path d="M968.6 876.3L969.9 866.4L982.0 867.9L980.9 878.0Z" fill="#1542d1" stroke="#1542d1" stroke-width=".8"/><path d="M969.9 866.4L971.2 856.4L983.1 857.7L982.0 867.9Z" fill="#1529d8" stroke="#1529d8" stroke-width=".8"/><path d="M971.2 856.4L972.5 846.4L984.2 847.6L983.1 857.7Z" fill="#151ad8" stroke="#151ad8" stroke-width=".8"/><path d="M972.5 846.4L973.7 836.4L985.3 837.4L984.2 847.6Z" fill="#1516d1" stroke="#1516d1" stroke-width=".8"/><path d="M973.7 836.4L975.0 826.4L986.4 827.3L985.3 837.4Z" fill="#1515c1" stroke="#1515c1" stroke-width=".8"/><path d="M975.0 826.4L976.3 816.5L987.5 817.1L986.4 827.3Z" fill="#1515ab" stroke="#1515ab" stroke-width=".8"/><path d="M976.3 816.5L982.4 811.3L993.6 812.0L987.5 817.1Z" fill="#878166" stroke="#878166" stroke-width=".8"/><path d="M982.4 811.3L1020.2 779.9L1031.2 780.4L993.6 812.0Z" fill="#ccc39a" stroke="#ccc39a" stroke-width=".8"/><path d="M978.7 898.3L979.8 888.2L992.3 889.8L991.4 900.1Z" fill="#1563af" stroke="#1563af" stroke-width=".8"/><path d="M979.8 888.2L980.9 878.0L993.2 879.5L992.3 889.8Z" fill="#1555c2" stroke="#1555c2" stroke-width=".8"/><path d="M980.9 878.0L982.0 867.9L994.1 869.2L993.2 879.5Z" fill="#1541d1" stroke="#1541d1" stroke-width=".8"/><path d="M982.0 867.9L983.1 857.7L995.0 858.8L994.1 869.2Z" fill="#1528d8" stroke="#1528d8" stroke-width=".8"/><path d="M983.1 857.7L984.2 847.6L996.0 848.5L995.0 858.8Z" fill="#151ad8" stroke="#151ad8" stroke-width=".8"/><path d="M984.2 847.6L985.3 837.4L996.9 838.2L996.0 848.5Z" fill="#1516d1" stroke="#1516d1" stroke-width=".8"/><path d="M985.3 837.4L986.4 827.3L997.8 827.9L996.9 838.2Z" fill="#1515c1" stroke="#1515c1" stroke-width=".8"/><path d="M986.4 827.3L987.5 817.1L998.7 817.5L997.8 827.9Z" fill="#1515ab" stroke="#1515ab" stroke-width=".8"/><path d="M987.5 817.1L993.6 812.0L1004.8 812.4L998.7 817.5Z" fill="#877e63" stroke="#877e63" stroke-width=".8"/><path d="M993.6 812.0L1031.2 780.4L1042.1 780.8L1004.8 812.4Z" fill="#cdbf96" stroke="#cdbf96" stroke-width=".8"/><path d="M991.4 900.1L992.3 889.8L1004.8 891.2L1004.1 901.6Z" fill="#1561ae" stroke="#1561ae" stroke-width=".8"/><path d="M992.3 889.8L993.2 879.5L1005.6 880.7L1004.8 891.2Z" fill="#1554c2" stroke="#1554c2" stroke-width=".8"/><path d="M993.2 879.5L994.1 869.2L1006.3 870.2L1005.6 880.7Z" fill="#1540d0" stroke="#1540d0" stroke-width=".8"/><path d="M994.1 869.2L995.0 858.8L1007.0 859.7L1006.3 870.2Z" fill="#1528d8" stroke="#1528d8" stroke-width=".8"/><path d="M995.0 858.8L996.0 848.5L1007.7 849.2L1007.0 859.7Z" fill="#1519d8" stroke="#1519d8" stroke-width=".8"/><path d="M996.0 848.5L996.9 838.2L1008.5 838.7L1007.7 849.2Z" fill="#1516d0" stroke="#1516d0" stroke-width=".8"/><path d="M996.9 838.2L997.8 827.9L1009.2 828.2L1008.5 838.7Z" fill="#1515c0" stroke="#1515c0" stroke-width=".8"/><path d="M997.8 827.9L998.7 817.5L1009.9 817.7L1009.2 828.2Z" fill="#1515aa" stroke="#1515aa" stroke-width=".8"/><path d="M998.7 817.5L1004.8 812.4L1015.9 812.6L1009.9 817.7Z" fill="#887b60" stroke="#887b60" stroke-width=".8"/><path d="M1004.8 812.4L1042.1 780.8L1053.1 780.9L1015.9 812.6Z" fill="#cdbb92" stroke="#cdbb92" stroke-width=".8"/><path d="M1004.1 901.6L1004.8 891.2L1017.4 892.3L1016.9 902.9Z" fill="#1560ae" stroke="#1560ae" stroke-width=".8"/><path d="M1004.8 891.2L1005.6 880.7L1017.9 881.6L1017.4 892.3Z" fill="#1553c2" stroke="#1553c2" stroke-width=".8"/><path d="M1005.6 880.7L1006.3 870.2L1018.5 871.0L1017.9 881.6Z" fill="#1540d0" stroke="#1540d0" stroke-width=".8"/><path d="M1006.3 870.2L1007.0 859.7L1019.0 860.3L1018.5 871.0Z" fill="#1528d8" stroke="#1528d8" stroke-width=".8"/><path d="M1007.0 859.7L1007.7 849.2L1019.5 849.7L1019.0 860.3Z" fill="#1519d8" stroke="#1519d8" stroke-width=".8"/><path d="M1007.7 849.2L1008.5 838.7L1020.0 839.0L1019.5 849.7Z" fill="#1516d0" stroke="#1516d0" stroke-width=".8"/><path d="M1008.5 838.7L1009.2 828.2L1020.6 828.4L1020.0 839.0Z" fill="#1515c0" stroke="#1515c0" stroke-width=".8"/><path d="M1009.2 828.2L1009.9 817.7L1021.1 817.7L1020.6 828.4Z" fill="#1515aa" stroke="#1515aa" stroke-width=".8"/><path d="M1009.9 817.7L1015.9 812.6L1027.1 812.6L1021.1 817.7Z" fill="#88785e" stroke="#88785e" stroke-width=".8"/><path d="M1015.9 812.6L1053.1 780.9L1064.1 780.9L1027.1 812.6Z" fill="#ceb68e" stroke="#ceb68e" stroke-width=".8"/><path d="M1016.9 902.9L1017.4 892.3L1030.0 893.1L1029.6 903.9Z" fill="#155fae" stroke="#155fae" stroke-width=".8"/><path d="M1017.4 892.3L1017.9 881.6L1030.3 882.3L1030.0 893.1Z" fill="#1552c2" stroke="#1552c2" stroke-width=".8"/><path d="M1017.9 881.6L1018.5 871.0L1030.6 871.5L1030.3 882.3Z" fill="#153fd0" stroke="#153fd0" stroke-width=".8"/><path d="M1018.5 871.0L1019.0 860.3L1031.0 860.7L1030.6 871.5Z" fill="#1528d7" stroke="#1528d7" stroke-width=".8"/><path d="M1019.0 860.3L1019.5 849.7L1031.3 849.9L1031.0 860.7Z" fill="#1519d7" stroke="#1519d7" stroke-width=".8"/><path d="M1019.5 849.7L1020.0 839.0L1031.6 839.1L1031.3 849.9Z" fill="#1516d0" stroke="#1516d0" stroke-width=".8"/><path d="M1020.0 839.0L1020.6 828.4L1032.0 828.3L1031.6 839.1Z" fill="#1515c0" stroke="#1515c0" stroke-width=".8"/><path d="M1020.6 828.4L1021.1 817.7L1032.3 817.5L1032.0 828.3Z" fill="#1515a9" stroke="#1515a9" stroke-width=".8"/><path d="M1021.1 817.7L1027.1 812.6L1038.3 812.3L1032.3 817.5Z" fill="#88765b" stroke="#88765b" stroke-width=".8"/><path d="M1027.1 812.6L1064.1 780.9L1075.0 780.7L1038.3 812.3Z" fill="#cfb28a" stroke="#cfb28a" stroke-width=".8"/><path d="M1029.6 903.9L1030.0 893.1L1042.6 893.7L1042.4 904.6Z" fill="#155dae" stroke="#155dae" stroke-width=".8"/><path d="M1030.0 893.1L1030.3 882.3L1042.7 882.7L1042.6 893.7Z" fill="#1551c1" stroke="#1551c1" stroke-width=".8"/><path d="M1030.3 882.3L1030.6 871.5L1042.8 871.8L1042.7 882.7Z" fill="#153ed0" stroke="#153ed0" stroke-width=".8"/><path d="M1030.6 871.5L1031.0 860.7L1043.0 860.8L1042.8 871.8Z" fill="#1527d7" stroke="#1527d7" stroke-width=".8"/><path d="M1031.0 860.7L1031.3 849.9L1043.1 849.9L1043.0 860.8Z" fill="#1519d7" stroke="#1519d7" stroke-width=".8"/><path d="M1031.3 849.9L1031.6 839.1L1043.2 838.9L1043.1 849.9Z" fill="#1516d0" stroke="#1516d0" stroke-width=".8"/><path d="M1031.6 839.1L1032.0 828.3L1043.4 828.0L1043.2 838.9Z" fill="#1515bf" stroke="#1515bf" stroke-width=".8"/><path d="M1032.0 828.3L1032.3 817.5L1043.5 817.0L1043.4 828.0Z" fill="#1515a9" stroke="#1515a9" stroke-width=".8"/><path d="M1032.3 817.5L1038.3 812.3L1049.5 811.9L1043.5 817.0Z" fill="#897358" stroke="#897358" stroke-width=".8"/><path d="M1038.3 812.3L1075.0 780.7L1086.0 780.2L1049.5 811.9Z" fill="#d0ae85" stroke="#d0ae85" stroke-width=".8"/><path d="M1042.4 904.6L1042.6 893.7L1055.2 894.0L1055.2 905.1Z" fill="#155cad" stroke="#155cad" stroke-width=".8"/><path d="M1042.6 893.7L1042.7 882.7L1055.1 882.9L1055.2 894.0Z" fill="#154fc1" stroke="#154fc1" stroke-width=".8"/><path d="M1042.7 882.7L1042.8 871.8L1055.0 871.8L1055.1 882.9Z" fill="#153dcf" stroke="#153dcf" stroke-width=".8"/><path d="M1042.8 871.8L1043.0 860.8L1055.0 860.7L1055.0 871.8Z" fill="#1527d7" stroke="#1527d7" stroke-width=".8"/><path d="M1043.0 860.8L1043.1 849.9L1054.9 849.6L1055.0 860.7Z" fill="#1519d7" stroke="#1519d7" stroke-width=".8"/><path d="M1043.1 849.9L1043.2 838.9L1054.8 838.5L1054.9 849.6Z" fill="#1516cf" stroke="#1516cf" stroke-width=".8"/><path d="M1043.2 838.9L1043.4 828.0L1054.8 827.5L1054.8 838.5Z" fill="#1515bf" stroke="#1515bf" stroke-width=".8"/><path d="M1043.4 828.0L1043.5 817.0L1054.7 816.4L1054.8 827.5Z" fill="#1515a9" stroke="#1515a9" stroke-width=".8"/><path d="M1043.5 817.0L1049.5 811.9L1060.6 811.2L1054.7 816.4Z" fill="#876e55" stroke="#876e55" stroke-width=".8"/><path d="M1049.5 811.9L1086.0 780.2L1097.0 779.6L1060.6 811.2Z" fill="#cda680" stroke="#cda680" stroke-width=".8"/><path d="M1055.2 905.1L1055.2 894.0L1067.8 894.0L1068.0 905.3Z" fill="#155aad" stroke="#155aad" stroke-width=".8"/><path d="M1055.2 894.0L1055.1 882.9L1067.5 882.8L1067.8 894.0Z" fill="#154ec1" stroke="#154ec1" stroke-width=".8"/><path d="M1055.1 882.9L1055.0 871.8L1067.2 871.6L1067.5 882.8Z" fill="#153dcf" stroke="#153dcf" stroke-width=".8"/><path d="M1055.0 871.8L1055.0 860.7L1067.0 860.4L1067.2 871.6Z" fill="#1527d6" stroke="#1527d6" stroke-width=".8"/><path d="M1055.0 860.7L1054.9 849.6L1066.7 849.2L1067.0 860.4Z" fill="#1519d6" stroke="#1519d6" stroke-width=".8"/><path d="M1054.9 849.6L1054.8 838.5L1066.4 837.9L1066.7 849.2Z" fill="#1516cf" stroke="#1516cf" stroke-width=".8"/><path d="M1054.8 838.5L1054.8 827.5L1066.2 826.7L1066.4 837.9Z" fill="#1515be" stroke="#1515be" stroke-width=".8"/><path d="M1054.8 827.5L1054.7 816.4L1065.9 815.5L1066.2 826.7Z" fill="#1515a8" stroke="#1515a8" stroke-width=".8"/><path d="M1054.7 816.4L1060.6 811.2L1071.8 810.3L1065.9 815.5Z" fill="#856852" stroke="#856852" stroke-width=".8"/><path d="M1060.6 811.2L1097.0 779.6L1107.9 778.7L1071.8 810.3Z" fill="#c99e7c" stroke="#c99e7c" stroke-width=".8"/><path d="M1068.0 905.3L1067.8 894.0L1080.4 893.8L1080.8 905.2Z" fill="#1559ad" stroke="#1559ad" stroke-width=".8"/><path d="M1067.8 894.0L1067.5 882.8L1079.9 882.5L1080.4 893.8Z" fill="#154dc1" stroke="#154dc1" stroke-width=".8"/><path d="M1067.5 882.8L1067.2 871.6L1079.4 871.1L1079.9 882.5Z" fill="#153ccf" stroke="#153ccf" stroke-width=".8"/><path d="M1067.2 871.6L1067.0 860.4L1078.9 859.8L1079.4 871.1Z" fill="#1527d6" stroke="#1527d6" stroke-width=".8"/><path d="M1067.0 860.4L1066.7 849.2L1078.5 848.4L1078.9 859.8Z" fill="#1519d6" stroke="#1519d6" stroke-width=".8"/><path d="M1066.7 849.2L1066.4 837.9L1078.0 837.1L1078.5 848.4Z" fill="#1515cf" stroke="#1515cf" stroke-width=".8"/><path d="M1066.4 837.9L1066.2 826.7L1077.5 825.8L1078.0 837.1Z" fill="#1515be" stroke="#1515be" stroke-width=".8"/><path d="M1066.2 826.7L1065.9 815.5L1077.0 814.4L1077.5 825.8Z" fill="#1515a8" stroke="#1515a8" stroke-width=".8"/><path d="M1065.9 815.5L1071.8 810.3L1082.9 809.3L1077.0 814.4Z" fill="#82634f" stroke="#82634f" stroke-width=".8"/><path d="M1071.8 810.3L1107.9 778.7L1118.8 777.7L1082.9 809.3Z" fill="#c59677" stroke="#c59677" stroke-width=".8"/><path d="M1080.8 905.2L1080.4 893.8L1093.0 893.4L1093.7 904.8Z" fill="#1557ad" stroke="#1557ad" stroke-width=".8"/><path d="M1080.4 893.8L1079.9 882.5L1092.3 881.9L1093.0 893.4Z" fill="#154cc0" stroke="#154cc0" stroke-width=".8"/><path d="M1079.9 882.5L1079.4 871.1L1091.6 870.4L1092.3 881.9Z" fill="#153bce" stroke="#153bce" stroke-width=".8"/><path d="M1079.4 871.1L1078.9 859.8L1090.9 859.0L1091.6 870.4Z" fill="#1526d6" stroke="#1526d6" stroke-width=".8"/><path d="M1078.9 859.8L1078.5 848.4L1090.2 847.5L1090.9 859.0Z" fill="#1519d6" stroke="#1519d6" stroke-width=".8"/><path d="M1078.5 848.4L1078.0 837.1L1089.5 836.0L1090.2 847.5Z" fill="#1515ce" stroke="#1515ce" stroke-width=".8"/><path d="M1078.0 837.1L1077.5 825.8L1088.9 824.6L1089.5 836.0Z" fill="#1515be" stroke="#1515be" stroke-width=".8"/><path d="M1077.5 825.8L1077.0 814.4L1088.2 813.1L1088.9 824.6Z" fill="#1515a7" stroke="#1515a7" stroke-width=".8"/><path d="M1077.0 814.4L1082.9 809.3L1094.0 808.0L1088.2 813.1Z" fill="#805d4b" stroke="#805d4b" stroke-width=".8"/><path d="M1082.9 809.3L1118.8 777.7L1129.7 776.4L1094.0 808.0Z" fill="#c28d72" stroke="#c28d72" stroke-width=".8"/><path d="M1093.7 904.8L1093.0 893.4L1105.6 892.7L1106.4 904.2Z" fill="#1556ad" stroke="#1556ad" stroke-width=".8"/><path d="M1093.0 893.4L1092.3 881.9L1104.7 881.1L1105.6 892.7Z" fill="#154bc0" stroke="#154bc0" stroke-width=".8"/><path d="M1092.3 881.9L1091.6 870.4L1103.8 869.5L1104.7 881.1Z" fill="#153ace" stroke="#153ace" stroke-width=".8"/><path d="M1091.6 870.4L1090.9 859.0L1102.9 857.9L1103.8 869.5Z" fill="#1526d6" stroke="#1526d6" stroke-width=".8"/><path d="M1090.9 859.0L1090.2 847.5L1102.0 846.3L1102.9 857.9Z" fill="#1519d6" stroke="#1519d6" stroke-width=".8"/><path d="M1090.2 847.5L1089.5 836.0L1101.1 834.8L1102.0 846.3Z" fill="#1515ce" stroke="#1515ce" stroke-width=".8"/><path d="M1089.5 836.0L1088.9 824.6L1100.2 823.2L1101.1 834.8Z" fill="#1515bd" stroke="#1515bd" stroke-width=".8"/><path d="M1088.9 824.6L1088.2 813.1L1099.3 811.6L1100.2 823.2Z" fill="#1515a7" stroke="#1515a7" stroke-width=".8"/><path d="M1088.2 813.1L1094.0 808.0L1105.1 806.5L1099.3 811.6Z" fill="#7d5848" stroke="#7d5848" stroke-width=".8"/><path d="M1094.0 808.0L1129.7 776.4L1140.6 775.0L1105.1 806.5Z" fill="#be856e" stroke="#be856e" stroke-width=".8"/><path d="M1106.4 904.2L1105.6 892.7L1118.1 891.7L1119.2 903.4Z" fill="#1554ac" stroke="#1554ac" stroke-width=".8"/><path d="M1105.6 892.7L1104.7 881.1L1117.0 880.0L1118.1 891.7Z" fill="#154ac0" stroke="#154ac0" stroke-width=".8"/><path d="M1104.7 881.1L1103.8 869.5L1115.9 868.3L1117.0 880.0Z" fill="#153ace" stroke="#153ace" stroke-width=".8"/><path d="M1103.8 869.5L1102.9 857.9L1114.8 856.6L1115.9 868.3Z" fill="#1526d5" stroke="#1526d5" stroke-width=".8"/><path d="M1102.9 857.9L1102.0 846.3L1113.7 844.9L1114.8 856.6Z" fill="#1519d5" stroke="#1519d5" stroke-width=".8"/><path d="M1102.0 846.3L1101.1 834.8L1112.6 833.3L1113.7 844.9Z" fill="#1515ce" stroke="#1515ce" stroke-width=".8"/><path d="M1101.1 834.8L1100.2 823.2L1111.5 821.6L1112.6 833.3Z" fill="#1515bd" stroke="#1515bd" stroke-width=".8"/><path d="M1100.2 823.2L1099.3 811.6L1110.4 809.9L1111.5 821.6Z" fill="#1515a7" stroke="#1515a7" stroke-width=".8"/><path d="M1099.3 811.6L1105.1 806.5L1116.1 804.8L1110.4 809.9Z" fill="#7a5345" stroke="#7a5345" stroke-width=".8"/><path d="M1105.1 806.5L1140.6 775.0L1151.5 773.3L1116.1 804.8Z" fill="#b97e68" stroke="#b97e68" stroke-width=".8"/><path d="M1119.2 903.4L1118.1 891.7L1130.7 890.4L1132.0 902.2Z" fill="#1553ac" stroke="#1553ac" stroke-width=".8"/><path d="M1118.1 891.7L1117.0 880.0L1129.3 878.7L1130.7 890.4Z" fill="#1549c0" stroke="#1549c0" stroke-width=".8"/><path d="M1117.0 880.0L1115.9 868.3L1128.0 866.9L1129.3 878.7Z" fill="#1539ce" stroke="#1539ce" stroke-width=".8"/><path d="M1115.9 868.3L1114.8 856.6L1126.7 855.1L1128.0 866.9Z" fill="#1525d5" stroke="#1525d5" stroke-width=".8"/><path d="M1114.8 856.6L1113.7 844.9L1125.4 843.3L1126.7 855.1Z" fill="#1519d5" stroke="#1519d5" stroke-width=".8"/><path d="M1113.7 844.9L1112.6 833.3L1124.1 831.6L1125.4 843.3Z" fill="#1515ce" stroke="#1515ce" stroke-width=".8"/><path d="M1112.6 833.3L1111.5 821.6L1122.7 819.8L1124.1 831.6Z" fill="#1515bd" stroke="#1515bd" stroke-width=".8"/><path d="M1111.5 821.6L1110.4 809.9L1121.4 808.0L1122.7 819.8Z" fill="#1515a6" stroke="#1515a6" stroke-width=".8"/><path d="M1110.4 809.9L1116.1 804.8L1127.1 802.9L1121.4 808.0Z" fill="#774f41" stroke="#774f41" stroke-width=".8"/><path d="M1116.1 804.8L1151.5 773.3L1162.3 771.5L1127.1 802.9Z" fill="#b47762" stroke="#b47762" stroke-width=".8"/><path d="M1132.0 902.2L1130.7 890.4L1143.2 888.9L1144.7 900.8Z" fill="#1552ac" stroke="#1552ac" stroke-width=".8"/><path d="M1130.7 890.4L1129.3 878.7L1141.6 877.1L1143.2 888.9Z" fill="#1547bf" stroke="#1547bf" stroke-width=".8"/><path d="M1129.3 878.7L1128.0 866.9L1140.1 865.2L1141.6 877.1Z" fill="#1538cd" stroke="#1538cd" stroke-width=".8"/><path d="M1128.0 866.9L1126.7 855.1L1138.6 853.4L1140.1 865.2Z" fill="#1525d5" stroke="#1525d5" stroke-width=".8"/><path d="M1126.7 855.1L1125.4 843.3L1137.0 841.5L1138.6 853.4Z" fill="#1519d5" stroke="#1519d5" stroke-width=".8"/><path d="M1125.4 843.3L1124.1 831.6L1135.5 829.6L1137.0 841.5Z" fill="#1515cd" stroke="#1515cd" stroke-width=".8"/><path d="M1124.1 831.6L1122.7 819.8L1134.0 817.8L1135.5 829.6Z" fill="#1515bc" stroke="#1515bc" stroke-width=".8"/><path d="M1122.7 819.8L1121.4 808.0L1132.4 805.9L1134.0 817.8Z" fill="#1515a6" stroke="#1515a6" stroke-width=".8"/><path d="M1121.4 808.0L1127.1 802.9L1138.1 800.8L1132.4 805.9Z" fill="#734a3d" stroke="#734a3d" stroke-width=".8"/><path d="M1127.1 802.9L1162.3 771.5L1173.1 769.4L1138.1 800.8Z" fill="#af705c" stroke="#af705c" stroke-width=".8"/><path d="M1144.7 900.8L1143.2 888.9L1155.7 887.2L1157.4 899.1Z" fill="#1550ac" stroke="#1550ac" stroke-width=".8"/><path d="M1143.2 888.9L1141.6 877.1L1153.9 875.3L1155.7 887.2Z" fill="#1546bf" stroke="#1546bf" stroke-width=".8"/><path d="M1141.6 877.1L1140.1 865.2L1152.2 863.3L1153.9 875.3Z" fill="#1537cd" stroke="#1537cd" stroke-width=".8"/><path d="M1140.1 865.2L1138.6 853.4L1150.4 851.4L1152.2 863.3Z" fill="#1525d5" stroke="#1525d5" stroke-width=".8"/><path d="M1138.6 853.4L1137.0 841.5L1148.7 839.4L1150.4 851.4Z" fill="#1519d5" stroke="#1519d5" stroke-width=".8"/><path d="M1137.0 841.5L1135.5 829.6L1146.9 827.5L1148.7 839.4Z" fill="#1515cd" stroke="#1515cd" stroke-width=".8"/><path d="M1135.5 829.6L1134.0 817.8L1145.2 815.5L1146.9 827.5Z" fill="#1515bc" stroke="#1515bc" stroke-width=".8"/><path d="M1134.0 817.8L1132.4 805.9L1143.4 803.6L1145.2 815.5Z" fill="#1515a6" stroke="#1515a6" stroke-width=".8"/><path d="M1132.4 805.9L1138.1 800.8L1149.1 798.5L1143.4 803.6Z" fill="#704639" stroke="#704639" stroke-width=".8"/><path d="M1138.1 800.8L1173.1 769.4L1183.8 767.1L1149.1 798.5Z" fill="#aa6956" stroke="#aa6956" stroke-width=".8"/><path d="M1157.4 899.1L1155.7 887.2L1168.1 885.2L1170.1 897.2Z" fill="#154fac" stroke="#154fac" stroke-width=".8"/><path d="M1155.7 887.2L1153.9 875.3L1166.1 873.2L1168.1 885.2Z" fill="#1545bf" stroke="#1545bf" stroke-width=".8"/><path d="M1153.9 875.3L1152.2 863.3L1164.2 861.2L1166.1 873.2Z" fill="#1537cd" stroke="#1537cd" stroke-width=".8"/><path d="M1152.2 863.3L1150.4 851.4L1162.2 849.2L1164.2 861.2Z" fill="#1525d4" stroke="#1525d4" stroke-width=".8"/><path d="M1150.4 851.4L1148.7 839.4L1160.2 837.1L1162.2 849.2Z" fill="#1519d4" stroke="#1519d4" stroke-width=".8"/><path d="M1148.7 839.4L1146.9 827.5L1158.3 825.1L1160.2 837.1Z" fill="#1515cd" stroke="#1515cd" stroke-width=".8"/><path d="M1146.9 827.5L1145.2 815.5L1156.3 813.1L1158.3 825.1Z" fill="#1515bb" stroke="#1515bb" stroke-width=".8"/><path d="M1145.2 815.5L1143.4 803.6L1154.3 801.1L1156.3 813.1Z" fill="#1515a5" stroke="#1515a5" stroke-width=".8"/><path d="M1143.4 803.6L1149.1 798.5L1160.0 796.0L1154.3 801.1Z" fill="#6d4135" stroke="#6d4135" stroke-width=".8"/><path d="M1149.1 798.5L1183.8 767.1L1194.5 764.6L1160.0 796.0Z" fill="#a46350" stroke="#a46350" stroke-width=".8"/><path d="M1170.1 897.2L1168.1 885.2L1180.5 882.9L1182.7 895.0Z" fill="#154dab" stroke="#154dab" stroke-width=".8"/><path d="M1168.1 885.2L1166.1 873.2L1178.3 870.9L1180.5 882.9Z" fill="#1544bf" stroke="#1544bf" stroke-width=".8"/><path d="M1166.1 873.2L1164.2 861.2L1176.1 858.8L1178.3 870.9Z" fill="#1536cd" stroke="#1536cd" stroke-width=".8"/><path d="M1164.2 861.2L1162.2 849.2L1174.0 846.7L1176.1 858.8Z" fill="#1524d4" stroke="#1524d4" stroke-width=".8"/><path d="M1162.2 849.2L1160.2 837.1L1171.8 834.7L1174.0 846.7Z" fill="#1519d4" stroke="#1519d4" stroke-width=".8"/><path d="M1160.2 837.1L1158.3 825.1L1169.6 822.6L1171.8 834.7Z" fill="#1515cd" stroke="#1515cd" stroke-width=".8"/><path d="M1158.3 825.1L1156.3 813.1L1167.4 810.5L1169.6 822.6Z" fill="#1515bb" stroke="#1515bb" stroke-width=".8"/><path d="M1156.3 813.1L1154.3 801.1L1165.2 798.4L1167.4 810.5Z" fill="#1515a5" stroke="#1515a5" stroke-width=".8"/><path d="M1154.3 801.1L1160.0 796.0L1170.8 793.3L1165.2 798.4Z" fill="#693d31" stroke="#693d31" stroke-width=".8"/><path d="M1160.0 796.0L1194.5 764.6L1205.1 761.9L1170.8 793.3Z" fill="#9f5c4a" stroke="#9f5c4a" stroke-width=".8"/><path d="M1182.7 895.0L1180.5 882.9L1192.9 880.4L1195.3 892.6Z" fill="#154cab" stroke="#154cab" stroke-width=".8"/><path d="M1180.5 882.9L1178.3 870.9L1190.5 868.3L1192.9 880.4Z" fill="#1543be" stroke="#1543be" stroke-width=".8"/><path d="M1178.3 870.9L1176.1 858.8L1188.1 856.2L1190.5 868.3Z" fill="#1535cc" stroke="#1535cc" stroke-width=".8"/><path d="M1176.1 858.8L1174.0 846.7L1185.7 844.1L1188.1 856.2Z" fill="#1524d4" stroke="#1524d4" stroke-width=".8"/><path d="M1174.0 846.7L1171.8 834.7L1183.3 831.9L1185.7 844.1Z" fill="#1519d4" stroke="#1519d4" stroke-width=".8"/><path d="M1171.8 834.7L1169.6 822.6L1180.9 819.8L1183.3 831.9Z" fill="#1515cc" stroke="#1515cc" stroke-width=".8"/><path d="M1169.6 822.6L1167.4 810.5L1178.5 807.7L1180.9 819.8Z" fill="#1515bb" stroke="#1515bb" stroke-width=".8"/><path d="M1167.4 810.5L1165.2 798.4L1176.1 795.6L1178.5 807.7Z" fill="#1515a5" stroke="#1515a5" stroke-width=".8"/><path d="M1165.2 798.4L1170.8 793.3L1181.6 790.4L1176.1 795.6Z" fill="#65382e" stroke="#65382e" stroke-width=".8"/><path d="M1170.8 793.3L1205.1 761.9L1215.7 759.0L1181.6 790.4Z" fill="#995646" stroke="#995646" stroke-width=".8"/></g>
<path d="M509 240L605 255M507 244L604 259M506 249L602 263M504 253L601 267M503 258L599 271M502 262L598 275M501 267L597 279M500 272L595 283M499 276L594 287M498 281L593 291M497 286L592 295M496 290L591 299M495 295L590 303M494 300L589 307M493 304L588 311M492 309L587 315M492 314L586 319M491 319L585 323M490 323L584 327M490 328L583 331M489 333L583 335M489 338L582 339M489 342L581 344M488 347L581 348M488 352L580 352M488 357L579 356M487 361L579 360M487 366L578 364M487 371L578 368M487 376L578 373M487 380L577 377M487 385L577 381M487 390L577 385M487 395L576 389M487 399L576 393M488 404L576 398M488 409L576 402M488 414L576 406M489 419L576 410M489 423L576 414M489 428L576 418M490 433L576 423M490 438L576 427M491 442L576 431M492 447L576 435M492 452L576 439M493 456L577 443M494 461L577 448M495 466L577 452M495 471L578 456M496 475L578 460M497 480L578 464M498 485L579 468M499 489L579 473M500 494L580 477M502 498L581 481M503 503L581 485M504 508L582 489M505 512L583 493M506 517L583 497M508 521L584 501M509 526L585 506M511 531L586 510M512 535L587 514M514 540L587 518M515 544L588 522M517 549L589 526M518 553L590 530M520 558L591 534M522 562L593 538M524 566L594 542M525 571L595 546M527 575L596 550M529 580L597 554M531 584L599 558M533 588L600 562M535 593L601 566M537 597L603 570M539 601L604 574M541 606L606 578M544 610L607 581M546 614L609 585M548 618L611 589M550 622L612 593M553 627L614 597M555 631L616 601M558 635L617 604M560 639L619 608M563 643L621 612M565 647L623 616M568 651L625 619M570 655L627 623M573 659L629 627M576 663L631 630M579 667L633 634M581 671L636 637M584 674L638 641M587 678L640 644M590 682L642 648M593 686L645 651M596 689L647 655M599 693L650 658M602 697L652 661M605 700L655 665M608 704L657 668M611 708L660 671M615 711L662 674M618 715L665 678M621 718L668 681M624 721L671 684M628 725L674 687M631 728L676 690M635 731L679 693M638 735L682 696M642 738L685 699M645 741L688 702M649 744L691 705M652 748L694 707M656 751L698 710M659 754L701 713M663 757L704 715M667 760L707 718M671 763L710 721M674 766L714 723M678 769L717 726M682 772L720 728M686 774L724 731M690 777L727 733M693 780L731 736M697 783L734 738M701 786L738 740M705 788L741 742M709 791L745 745M713 794L748 747M717 796L752 749M721 799L755 751M725 801L759 753M729 804L763 755M733 806L766 757M737 809L770 759M741 811L774 761M745 814L777 763M749 816L781 765M754 819L785 767M758 821L789 769M762 823L792 770M766 826L796 772M770 828L800 774M775 830L804 775M779 832L808 777M783 835L812 779M787 837L815 780M791 839L819 782M796 841L823 783M800 843L827 785M804 845L831 786M809 847L835 788M813 849L839 789M817 851L843 790M822 853L847 792M826 855L851 793M831 857L855 794M835 859L859 795M839 860L863 796M844 862L867 798M848 864L871 799M853 865L875 800M857 867L879 801M862 869L883 802M866 870L887 803M871 872L891 804M875 873L895 805M880 875L899 806M884 876L903 806M889 878L907 807M893 879L911 808M898 881L916 809M903 882L920 810M907 883L924 810M912 884L928 811M916 886L932 812M921 887L936 812M926 888L940 813M930 889L944 813M935 890L949 814M940 891L953 814M944 892L957 815M949 893L961 815M954 894L965 816M958 895L969 816M963 896L974 816M968 897L978 817M972 897L982 817M977 898L986 817M982 899L990 817M987 899L994 817M991 900L999 818M996 901L1003 818M1001 901L1007 818M1005 902L1011 818M1010 902L1015 818M1015 903L1019 818M1020 903L1024 818M1024 904L1028 818M1029 904L1032 817M1034 904L1036 817M1039 904L1040 817M1043 905L1044 817M1048 905L1049 817M1053 905L1053 816M1058 905L1057 816M1063 905L1061 816M1067 905L1065 816M1072 905L1069 815M1077 905L1074 815M1082 905L1078 814M1086 905L1082 814M1091 905L1086 813M1096 905L1090 813M1101 905L1094 812M1105 904L1098 812M1110 904L1103 811M1115 904L1107 810M1120 903L1111 810M1125 903L1115 809M1129 902L1119 808M1134 902L1123 808M1139 902L1127 807M1143 901L1131 806M1148 900L1135 805M1153 900L1140 804M1158 899L1144 804M1162 898L1148 803M1167 898L1152 802M1172 897L1156 801M1177 896L1160 800M1181 895L1164 799M1186 894L1168 798M1191 894L1172 797M1195 893L1176 796" stroke="#fff" stroke-opacity=".2" stroke-width=".8" fill="none"/><path d="M515 241L510 259L505 277L502 296L498 314L496 333L494 352L494 371L494 390L494 408L496 427L498 446L501 465L504 483L508 502L513 520L519 538L525 556L532 573L540 591L548 608L557 624L567 641L577 657L588 672L600 687L612 701L624 715L638 729L652 742L666 754L681 766L696 777L712 788L727 798L744 808L760 817L777 826L793 835L811 843L828 850L845 857L863 864L881 870L899 875L917 880L936 885L954 888L973 892L992 894L1011 896L1029 898L1048 899L1067 899L1086 899L1105 898L1124 896L1143 894L1161 892L1180 888M522 242L517 260L512 278L508 296L505 315L503 333L501 352L500 371L500 389L500 408L502 427L504 445L506 464L510 482L514 501L519 519L524 537L530 554L537 572L545 589L553 606L562 622L571 638L581 654L592 670L603 684L615 699L628 713L641 726L655 739L669 751L684 763L699 774L714 784L730 795L746 804L762 814L779 822L795 831L812 839L830 846L847 853L865 859L883 865L900 870L919 875L937 879L955 883L974 886L992 888L1011 890L1030 892L1048 892L1067 892L1086 892L1104 891L1123 890L1142 887L1160 885L1179 881M529 243L524 261L519 279L515 297L512 315L509 333L508 352L507 370L506 389L507 407L508 426L510 444L512 463L516 481L520 499L524 517L529 535L535 553L542 570L549 587L557 604L566 620L575 636L585 652L596 667L607 682L619 696L631 710L644 723L658 736L672 748L686 759L701 771L717 781L732 791L748 801L764 810L781 818L797 827L814 834L831 842L849 848L866 854L884 860L902 865L920 870L938 874L956 877L974 880L993 882L1011 884L1030 885L1048 886L1067 886L1085 886L1104 884L1122 883L1141 881L1159 878L1178 875M536 244L531 262L526 279L522 297L519 315L516 334L514 352L513 370L513 389L513 407L514 425L516 444L518 462L521 480L525 498L530 516L535 533L540 551L547 568L554 585L562 602L570 618L579 634L589 650L599 665L611 679L622 694L634 707L647 720L661 733L675 745L689 756L704 767L719 778L735 788L751 797L767 806L783 815L799 823L816 830L833 837L850 844L868 850L885 855L903 860L921 864L939 868L957 872L975 874L993 877L1012 878L1030 879L1048 880L1067 880L1085 879L1103 878L1122 876L1140 874L1158 871L1176 868M543 245L538 262L533 280L529 298L525 316L523 334L521 352L520 370L519 388L519 406L520 425L522 443L524 461L527 479L531 497L535 514L540 532L546 549L552 566L559 583L566 600L575 616L584 632L593 647L603 662L614 677L626 691L638 705L651 718L664 730L678 742L692 753L707 764L722 774L737 784L753 793L769 802L785 811L801 818L818 826L835 833L852 839L869 845L887 850L904 855L922 859L940 863L958 866L976 869L994 871L1012 872L1030 873L1048 873L1067 873L1085 872L1103 871L1121 869L1139 867L1157 864L1175 861M550 246L544 263L540 281L535 298L532 316L529 334L527 352L526 370L525 388L526 406L526 424L528 442L530 460L533 478L536 495L540 513L545 530L551 547L557 564L564 581L571 598L579 614L588 630L597 645L607 660L618 675L629 689L641 702L654 715L667 727L681 739L695 750L709 761L724 771L740 781L755 790L771 799L787 807L803 814L820 822L837 828L854 834L871 840L888 845L906 850L923 854L941 857L959 860L976 863L994 865L1012 866L1030 867L1048 867L1066 867L1084 866L1102 865L1120 863L1138 860L1156 857L1174 854M557 247L551 264L546 281L542 299L539 316L536 334L534 352L533 370L532 388L532 405L533 423L534 441L536 459L539 476L542 494L546 511L551 529L556 546L562 563L568 579L575 596L583 612L592 627L601 643L611 658L621 672L633 686L644 699L657 712L670 724L684 736L698 747L712 758L727 768L742 777L757 786L773 795L789 803L805 810L822 817L838 824L855 830L872 835L889 840L907 845L924 849L942 852L959 855L977 857L995 859L1013 860L1031 861L1048 861L1066 860L1084 859L1102 858L1120 856L1137 854L1155 851L1173 847M564 248L558 265L553 282L549 299L545 317L543 334L540 352L539 369L538 387L538 405L539 423L540 440L542 458L544 475L548 493L551 510L556 527L561 544L567 561L573 577L580 594L588 610L596 625L605 640L615 655L625 670L636 683L648 697L660 709L673 722L686 733L700 744L715 755L729 764L744 774L760 783L775 791L791 799L807 806L824 813L840 819L857 825L874 831L891 835L908 840L925 843L943 847L960 849L978 851L995 853L1013 854L1031 855L1048 855L1066 854L1084 853L1101 851L1119 849L1137 847L1154 844L1171 840M571 250L565 266L560 283L556 300L552 317L549 334L547 352L546 369L545 387L544 404L545 422L546 439L548 457L550 474L553 491L557 509L561 526L566 542L572 559L578 575L585 592L592 607L600 623L609 638L619 653L629 667L640 681L651 694L663 707L676 719L689 730L703 741L717 751L732 761L747 770L762 779L778 787L793 795L809 802L826 809L842 815L859 821L875 826L892 830L909 834L926 838L944 841L961 844L978 846L996 847L1013 848L1031 848L1048 848L1066 848L1084 846L1101 845L1118 843L1136 840L1153 837L1170 833M578 251L572 267L567 284L563 301L559 318L556 335L554 352L552 369L551 386L551 404L551 421L552 439L554 456L556 473L559 490L562 507L566 524L571 541L576 557L582 574L589 590L596 605L604 621L613 636L622 650L632 665L643 678L655 691L667 704L679 716L692 727L706 738L720 748L734 758L749 767L764 776L780 784L795 791L811 798L827 805L844 811L860 816L877 821L894 825L911 829L928 833L945 836L962 838L979 840L996 841L1014 842L1031 842L1049 842L1066 841L1083 840L1100 838L1118 836L1135 833L1152 830L1169 826M584 252L579 268L574 284L569 301L566 318L563 335L560 352L558 369L557 386L557 403L557 420L558 438L560 455L562 472L564 489L568 506L572 522L576 539L581 555L587 572L594 588L601 603L609 618L617 633L626 648L636 662L647 676L658 689L670 701L682 713L695 724L709 735L723 745L737 755L752 764L767 772L782 780L798 787L813 794L829 800L846 806L862 811L878 816L895 820L912 824L929 827L946 830L963 832L980 834L997 835L1014 836L1031 836L1049 836L1066 835L1083 833L1100 832L1117 829L1134 826L1151 823L1168 819M591 253L586 269L581 285L576 302L572 318L569 335L567 352L565 369L564 386L563 403L563 420L564 437L565 454L567 471L570 488L573 504L577 521L581 537L586 554L592 570L598 585L605 601L613 616L621 631L630 646L640 660L650 673L661 686L673 698L685 710L698 721L711 732L725 742L740 751L754 760L769 768L784 776L800 783L815 790L831 796L847 802L864 807L880 811L896 816L913 819L930 822L947 825L964 827L981 828L998 829L1015 830L1032 830L1049 829L1066 828L1083 827L1099 825L1116 823L1133 820L1150 816L1166 813M598 254L593 270L587 286L583 302L579 319L576 335L573 352L571 369L570 385L570 402L570 419L570 436L571 453L573 470L576 486L579 503L582 519L586 536L591 552L597 568L603 583L610 599L617 614L625 629L634 643L643 657L654 671L665 683L676 696L688 707L701 718L714 729L728 739L742 748L757 757L771 765L786 772L802 779L817 786L833 792L849 797L865 802L881 807L898 811L914 814L931 817L948 819L964 821L981 823L998 823L1015 824L1032 824L1049 823L1065 822L1082 820L1099 818L1116 816L1132 813L1149 809L1165 806" stroke="#fff" stroke-opacity=".18" stroke-width=".8" fill="none"/><path d="M605 255L601 267L597 279L593 291L590 303L587 315L584 327L582 339L580 352L578 364L577 377L576 389L576 402L576 414L576 427L576 439L577 452L578 464L580 477L582 489L584 501L587 514L589 526L593 538L596 550L600 562L604 574L609 585L614 597L619 608L625 619L631 630L638 641L645 651L652 661L660 671L668 681L676 690L685 699L694 707L704 715L714 723L724 731L734 738L745 745L755 751L766 757L777 763L789 769L800 774L812 779L823 783L835 788L847 792L859 795L871 799L883 802L895 805L907 807L920 810L932 812L944 813L957 815L969 816L982 817L994 817L1007 818L1019 818L1032 817L1044 817L1057 816L1069 815L1082 814L1094 812L1107 810L1119 808L1131 806L1144 804L1156 801L1168 798L1216 759L1204 762L1192 765L1180 768L1168 770L1156 773L1144 775L1132 776L1120 778L1107 779L1095 780L1083 780L1071 781L1058 781L1046 781L1034 781L1022 780L1009 779L997 778L985 777L973 775L961 773L949 771L937 769L925 766L913 763L901 760L889 757L877 753L866 749L854 745L843 740L832 735L821 730L810 724L799 719L788 713L778 706L767 699L757 692L748 685L738 677L729 669L720 661L711 653L702 644L694 635L686 625L679 615L672 605L665 595L658 585L652 574L647 563L641 552L636 541L631 530L627 518L623 507L620 495L617 483L614 471L612 459L610 447L608 435L607 423L607 410L607 398L607 386L607 374L608 361L609 349L611 337L613 325L615 313L617 301L620 289L622 277L625 265L628 253Z" fill="url(#pdot)"/><path d="M508.6 239.5L504.5 253.2L500.8 267.0L497.5 281.0L494.7 295.0L492.4 309.1L490.4 323.3L488.9 337.5L487.9 351.8L487.2 366.1L487.0 380.4L487.3 394.7L487.9 409.0L489.0 423.3L490.4 437.5L492.3 451.7L494.6 465.8L497.3 479.9L500.4 493.8L503.9 507.7L507.8 521.5L512.1 535.1L516.8 548.7L521.8 562.1L527.3 575.3L533.1 588.4L539.3 601.3L545.8 614.0L552.8 626.5L560.1 638.8L567.7 650.9L575.8 662.7L584.1 674.3L592.9 685.7L601.9 696.7L611.4 707.5L621.1 718.0L631.2 728.2L641.6 738.0L652.2 747.5L663.2 756.8L674.3 765.7L685.7 774.4L697.3 782.8L709.1 790.9L721.0 798.8L733.1 806.5L745.4 813.8L757.8 821.0L770.3 827.9L783.0 834.6L795.8 841.0L808.7 847.1L821.8 852.9L834.9 858.5L848.2 863.8L861.7 868.8L875.2 873.5L888.8 877.8L902.5 881.9L916.4 885.6L930.3 889.0L944.2 892.1L958.3 894.9L972.4 897.4L986.5 899.5L1000.7 901.3L1014.9 902.7L1029.2 903.9L1043.5 904.7L1057.8 905.1L1072.1 905.3L1086.4 905.1L1100.7 904.5L1115.0 903.7L1129.3 902.5L1143.5 901.0L1157.7 899.1L1171.8 896.9L1185.9 894.4" stroke="#d8d8b0" stroke-opacity=".5" stroke-width="1" fill="none"/><path d="M605.2 255.1L600.8 266.8L596.7 278.7L593.0 290.7L589.7 302.7L586.7 314.9L584.1 327.1L581.8 339.5L579.9 351.8L578.4 364.3L577.2 376.7L576.4 389.2L575.9 401.7L575.7 414.3L575.9 426.8L576.4 439.3L577.3 451.8L578.5 464.3L580.0 476.7L581.8 489.1L584.0 501.4L586.5 513.7L589.4 525.9L592.6 538.0L596.1 550.0L600.0 561.9L604.3 573.7L608.9 585.3L613.9 596.8L619.3 608.1L625.1 619.2L631.2 630.1L637.8 640.8L644.7 651.2L652.0 661.4L659.8 671.3L667.9 680.8L676.4 690.0L685.2 698.8L694.4 707.3L703.9 715.5L713.7 723.3L723.8 730.8L734.1 737.9L744.6 744.7L755.4 751.1L766.3 757.3L777.4 763.1L788.6 768.6L800.0 773.8L811.5 778.7L823.2 783.3L834.9 787.6L846.8 791.6L858.8 795.3L870.8 798.7L882.9 801.9L895.1 804.7L907.4 807.3L919.7 809.6L932.1 811.6L944.5 813.3L956.9 814.8L969.4 815.9L981.9 816.8L994.4 817.4L1006.9 817.7L1019.4 817.7L1031.9 817.5L1044.5 817.0L1057.0 816.2L1069.4 815.2L1081.9 813.9L1094.3 812.3L1106.7 810.5L1119.1 808.4L1131.4 806.1L1143.6 803.6L1155.8 800.8L1168.0 797.7" stroke="#e0e0e0" stroke-opacity=".55" stroke-width="1.4" fill="none"/><path d="M630.6 245.3L627.3 257.1L624.3 268.9L621.4 280.9L618.7 292.8L616.2 304.8L614.0 316.9L612.1 329.0L610.4 341.1L609.0 353.3L607.8 365.5L607.1 377.8L606.6 390.0L606.6 402.3L606.9 414.5L607.6 426.8L608.7 439.0L610.3 451.1L612.3 463.2L614.8 475.3L617.6 487.2L620.9 499.0L624.5 510.7L628.6 522.3L633.0 533.7L637.8 545.0L642.9 556.1L648.5 567.1L654.4 577.8L660.6 588.4L667.2 598.7L674.1 608.8L681.4 618.7L689.0 628.3L696.9 637.7L705.2 646.7L713.7 655.5L722.6 664.0L731.8 672.1L741.2 680.0L750.8 687.6L760.7 694.8L770.8 701.7L781.2 708.3L791.7 714.6L802.4 720.6L813.2 726.3L824.3 731.7L835.4 736.8L846.7 741.5L858.1 746.0L869.6 750.2L881.3 754.2L893.0 757.8L904.8 761.2L916.6 764.2L928.6 767.1L940.6 769.6L952.6 771.9L964.7 773.9L976.8 775.7L989.0 777.2L1001.2 778.4L1013.4 779.4L1025.7 780.2L1037.9 780.7L1050.2 780.9L1062.4 780.9L1074.7 780.7L1086.9 780.2L1099.2 779.4L1111.4 778.4L1123.6 777.2L1135.8 775.7L1147.9 773.9L1160.0 771.9L1172.0 769.6L1184.0 767.1L1196.0 764.3L1207.8 761.2" stroke="#e0e0e0" stroke-opacity=".35" stroke-width="1" fill="none"/>
<defs>
<linearGradient id="gc1" gradientUnits="userSpaceOnUse" x1="543" y1="182" x2="609" y2="274" gradientTransform="rotate(28 570 222)">
<stop offset="0" stop-color="#7a0c08"/><stop offset=".16" stop-color="#c81408"/><stop offset=".33" stop-color="#ee3a10"/><stop offset=".48" stop-color="#ee8a18"/><stop offset=".6" stop-color="#eec020"/><stop offset=".69" stop-color="#e6e020"/><stop offset=".79" stop-color="#a8e048"/><stop offset=".89" stop-color="#5fe090"/><stop offset="1" stop-color="#30e0d0"/></linearGradient>
<linearGradient id="gc2" gradientUnits="userSpaceOnUse" x1="1172" y1="812" x2="1256" y2="852" gradientTransform="rotate(-12.5 1209.5 833)">
<stop offset="0" stop-color="#2028c0"/><stop offset=".3" stop-color="#1018d0"/><stop offset=".5" stop-color="#1848e0"/><stop offset=".7" stop-color="#2898e0"/><stop offset=".92" stop-color="#38e8c8"/></linearGradient>
<linearGradient id="gr2" gradientUnits="userSpaceOnUse" x1="1190" y1="760" x2="1255" y2="860"><stop offset="0" stop-color="#b4583a"/><stop offset=".5" stop-color="#9a3a26"/><stop offset="1" stop-color="#741a12"/></linearGradient>
<clipPath id="cl1"><path d="M529.6 181.6L612 260.5L800 260L800 0L400 0Z"/></clipPath>
<clipPath id="cl2"><path d="M1172 794L1248 869L1400 869L1400 600L1172 600Z"/></clipPath>
<pattern id="pdot" width="3.4" height="3.4" patternUnits="userSpaceOnUse" patternTransform="rotate(30)"><rect width="1.3" height="1.3" fill="#fff" fill-opacity=".3"/></pattern>
<pattern id="pm" width="7" height="7" patternUnits="userSpaceOnUse" patternTransform="rotate(20)"><path d="M0 0H7M0 0V7" stroke="#fff" stroke-opacity=".35" stroke-width=".7" fill="none"/></pattern>
</defs>
<g clip-path="url(#cl1)"><ellipse cx="570" cy="222" rx="78" ry="56" transform="rotate(-28 570 222)" fill="#b4c2cb"/></g>
<path d="M530 181L534 185L526 205L509 244L522 199Z" fill="#8e9ba7"/>
<ellipse cx="570" cy="222" rx="66" ry="46" transform="rotate(-28 570 222)" fill="url(#gc1)"/>
<ellipse cx="570" cy="222" rx="66" ry="46" transform="rotate(-28 570 222)" fill="url(#pm)"/>
<g clip-path="url(#cl2)"><ellipse cx="1210.5" cy="833" rx="51.5" ry="74.5" transform="rotate(12.5 1210.5 833)" fill="url(#gr2)"/></g>
<ellipse cx="1209.5" cy="833" rx="43" ry="64" transform="rotate(12.5 1209.5 833)" fill="url(#gc2)"/>
<ellipse cx="1209.5" cy="833" rx="43" ry="64" transform="rotate(12.5 1209.5 833)" fill="url(#pm)"/>

<defs>
<linearGradient id="lg1" x1="0" y1="1" x2="0" y2="0">
<stop offset="0" stop-color="#d6e8f6"/><stop offset=".076" stop-color="#9cc6e6"/><stop offset=".152" stop-color="#5a9fd0"/><stop offset=".227" stop-color="#2a72ac"/><stop offset=".303" stop-color="#1e4d78"/><stop offset=".345" stop-color="#1f4f52"/><stop offset=".379" stop-color="#1a5c30"/><stop offset=".455" stop-color="#1a7a2a"/><stop offset=".53" stop-color="#3a8c2c"/><stop offset=".606" stop-color="#74a554"/><stop offset=".65" stop-color="#b4c484"/><stop offset=".682" stop-color="#e2d89c"/><stop offset=".758" stop-color="#e8b67c"/><stop offset=".833" stop-color="#d07e5c"/><stop offset=".909" stop-color="#a84a30"/><stop offset="1" stop-color="#6e0c0c"/>
</linearGradient>
<linearGradient id="lg2" x1="0" y1="1" x2="0" y2="0">
<stop offset="0" stop-color="#000080"/><stop offset=".125" stop-color="#0000ff"/><stop offset=".375" stop-color="#00ffff"/><stop offset=".625" stop-color="#ffff00"/><stop offset=".875" stop-color="#ff0000"/><stop offset="1" stop-color="#800000"/>
</linearGradient></defs>
<rect x="889" y="186" width="23" height="446" fill="url(#lg1)"/>
<rect x="1104" y="184" width="23" height="449" fill="url(#lg2)"/>
<g font-family="Liberation Sans,sans-serif" font-size="19.5" fill="#fff" stroke="#fff" stroke-width=".45">
<text x="928" y="191.4">6.6e-04</text>
<text x="928" y="232.5">0.0006</text>
<text x="928" y="266.2">0.00055</text>
<text x="928" y="300.0">0.0005</text>
<text x="928" y="334.0">0.00045</text>
<text x="928" y="368.0">0.0004</text>
<text x="928" y="401.7">0.00035</text>
<text x="928" y="435.5">0.0003</text>
<text x="928" y="469.3">0.00025</text>
<text x="928" y="503.0">0.0002</text>
<text x="928" y="536.9">0.00015</text>
<text x="928" y="570.7">0.0001</text>
<text x="928" y="604.5">5e-5</text>
<text x="928" y="638.0">0.0e+00</text>
<text x="1143" y="190.6">3.0e-01</text>
<text x="1143" y="252.9">0.25</text>
<text x="1143" y="315.4">0.2</text>
<text x="1143" y="377.5">0.15</text>
<text x="1143" y="439.6">0.1</text>
<text x="1143" y="501.8">0.05</text>
<text x="1143" y="564.2">0</text>
<text x="1143" y="638.8">-6.0e-02</text>
</g>
<path d="M908 184.5H922M908 226.5H922M908 259.5H922M908 293.5H922M908 327.5H922M908 361.5H922M908 395.5H922M908 428.5H922M908 462.5H922M908 496.5H922M908 530.5H922M908 564.5H922M908 598.5H922M908 631.5H922M1123 246.5H1137M1123 308.5H1137M1123 370.5H1137M1123 433.5H1137M1123 495.5H1137M1123 557.5H1137M1104 184.5H1248M1123 632.5H1248" stroke="#fff" stroke-width="1" fill="none"/>
<g font-family="Liberation Sans,sans-serif" font-size="24" fill="#fff" stroke="#fff" stroke-width=".5">
<text transform="translate(1026.5 577) rotate(-90)" letter-spacing="1.2">Displacement Magnitude (m)</text>
<text transform="translate(1246 565) rotate(-90)" letter-spacing=".78">Kinematic pressure (m2/s2)</text>
</g>
</svg>

<svg style="left:1292px;top:150px" width="355" height="370" viewBox="1292 150 355 370">
<rect x="1292" y="150" width="355" height="370" fill="#fff"/>
<path d="M1369 223.9H1627M1369 208.9H1627M1369 200.2H1627M1369 193.9H1627M1369 189.1H1627M1369 185.2H1627M1369 181.8H1627M1369 178.9H1627M1369 176.4H1627M1369 273.8H1627M1369 258.8H1627M1369 250.0H1627M1369 243.8H1627M1369 239.0H1627M1369 235.0H1627M1369 231.7H1627M1369 228.8H1627M1369 226.2H1627M1369 323.6H1627M1369 308.6H1627M1369 299.9H1627M1369 293.6H1627M1369 288.8H1627M1369 284.9H1627M1369 281.5H1627M1369 278.6H1627M1369 276.1H1627M1369 373.5H1627M1369 358.5H1627M1369 349.7H1627M1369 343.5H1627M1369 338.7H1627M1369 334.7H1627M1369 331.4H1627M1369 328.5H1627M1369 325.9H1627M1369 423.4H1627M1369 408.3H1627M1369 399.6H1627M1369 393.3H1627M1369 388.5H1627M1369 384.6H1627M1369 381.2H1627M1369 378.3H1627M1369 375.8H1627M1369 473.2H1627M1369 458.2H1627M1369 449.4H1627M1369 443.2H1627M1369 438.4H1627M1369 434.4H1627M1369 431.1H1627M1369 428.2H1627M1369 425.6H1627" stroke="#ececec" stroke-width="1" fill="none"/>
<path d="M1454.8 174V473M1540.8 174V473M1626.8 174V473" stroke="#f0f0f0" stroke-width="1" fill="none"/>
<path d="M1362.7 223.9H1369M1365.2 208.9H1369M1365.2 200.2H1369M1365.2 193.9H1369M1365.2 189.1H1369M1365.2 185.2H1369M1365.2 181.8H1369M1365.2 178.9H1369M1365.2 176.4H1369M1362.7 273.8H1369M1365.2 258.8H1369M1365.2 250.0H1369M1365.2 243.8H1369M1365.2 239.0H1369M1365.2 235.0H1369M1365.2 231.7H1369M1365.2 228.8H1369M1365.2 226.2H1369M1362.7 323.6H1369M1365.2 308.6H1369M1365.2 299.9H1369M1365.2 293.6H1369M1365.2 288.8H1369M1365.2 284.9H1369M1365.2 281.5H1369M1365.2 278.6H1369M1365.2 276.1H1369M1362.7 373.5H1369M1365.2 358.5H1369M1365.2 349.7H1369M1365.2 343.5H1369M1365.2 338.7H1369M1365.2 334.7H1369M1365.2 331.4H1369M1365.2 328.5H1369M1365.2 325.9H1369M1362.7 423.4H1369M1365.2 408.3H1369M1365.2 399.6H1369M1365.2 393.3H1369M1365.2 388.5H1369M1365.2 384.6H1369M1365.2 381.2H1369M1365.2 378.3H1369M1365.2 375.8H1369M1362.7 473.2H1369M1365.2 458.2H1369M1365.2 449.4H1369M1365.2 443.2H1369M1365.2 438.4H1369M1365.2 434.4H1369M1365.2 431.1H1369M1365.2 428.2H1369M1365.2 425.6H1369M1362.7 174.1H1369" stroke="#333" stroke-width=".9" fill="none"/>
<path d="M1368.7 196.2L1369.0 200.2L1369.2 203.0L1369.4 205.2L1369.5 206.2L1369.7 208.8L1370.0 211.2L1370.1 211.5L1370.2 212.6L1370.5 213.5L1370.8 215.3L1371.0 216.6L1371.3 217.7L1371.5 218.5L1371.5 218.9L1371.8 219.8L1372.1 220.6L1372.1 221.0L1372.3 221.4L1372.6 222.4L1372.8 223.2L1373.1 223.7L1373.3 224.5L1373.5 225.1L1373.6 225.3L1373.9 225.9L1374.1 226.3L1374.2 226.8L1374.4 227.2L1374.6 227.6L1374.9 228.4L1375.2 228.9L1375.4 229.2L1375.6 229.6L1375.7 229.8L1375.9 230.2L1376.2 231.2L1376.3 230.8L1376.4 231.3L1376.7 231.9L1377.0 232.0L1377.2 232.4L1377.5 233.0L1377.6 233.3L1377.7 233.3L1378.0 233.7L1378.2 233.9L1378.3 234.2L1378.5 234.5L1378.8 234.8L1379.0 235.4L1379.3 236.0L1379.5 236.2L1379.7 236.5L1379.8 236.8L1380.1 237.3L1380.3 237.6L1380.4 238.2L1380.6 238.0L1381.1 238.9L1381.8 240.4L1382.5 241.3L1383.2 242.6L1383.8 243.4L1384.5 244.8L1385.2 245.6L1385.9 246.3L1386.6 247.0L1387.3 248.4L1388.0 248.9L1388.7 249.6L1389.3 250.5L1390.0 250.8L1390.7 252.0L1391.4 252.4L1392.1 253.2L1392.8 253.4L1393.5 254.2L1394.2 254.7L1394.9 255.3L1395.5 255.2L1396.2 255.8L1396.9 256.2L1397.6 256.5L1398.3 256.9L1399.0 257.4L1399.7 257.8L1400.4 258.0L1401.0 258.0L1401.7 258.6L1402.4 258.7L1403.1 258.9L1403.8 259.0L1404.5 259.1L1405.2 259.6L1405.9 259.8L1406.6 259.7L1407.2 259.7L1407.9 259.9L1408.6 260.1L1409.3 260.4L1410.0 260.4L1410.7 260.6L1411.4 260.6L1412.1 260.9L1412.7 260.9L1413.4 261.1L1414.1 261.1L1414.8 261.2L1415.5 261.0L1416.2 261.2L1416.9 261.3L1417.6 261.9L1418.3 261.7L1418.9 261.8L1419.6 261.7L1420.3 262.2L1421.0 261.7L1421.7 261.8L1422.4 262.2L1423.1 262.2L1423.8 262.2L1424.5 262.1L1425.1 262.0L1425.8 261.8L1426.5 262.2L1427.2 262.1L1427.9 262.2L1428.6 262.0L1429.3 262.2L1430.0 262.1L1430.6 262.5L1431.3 262.4L1432.0 262.5L1432.7 262.2L1433.4 262.3L1434.1 262.5L1434.8 262.5L1435.5 262.4L1436.2 262.6L1436.8 262.7L1437.5 262.5L1438.2 262.2L1438.9 262.7L1439.6 262.8L1440.3 262.9L1441.0 262.9L1441.7 262.7L1442.3 262.7L1443.0 262.8L1443.7 262.8L1444.4 262.9L1445.1 262.9L1445.8 263.2L1446.5 263.0L1447.2 263.0L1447.9 263.2L1448.5 263.1L1449.2 263.2L1449.9 263.2L1450.6 263.0L1451.3 263.2L1452.0 263.2L1452.7 263.1L1453.4 263.2L1454.0 263.1L1454.6 263.6L1454.7 221.3L1455.0 226.0L1455.3 230.4L1455.4 233.1L1455.5 234.5L1455.8 238.6L1456.0 242.7L1456.1 243.8L1456.3 246.5L1456.5 250.1L1456.8 253.4L1457.1 257.1L1457.3 260.0L1457.5 262.4L1457.6 263.3L1457.8 266.7L1458.1 269.8L1458.2 270.6L1458.3 272.4L1458.6 275.2L1458.9 277.3L1459.1 279.4L1459.4 281.1L1459.6 282.7L1459.6 283.1L1459.9 285.1L1460.2 286.8L1460.2 287.3L1460.4 288.4L1460.7 289.6L1460.9 290.8L1461.2 292.1L1461.4 293.0L1461.6 293.5L1461.7 294.0L1462.0 294.8L1462.2 295.6L1462.3 296.0L1462.5 296.1L1462.7 297.2L1463.0 297.4L1463.3 298.1L1463.5 298.5L1463.7 299.0L1463.8 299.3L1464.0 299.6L1464.3 300.2L1464.4 300.3L1464.5 300.6L1464.8 301.1L1465.1 301.5L1465.3 302.1L1465.6 302.4L1465.7 303.0L1465.8 302.9L1466.1 303.5L1466.3 303.7L1466.4 303.8L1466.6 304.6L1467.1 305.4L1467.8 306.9L1468.5 308.6L1469.2 309.8L1469.9 311.5L1470.6 313.2L1471.3 314.5L1471.9 315.9L1472.6 317.3L1473.3 318.9L1474.0 320.0L1474.7 321.3L1475.4 322.8L1476.1 323.9L1476.8 325.0L1477.4 326.3L1478.1 327.0L1478.8 328.4L1479.5 329.6L1480.2 330.6L1480.9 331.4L1481.6 331.9L1482.3 333.1L1483.0 333.9L1483.6 334.5L1484.3 335.3L1485.0 335.6L1485.7 336.7L1486.4 337.1L1487.1 337.8L1487.8 338.3L1488.5 339.2L1489.1 339.3L1489.8 340.2L1490.5 340.7L1491.2 341.4L1491.9 341.9L1492.6 342.2L1493.3 342.6L1494.0 343.1L1494.7 343.5L1495.3 344.0L1496.0 344.6L1496.7 345.0L1497.4 345.5L1498.1 346.1L1498.8 346.6L1499.5 347.1L1500.2 347.8L1500.8 348.6L1501.5 349.1L1502.2 349.7L1502.9 350.8L1503.6 351.8L1504.3 353.0L1505.0 354.1L1505.7 356.1L1506.4 357.4L1507.0 359.0L1507.7 361.0L1508.4 362.4L1509.1 364.2L1509.8 366.0L1510.5 367.5L1511.2 369.1L1511.9 370.2L1512.6 371.0L1513.2 372.6L1513.9 373.3L1514.6 374.7L1515.3 375.6L1516.0 376.7L1516.7 378.1L1517.4 378.7L1518.1 379.5L1518.7 380.6L1519.4 381.4L1520.1 381.9L1520.8 382.7L1521.5 383.5L1522.2 384.0L1522.9 384.4L1523.6 385.2L1524.3 385.6L1524.9 386.2L1525.6 387.0L1526.3 387.9L1527.0 388.6L1527.7 389.2L1528.4 389.9L1529.1 390.9L1529.8 391.8L1530.4 392.9L1531.1 393.9L1531.8 395.1L1532.5 396.3L1533.2 397.6L1533.9 398.9L1534.6 400.1L1535.3 401.5L1536.0 402.8L1536.6 403.9L1537.3 405.4L1538.0 406.4L1538.7 408.2L1539.4 410.1L1540.1 411.5L1540.6 412.8L1540.8 221.6L1541.0 225.7L1541.3 230.3L1541.5 233.5L1541.5 234.3L1541.8 238.7L1542.1 242.3L1542.1 244.0L1542.3 246.6L1542.6 249.9L1542.8 254.0L1543.1 257.6L1543.4 261.1L1543.5 263.8L1543.6 265.0L1543.9 268.5L1544.1 271.7L1544.2 273.0L1544.4 274.8L1544.6 277.5L1544.9 279.6L1545.2 281.9L1545.4 283.8L1545.6 284.6L1545.7 285.4L1545.9 286.9L1546.2 288.4L1546.3 288.7L1546.4 290.0L1546.7 291.2L1547.0 292.9L1547.2 293.9L1547.5 294.7L1547.7 295.7L1547.7 296.1L1548.0 297.2L1548.3 297.8L1548.3 298.2L1548.5 299.0L1548.8 299.5L1549.0 300.3L1549.3 300.9L1549.5 301.7L1549.7 301.8L1549.8 302.2L1550.1 302.8L1550.3 303.4L1550.4 303.5L1550.6 303.7L1550.8 304.4L1551.1 304.7L1551.4 305.2L1551.6 305.5L1551.8 305.9L1551.9 306.2L1552.1 306.9L1552.4 306.9L1552.5 307.0L1552.6 307.3L1553.2 308.0L1553.8 309.1L1554.5 309.9L1555.2 310.8L1555.9 311.3L1556.6 312.3L1557.3 313.3L1558.0 314.4L1558.7 315.2L1559.4 315.9L1560.0 317.0L1560.7 318.1L1561.4 318.7L1562.1 319.6L1562.8 320.5L1563.5 321.5L1564.2 322.3L1564.9 323.3L1565.5 324.2L1566.2 325.3L1566.9 325.9L1567.6 327.0L1568.3 327.7L1569.0 329.3L1569.7 329.8L1570.4 330.8L1571.1 331.9L1571.7 332.8L1572.4 333.6L1573.1 334.5L1573.8 335.5L1574.5 336.2L1575.2 336.7L1575.9 337.3L1576.6 338.0L1577.2 338.5L1577.9 339.0L1578.6 339.3L1579.3 340.1L1580.0 340.6L1580.7 340.8L1581.4 341.5L1582.1 341.9L1582.8 342.4L1583.4 342.9L1584.1 343.9L1584.8 344.4L1585.5 345.6L1586.2 346.2L1586.9 347.5L1587.6 348.5L1588.3 349.2L1588.9 350.5L1589.6 351.8L1590.3 352.9L1591.0 354.0L1591.7 355.3L1592.4 356.6L1593.1 357.8L1593.8 359.6L1594.5 361.2L1595.1 362.8L1595.8 364.2L1596.5 365.7L1597.2 367.0L1597.9 368.3L1598.6 369.3L1599.3 370.1L1600.0 371.1L1600.7 371.7L1601.3 372.5L1602.0 373.5L1602.7 374.1L1603.4 374.8L1604.1 375.2L1604.8 375.7L1605.5 376.8L1606.2 377.4L1606.8 378.4L1607.5 378.7L1608.2 379.5L1608.9 380.4L1609.6 380.9L1610.3 382.0L1611.0 382.6L1611.7 383.3L1612.4 384.2L1613.0 384.7L1613.7 385.4L1614.4 386.6L1615.1 387.4L1615.8 388.0L1616.5 389.0L1617.2 390.1L1617.9 391.0L1618.5 392.0L1619.2 393.0L1619.9 394.0L1620.6 395.2L1621.3 396.3L1622.0 397.8L1622.7 399.6L1623.4 401.5L1624.1 404.1L1624.7 407.9L1625.4 412.5L1626.1 417.1L1626.8 422.3" stroke="#000000" stroke-width="1.7" fill="none" stroke-linejoin="round"/>
<path d="M1369.2 283.0L1369.5 283.3L1369.7 283.3L1369.9 283.4L1370.0 283.3L1370.2 283.6L1370.5 283.9L1370.6 284.0L1370.8 284.7L1371.0 286.1L1371.3 288.0L1371.5 290.4L1371.8 292.8L1372.0 295.1L1372.1 296.1L1372.3 299.2L1372.6 302.1L1372.7 303.4L1372.8 305.3L1373.1 308.0L1373.3 310.4L1373.6 312.6L1373.9 314.3L1374.0 315.2L1374.1 315.4L1374.4 316.4L1374.6 317.6L1374.7 317.9L1374.9 318.5L1375.2 319.7L1375.4 320.4L1375.7 321.2L1375.9 322.0L1376.1 322.6L1376.2 323.0L1376.4 323.5L1376.7 324.3L1376.8 324.9L1377.0 325.4L1377.2 326.5L1377.5 327.4L1377.7 328.7L1378.0 329.1L1378.2 329.9L1378.2 329.8L1378.5 330.6L1378.8 331.1L1378.9 331.1L1379.0 331.0L1379.3 331.3L1379.5 331.2L1379.8 331.2L1380.1 331.3L1380.2 330.9L1380.3 330.9L1380.6 331.0L1380.8 330.8L1380.9 331.1L1381.1 330.9L1381.6 330.6L1382.3 330.5L1383.0 330.9L1383.7 330.9L1384.4 330.4L1385.0 330.0L1385.7 330.2L1386.4 330.2L1387.1 330.1L1387.8 330.3L1388.5 330.2L1389.2 330.2L1389.9 330.3L1390.6 330.4L1391.2 330.7L1391.9 330.6L1392.6 330.9L1393.3 330.7L1394.0 330.7L1394.7 331.3L1395.4 331.6L1396.1 331.5L1396.7 331.5L1397.4 331.6L1398.1 331.7L1398.8 332.1L1399.5 332.2L1400.2 332.0L1400.9 332.5L1401.6 332.3L1402.3 332.6L1402.9 332.5L1403.6 332.6L1404.3 332.6L1405.0 332.7L1405.7 333.0L1406.4 332.9L1407.1 333.0L1407.8 333.1L1408.4 333.0L1409.1 333.3L1409.8 333.4L1410.5 333.5L1411.2 333.5L1411.9 333.4L1412.6 333.6L1413.3 333.4L1414.0 333.6L1414.6 333.7L1415.3 334.0L1416.0 333.8L1416.7 333.8L1417.4 334.2L1418.1 333.8L1418.8 333.8L1419.5 334.0L1420.1 334.0L1420.8 333.8L1421.5 334.0L1422.2 334.4L1422.9 334.3L1423.6 334.4L1424.3 334.4L1425.0 334.8L1425.7 334.3L1426.3 334.6L1427.0 334.5L1427.7 334.6L1428.4 334.5L1429.1 334.7L1429.8 334.8L1430.5 334.6L1431.2 334.5L1431.8 334.8L1432.5 334.6L1433.2 334.8L1433.9 335.0L1434.6 334.7L1435.3 335.1L1436.0 334.9L1436.7 335.1L1437.4 335.0L1438.0 335.3L1438.7 335.3L1439.4 335.1L1440.1 335.3L1440.8 335.4L1441.5 335.5L1442.2 335.4L1442.9 335.7L1443.6 335.7L1444.2 335.7L1444.9 335.8L1445.6 335.9L1446.3 335.8L1447.0 335.9L1447.7 336.0L1448.4 335.8L1449.1 335.9L1449.7 335.9L1450.4 336.2L1451.1 336.3L1451.8 336.6L1452.5 336.5L1453.2 336.8L1453.9 336.6L1454.6 336.5L1454.7 273.6L1455.0 276.0L1455.3 278.6L1455.4 279.9L1455.5 280.9L1455.8 282.9L1456.0 285.2L1456.1 285.8L1456.3 287.0L1456.5 289.3L1456.8 291.2L1457.1 293.6L1457.3 295.8L1457.5 296.9L1457.6 297.5L1457.8 299.9L1458.1 301.8L1458.2 302.7L1458.3 303.8L1458.6 305.6L1458.9 307.6L1459.1 309.4L1459.4 311.2L1459.6 312.1L1459.6 312.5L1459.9 314.1L1460.2 315.6L1460.2 316.3L1460.4 316.8L1460.7 318.5L1460.9 319.9L1461.2 321.1L1461.4 322.8L1461.6 323.4L1461.7 323.8L1462.0 325.0L1462.2 326.1L1462.3 326.6L1462.5 327.8L1462.7 328.7L1463.0 329.8L1463.3 330.9L1463.5 332.1L1463.7 332.9L1463.8 332.9L1464.0 333.9L1464.3 334.9L1464.4 335.5L1464.5 335.6L1464.8 337.2L1465.1 337.7L1465.3 338.1L1465.6 339.3L1465.7 339.7L1465.8 340.2L1466.1 340.5L1466.3 341.7L1466.4 341.7L1466.6 342.2L1467.1 343.7L1467.8 345.1L1468.5 347.1L1469.2 348.5L1469.9 349.9L1470.6 351.5L1471.3 352.9L1471.9 354.4L1472.6 356.2L1473.3 357.9L1474.0 359.6L1474.7 361.2L1475.4 362.6L1476.1 364.2L1476.8 365.4L1477.4 366.6L1478.1 367.7L1478.8 368.5L1479.5 369.7L1480.2 370.5L1480.9 371.1L1481.6 372.3L1482.3 373.0L1483.0 374.0L1483.6 374.6L1484.3 375.5L1485.0 376.0L1485.7 376.7L1486.4 377.3L1487.1 377.8L1487.8 378.6L1488.5 379.2L1489.1 380.0L1489.8 380.7L1490.5 381.4L1491.2 382.1L1491.9 382.5L1492.6 382.8L1493.3 383.5L1494.0 384.2L1494.7 384.4L1495.3 385.3L1496.0 385.8L1496.7 386.4L1497.4 386.9L1498.1 387.3L1498.8 387.5L1499.5 388.3L1500.2 388.9L1500.8 389.4L1501.5 389.9L1502.2 390.6L1502.9 390.9L1503.6 391.4L1504.3 392.0L1505.0 392.6L1505.7 393.5L1506.4 394.2L1507.0 394.4L1507.7 395.1L1508.4 396.2L1509.1 396.7L1509.8 397.5L1510.5 398.2L1511.2 399.0L1511.9 399.9L1512.6 400.6L1513.2 401.4L1513.9 402.3L1514.6 403.3L1515.3 404.3L1516.0 404.8L1516.7 405.7L1517.4 406.2L1518.1 406.9L1518.7 407.7L1519.4 408.6L1520.1 409.2L1520.8 409.7L1521.5 410.7L1522.2 411.1L1522.9 411.8L1523.6 412.5L1524.3 412.9L1524.9 413.9L1525.6 414.4L1526.3 415.3L1527.0 416.0L1527.7 416.8L1528.4 417.3L1529.1 418.3L1529.8 419.0L1530.4 420.1L1531.1 420.7L1531.8 421.6L1532.5 422.9L1533.2 423.8L1533.9 425.3L1534.6 426.4L1535.3 428.2L1536.0 430.0L1536.6 431.3L1537.3 433.3L1538.0 435.2L1538.7 437.2L1539.4 439.6L1540.1 441.9L1540.6 443.9L1540.8 273.6L1541.0 276.1L1541.3 278.7L1541.5 280.2L1541.5 280.9L1541.8 283.3L1542.1 285.2L1542.1 286.0L1542.3 287.5L1542.6 289.5L1542.8 291.4L1543.1 293.4L1543.4 295.4L1543.5 297.0L1543.6 297.5L1543.9 299.8L1544.1 301.6L1544.2 302.4L1544.4 303.5L1544.6 305.6L1544.9 307.4L1545.2 309.0L1545.4 310.6L1545.6 311.9L1545.7 312.3L1545.9 313.7L1546.2 315.0L1546.3 315.6L1546.4 316.4L1546.7 317.7L1547.0 318.6L1547.2 319.9L1547.5 321.3L1547.7 322.2L1547.7 322.2L1548.0 323.1L1548.3 324.3L1548.3 324.6L1548.5 325.4L1548.8 326.6L1549.0 327.3L1549.3 328.3L1549.5 329.3L1549.7 330.2L1549.8 330.3L1550.1 331.5L1550.3 332.3L1550.4 332.8L1550.6 333.5L1550.8 334.6L1551.1 335.4L1551.4 336.7L1551.6 338.0L1551.8 338.9L1551.9 339.3L1552.1 340.1L1552.4 341.8L1552.5 342.1L1552.6 342.6L1553.2 344.9L1553.8 348.2L1554.5 350.7L1555.2 353.1L1555.9 355.5L1556.6 357.9L1557.3 359.8L1558.0 362.0L1558.7 363.5L1559.4 365.5L1560.0 366.5L1560.7 368.1L1561.4 369.2L1562.1 370.0L1562.8 371.2L1563.5 371.9L1564.2 373.0L1564.9 373.4L1565.5 374.4L1566.2 375.3L1566.9 375.8L1567.6 376.4L1568.3 377.2L1569.0 377.7L1569.7 378.0L1570.4 378.7L1571.1 379.4L1571.7 380.0L1572.4 380.3L1573.1 381.1L1573.8 381.8L1574.5 381.9L1575.2 382.4L1575.9 382.5L1576.6 383.1L1577.2 383.8L1577.9 384.2L1578.6 384.5L1579.3 385.1L1580.0 385.6L1580.7 386.0L1581.4 386.5L1582.1 387.0L1582.8 387.6L1583.4 388.0L1584.1 388.5L1584.8 389.6L1585.5 389.6L1586.2 390.7L1586.9 391.2L1587.6 392.2L1588.3 392.7L1588.9 393.5L1589.6 394.2L1590.3 394.8L1591.0 395.6L1591.7 396.6L1592.4 397.2L1593.1 397.9L1593.8 398.6L1594.5 399.6L1595.1 400.3L1595.8 401.0L1596.5 401.9L1597.2 402.7L1597.9 403.0L1598.6 404.0L1599.3 404.7L1600.0 405.5L1600.7 405.9L1601.3 406.5L1602.0 407.4L1602.7 407.9L1603.4 408.7L1604.1 408.9L1604.8 409.6L1605.5 410.4L1606.2 410.6L1606.8 411.3L1607.5 411.9L1608.2 412.4L1608.9 413.1L1609.6 413.7L1610.3 414.1L1611.0 414.8L1611.7 415.5L1612.4 415.7L1613.0 416.7L1613.7 417.4L1614.4 418.1L1615.1 418.7L1615.8 419.4L1616.5 420.3L1617.2 421.0L1617.9 422.2L1618.5 422.9L1619.2 423.8L1619.9 424.7L1620.6 425.7L1621.3 427.3L1622.0 427.9L1622.7 430.1L1623.4 431.8L1624.1 434.3L1624.7 438.1L1625.4 442.8L1626.1 448.4L1626.8 453.4" stroke="#e41a1c" stroke-width="1.7" fill="none" stroke-linejoin="round"/>
<path d="M1368.7 208.9L1369.0 206.3L1369.2 203.9L1369.4 202.8L1369.5 201.7L1369.7 200.6L1370.0 200.2L1370.1 200.0L1370.2 200.3L1370.5 201.3L1370.8 202.5L1371.0 203.5L1371.3 203.9L1371.5 203.6L1371.5 203.6L1371.8 202.7L1372.1 201.3L1372.1 200.9L1372.3 200.1L1372.6 198.4L1372.8 196.9L1373.1 194.8L1373.3 192.9L1373.5 192.1L1373.6 191.5L1373.9 191.0L1374.1 192.8L1374.2 194.0L1374.4 197.0L1374.6 201.9L1374.9 205.0L1375.2 207.1L1375.4 208.5L1375.6 209.6L1375.7 210.1L1375.9 211.5L1376.2 212.6L1376.3 213.1L1376.4 214.0L1376.7 215.2L1377.0 216.5L1377.2 217.9L1377.5 219.6L1377.6 221.1L1377.7 221.7L1378.0 224.3L1378.2 226.9L1378.3 227.8L1378.5 229.3L1378.8 231.5L1379.0 233.7L1379.3 236.3L1379.5 238.7L1379.7 239.9L1379.8 240.7L1380.1 243.0L1380.3 244.4L1380.4 245.1L1380.6 245.7L1381.1 247.0L1381.8 247.9L1382.5 248.8L1383.2 249.6L1383.8 250.0L1384.5 250.5L1385.2 250.8L1385.9 251.5L1386.6 252.1L1387.3 252.3L1388.0 252.7L1388.7 253.2L1389.3 253.7L1390.0 254.5L1390.7 254.8L1391.4 255.2L1392.1 255.5L1392.8 256.2L1393.5 256.3L1394.2 256.6L1394.9 257.2L1395.5 257.4L1396.2 257.6L1396.9 258.1L1397.6 258.3L1398.3 258.7L1399.0 259.1L1399.7 259.4L1400.4 259.9L1401.0 260.0L1401.7 260.6L1402.4 260.9L1403.1 261.0L1403.8 261.5L1404.5 261.7L1405.2 261.9L1405.9 262.3L1406.6 262.6L1407.2 262.7L1407.9 263.0L1408.6 263.6L1409.3 263.8L1410.0 263.6L1410.7 264.0L1411.4 264.5L1412.1 264.6L1412.7 264.6L1413.4 264.9L1414.1 264.9L1414.8 265.1L1415.5 265.2L1416.2 265.6L1416.9 265.5L1417.6 265.4L1418.3 265.9L1418.9 265.8L1419.6 265.9L1420.3 266.1L1421.0 266.3L1421.7 266.6L1422.4 266.7L1423.1 266.5L1423.8 266.6L1424.5 266.7L1425.1 266.8L1425.8 267.0L1426.5 267.3L1427.2 267.5L1427.9 267.4L1428.6 267.5L1429.3 267.6L1430.0 268.0L1430.6 268.0L1431.3 268.2L1432.0 268.1L1432.7 268.4L1433.4 268.4L1434.1 268.5L1434.8 268.7L1435.5 268.6L1436.2 269.2L1436.8 269.5L1437.5 269.2L1438.2 269.3L1438.9 269.4L1439.6 269.8L1440.3 269.9L1441.0 270.2L1441.7 270.6L1442.3 270.7L1443.0 270.8L1443.7 271.1L1444.4 271.0L1445.1 271.7L1445.8 271.8L1446.5 271.8L1447.2 272.2L1447.9 272.6L1448.5 272.8L1449.2 273.0L1449.9 272.9L1450.6 273.3L1451.3 273.5L1452.0 273.9L1452.7 274.0L1453.4 274.3L1454.0 274.7L1454.6 274.9L1454.7 218.9L1455.0 214.2L1455.3 210.2L1455.4 207.7L1455.5 206.4L1455.8 204.0L1456.0 202.1L1456.1 201.2L1456.3 200.7L1456.5 200.6L1456.8 201.3L1457.1 202.9L1457.3 204.7L1457.5 206.1L1457.6 206.6L1457.8 208.7L1458.1 209.9L1458.2 210.0L1458.3 210.4L1458.6 210.8L1458.9 211.4L1459.1 211.9L1459.4 212.2L1459.6 212.5L1459.6 212.7L1459.9 212.9L1460.2 213.1L1460.2 213.0L1460.4 213.0L1460.7 213.0L1460.9 213.1L1461.2 213.0L1461.4 213.1L1461.6 213.4L1461.7 213.1L1462.0 213.3L1462.2 213.9L1462.3 214.0L1462.5 214.5L1462.7 215.9L1463.0 217.3L1463.3 219.2L1463.5 221.0L1463.7 222.5L1463.8 223.1L1464.0 225.1L1464.3 226.9L1464.4 227.8L1464.5 228.7L1464.8 230.0L1465.1 231.3L1465.3 232.4L1465.6 233.3L1465.7 234.2L1465.8 234.5L1466.1 235.3L1466.3 236.2L1466.4 236.3L1466.6 237.2L1467.1 238.6L1467.8 241.1L1468.5 243.0L1469.2 244.7L1469.9 246.2L1470.6 247.9L1471.3 249.5L1471.9 250.3L1472.6 251.5L1473.3 252.6L1474.0 253.6L1474.7 254.5L1475.4 255.3L1476.1 256.0L1476.8 257.1L1477.4 257.3L1478.1 258.4L1478.8 259.2L1479.5 259.7L1480.2 260.4L1480.9 260.7L1481.6 261.5L1482.3 262.4L1483.0 263.0L1483.6 263.6L1484.3 264.1L1485.0 264.6L1485.7 265.3L1486.4 265.6L1487.1 266.4L1487.8 267.1L1488.5 267.5L1489.1 268.6L1489.8 269.1L1490.5 269.5L1491.2 270.2L1491.9 270.8L1492.6 271.4L1493.3 272.1L1494.0 272.6L1494.7 273.4L1495.3 274.1L1496.0 274.2L1496.7 275.1L1497.4 275.6L1498.1 275.9L1498.8 276.5L1499.5 277.3L1500.2 277.9L1500.8 278.4L1501.5 279.1L1502.2 279.5L1502.9 280.1L1503.6 280.7L1504.3 281.2L1505.0 281.9L1505.7 282.3L1506.4 283.0L1507.0 284.2L1507.7 284.4L1508.4 285.4L1509.1 286.1L1509.8 286.4L1510.5 287.3L1511.2 287.9L1511.9 288.4L1512.6 289.3L1513.2 290.0L1513.9 290.5L1514.6 291.1L1515.3 291.9L1516.0 292.9L1516.7 293.5L1517.4 294.2L1518.1 294.6L1518.7 295.5L1519.4 296.3L1520.1 297.0L1520.8 298.0L1521.5 298.7L1522.2 299.5L1522.9 300.5L1523.6 301.2L1524.3 302.0L1524.9 303.1L1525.6 303.7L1526.3 304.7L1527.0 305.6L1527.7 306.9L1528.4 307.7L1529.1 308.5L1529.8 309.7L1530.4 310.9L1531.1 311.8L1531.8 312.7L1532.5 314.0L1533.2 315.0L1533.9 315.8L1534.6 317.3L1535.3 318.4L1536.0 319.7L1536.6 320.8L1537.3 321.6L1538.0 323.1L1538.7 324.4L1539.4 325.6L1540.1 326.7L1540.6 327.5L1540.8 219.1L1541.0 214.5L1541.3 210.5L1541.5 207.7L1541.5 206.4L1541.8 203.2L1542.1 200.8L1542.1 200.2L1542.3 199.2L1542.6 199.2L1542.8 199.3L1543.1 199.8L1543.4 200.5L1543.5 201.4L1543.6 201.8L1543.9 202.9L1544.1 204.4L1544.2 204.8L1544.4 205.6L1544.6 207.1L1544.9 208.8L1545.2 210.2L1545.4 211.9L1545.6 212.3L1545.7 212.9L1545.9 213.9L1546.2 215.2L1546.3 215.4L1546.4 216.1L1546.7 217.1L1547.0 218.5L1547.2 219.3L1547.5 220.5L1547.7 221.3L1547.7 221.5L1548.0 222.7L1548.3 223.8L1548.3 224.2L1548.5 224.7L1548.8 225.8L1549.0 226.9L1549.3 228.0L1549.5 228.9L1549.7 229.4L1549.8 229.6L1550.1 230.7L1550.3 231.3L1550.4 231.8L1550.6 232.5L1550.8 233.1L1551.1 234.1L1551.4 234.6L1551.6 235.2L1551.8 235.9L1551.9 236.1L1552.1 236.4L1552.4 237.4L1552.5 237.6L1552.6 238.0L1553.2 239.4L1553.8 241.0L1554.5 242.5L1555.2 244.4L1555.9 245.2L1556.6 246.8L1557.3 248.0L1558.0 248.8L1558.7 249.9L1559.4 251.0L1560.0 251.7L1560.7 252.7L1561.4 253.5L1562.1 254.3L1562.8 255.0L1563.5 255.5L1564.2 256.3L1564.9 256.9L1565.5 257.5L1566.2 258.3L1566.9 259.0L1567.6 259.5L1568.3 259.8L1569.0 260.7L1569.7 261.2L1570.4 261.9L1571.1 262.4L1571.7 263.0L1572.4 263.7L1573.1 264.4L1573.8 265.1L1574.5 265.8L1575.2 266.3L1575.9 266.9L1576.6 267.6L1577.2 268.4L1577.9 269.2L1578.6 269.7L1579.3 270.4L1580.0 271.4L1580.7 271.7L1581.4 272.4L1582.1 273.0L1582.8 274.1L1583.4 274.8L1584.1 275.2L1584.8 276.2L1585.5 276.8L1586.2 277.5L1586.9 278.2L1587.6 279.0L1588.3 279.5L1588.9 280.0L1589.6 280.8L1590.3 281.5L1591.0 282.4L1591.7 282.8L1592.4 283.7L1593.1 284.4L1593.8 285.5L1594.5 286.0L1595.1 286.9L1595.8 287.5L1596.5 288.3L1597.2 289.3L1597.9 289.8L1598.6 290.5L1599.3 291.4L1600.0 292.1L1600.7 293.1L1601.3 293.9L1602.0 294.7L1602.7 295.3L1603.4 296.0L1604.1 296.8L1604.8 297.7L1605.5 298.6L1606.2 299.2L1606.8 300.0L1607.5 301.0L1608.2 301.7L1608.9 302.2L1609.6 302.9L1610.3 303.2L1611.0 304.2L1611.7 305.0L1612.4 305.6L1613.0 306.0L1613.7 307.1L1614.4 307.6L1615.1 308.4L1615.8 309.1L1616.5 310.1L1617.2 311.1L1617.9 311.9L1618.5 312.9L1619.2 313.8L1619.9 315.1L1620.6 315.9L1621.3 317.4L1622.0 318.6L1622.7 320.1L1623.4 321.3L1624.1 322.7L1624.7 324.1L1625.4 325.5L1626.1 327.2L1626.8 328.8" stroke="#377eb8" stroke-width="1.7" fill="none" stroke-linejoin="round"/>
<path d="M1368.7 199.4L1369.0 199.8L1369.2 200.4L1369.4 200.6L1369.5 201.0L1369.7 202.6L1370.0 203.6L1370.1 203.9L1370.2 205.8L1370.5 212.2L1370.8 220.9L1371.0 232.1L1371.3 243.6L1371.5 251.1L1371.5 254.8L1371.8 264.5L1372.1 271.9L1372.1 273.8L1372.3 276.7L1372.6 281.5L1372.8 285.7L1373.1 289.4L1373.3 293.1L1373.5 294.8L1373.6 295.9L1373.9 297.8L1374.1 298.7L1374.2 298.7L1374.4 298.0L1374.6 294.7L1374.9 289.9L1375.2 285.1L1375.4 282.0L1375.6 281.2L1375.7 281.3L1375.9 283.2L1376.2 286.4L1376.3 287.2L1376.4 290.0L1376.7 294.7L1377.0 299.0L1377.2 302.9L1377.5 305.8L1377.6 307.5L1377.7 308.8L1378.0 311.4L1378.2 314.3L1378.3 315.0L1378.5 316.2L1378.8 318.0L1379.0 319.2L1379.3 319.4L1379.5 320.2L1379.7 320.3L1379.8 320.3L1380.1 320.5L1380.3 321.1L1380.4 321.0L1380.6 321.3L1381.1 322.0L1381.8 322.4L1382.5 322.6L1383.2 323.2L1383.8 323.4L1384.5 323.7L1385.2 324.3L1385.9 324.5L1386.6 324.9L1387.3 325.3L1388.0 325.8L1388.7 326.5L1389.3 326.9L1390.0 327.3L1390.7 327.7L1391.4 328.0L1392.1 328.1L1392.8 328.4L1393.5 329.1L1394.2 329.2L1394.9 329.9L1395.5 330.1L1396.2 330.5L1396.9 331.0L1397.6 331.2L1398.3 331.6L1399.0 332.1L1399.7 332.5L1400.4 333.1L1401.0 333.5L1401.7 334.1L1402.4 334.5L1403.1 335.3L1403.8 335.8L1404.5 336.5L1405.2 337.4L1405.9 338.4L1406.6 339.6L1407.2 340.9L1407.9 342.2L1408.6 343.0L1409.3 343.8L1410.0 344.8L1410.7 346.3L1411.4 346.8L1412.1 347.4L1412.7 348.2L1413.4 348.6L1414.1 349.1L1414.8 349.8L1415.5 350.2L1416.2 350.9L1416.9 351.3L1417.6 351.7L1418.3 351.9L1418.9 352.7L1419.6 352.9L1420.3 353.2L1421.0 353.7L1421.7 354.0L1422.4 354.6L1423.1 354.8L1423.8 355.1L1424.5 355.3L1425.1 356.0L1425.8 356.3L1426.5 356.9L1427.2 357.4L1427.9 357.6L1428.6 358.2L1429.3 358.6L1430.0 359.2L1430.6 359.4L1431.3 359.8L1432.0 360.8L1432.7 360.8L1433.4 361.5L1434.1 361.9L1434.8 362.5L1435.5 362.8L1436.2 363.6L1436.8 364.1L1437.5 364.6L1438.2 365.1L1438.9 365.6L1439.6 366.2L1440.3 367.0L1441.0 367.9L1441.7 368.8L1442.3 369.5L1443.0 370.6L1443.7 371.7L1444.4 372.8L1445.1 374.3L1445.8 375.6L1446.5 377.3L1447.2 378.2L1447.9 379.7L1448.5 381.1L1449.2 382.3L1449.9 383.7L1450.6 384.9L1451.3 385.8L1452.0 387.3L1452.7 388.5L1453.4 389.8L1454.0 391.1L1454.6 392.2L1454.7 208.6L1455.0 211.2L1455.3 213.5L1455.4 215.5L1455.5 216.5L1455.8 219.9L1456.0 223.2L1456.1 223.8L1456.3 226.2L1456.5 230.3L1456.8 234.8L1457.1 240.0L1457.3 246.0L1457.5 249.7L1457.6 252.2L1457.8 258.4L1458.1 264.9L1458.2 266.3L1458.3 270.5L1458.6 275.8L1458.9 281.1L1459.1 285.0L1459.4 289.0L1459.6 291.6L1459.6 292.6L1459.9 296.4L1460.2 300.2L1460.2 301.7L1460.4 303.7L1460.7 306.7L1460.9 309.5L1461.2 311.7L1461.4 313.4L1461.6 314.3L1461.7 314.4L1462.0 315.1L1462.2 316.2L1462.3 316.3L1462.5 316.6L1462.7 317.6L1463.0 318.0L1463.3 318.8L1463.5 319.1L1463.7 319.5L1463.8 319.6L1464.0 320.0L1464.3 320.3L1464.4 320.4L1464.5 321.0L1464.8 320.8L1465.1 321.4L1465.3 321.8L1465.6 322.1L1465.7 322.2L1465.8 322.5L1466.1 322.7L1466.3 323.1L1466.4 323.1L1466.6 323.5L1467.1 324.1L1467.8 325.2L1468.5 326.3L1469.2 327.2L1469.9 328.4L1470.6 329.6L1471.3 330.4L1471.9 331.5L1472.6 332.5L1473.3 333.4L1474.0 334.0L1474.7 335.2L1475.4 336.0L1476.1 336.9L1476.8 337.4L1477.4 338.3L1478.1 339.1L1478.8 339.7L1479.5 339.9L1480.2 340.3L1480.9 341.0L1481.6 341.2L1482.3 341.2L1483.0 341.4L1483.6 341.9L1484.3 341.9L1485.0 341.9L1485.7 342.3L1486.4 342.5L1487.1 342.7L1487.8 343.0L1488.5 343.0L1489.1 343.3L1489.8 343.9L1490.5 344.1L1491.2 344.3L1491.9 344.9L1492.6 345.4L1493.3 346.1L1494.0 346.4L1494.7 347.4L1495.3 347.6L1496.0 348.7L1496.7 349.4L1497.4 350.2L1498.1 350.8L1498.8 351.6L1499.5 352.4L1500.2 353.1L1500.8 353.8L1501.5 354.5L1502.2 355.5L1502.9 356.0L1503.6 357.2L1504.3 357.9L1505.0 358.7L1505.7 359.2L1506.4 360.3L1507.0 361.0L1507.7 361.3L1508.4 362.0L1509.1 362.8L1509.8 363.9L1510.5 364.4L1511.2 365.1L1511.9 365.9L1512.6 366.9L1513.2 367.5L1513.9 368.5L1514.6 369.2L1515.3 369.5L1516.0 370.5L1516.7 371.6L1517.4 372.4L1518.1 372.9L1518.7 373.9L1519.4 374.6L1520.1 375.6L1520.8 376.4L1521.5 377.2L1522.2 378.3L1522.9 379.4L1523.6 380.2L1524.3 381.0L1524.9 381.9L1525.6 382.8L1526.3 383.8L1527.0 384.7L1527.7 385.9L1528.4 386.6L1529.1 387.5L1529.8 388.8L1530.4 390.0L1531.1 390.9L1531.8 392.2L1532.5 393.4L1533.2 394.7L1533.9 396.0L1534.6 397.4L1535.3 398.5L1536.0 399.9L1536.6 401.7L1537.3 403.1L1538.0 404.6L1538.7 406.3L1539.4 408.0L1540.1 409.7L1540.6 411.2L1540.8 209.0L1541.0 211.4L1541.3 213.6L1541.5 215.6L1541.5 216.8L1541.8 219.8L1542.1 222.8L1542.1 224.0L1542.3 226.5L1542.6 230.2L1542.8 234.8L1543.1 239.6L1543.4 245.0L1543.5 248.9L1543.6 250.5L1543.9 256.8L1544.1 262.2L1544.2 263.9L1544.4 267.5L1544.6 272.1L1544.9 276.7L1545.2 279.9L1545.4 282.7L1545.6 284.5L1545.7 285.4L1545.9 288.0L1546.2 290.0L1546.3 291.1L1546.4 292.5L1546.7 294.2L1547.0 296.1L1547.2 298.1L1547.5 300.2L1547.7 301.3L1547.7 301.9L1548.0 303.7L1548.3 305.4L1548.3 305.7L1548.5 307.1L1548.8 308.9L1549.0 310.6L1549.3 312.3L1549.5 313.5L1549.7 314.9L1549.8 315.0L1550.1 316.6L1550.3 317.7L1550.4 318.1L1550.6 318.5L1550.8 319.5L1551.1 319.8L1551.4 320.9L1551.6 321.5L1551.8 321.6L1551.9 321.7L1552.1 322.4L1552.4 323.1L1552.5 322.7L1552.6 323.2L1553.2 324.0L1553.8 325.2L1554.5 325.8L1555.2 326.8L1555.9 327.4L1556.6 328.1L1557.3 328.5L1558.0 329.5L1558.7 330.1L1559.4 330.5L1560.0 331.2L1560.7 331.8L1561.4 332.4L1562.1 332.7L1562.8 333.4L1563.5 333.8L1564.2 334.0L1564.9 334.7L1565.5 335.3L1566.2 335.8L1566.9 336.0L1567.6 336.6L1568.3 337.1L1569.0 337.4L1569.7 337.9L1570.4 338.0L1571.1 338.8L1571.7 338.8L1572.4 339.6L1573.1 340.0L1573.8 340.4L1574.5 341.0L1575.2 341.5L1575.9 342.3L1576.6 343.1L1577.2 343.4L1577.9 344.2L1578.6 344.7L1579.3 345.1L1580.0 345.9L1580.7 346.6L1581.4 347.3L1582.1 347.9L1582.8 348.5L1583.4 349.4L1584.1 349.8L1584.8 350.7L1585.5 351.3L1586.2 352.1L1586.9 352.6L1587.6 353.3L1588.3 354.1L1588.9 354.9L1589.6 355.5L1590.3 356.1L1591.0 356.9L1591.7 357.8L1592.4 358.5L1593.1 359.1L1593.8 360.3L1594.5 360.7L1595.1 361.7L1595.8 362.1L1596.5 363.2L1597.2 363.9L1597.9 364.8L1598.6 365.4L1599.3 366.1L1600.0 366.8L1600.7 368.0L1601.3 368.7L1602.0 368.9L1602.7 370.2L1603.4 371.1L1604.1 371.9L1604.8 373.2L1605.5 373.4L1606.2 374.5L1606.8 375.6L1607.5 376.1L1608.2 377.3L1608.9 378.2L1609.6 378.9L1610.3 379.8L1611.0 380.8L1611.7 381.6L1612.4 382.6L1613.0 383.5L1613.7 384.0L1614.4 384.8L1615.1 385.8L1615.8 386.8L1616.5 387.9L1617.2 388.9L1617.9 390.2L1618.5 391.0L1619.2 392.6L1619.9 393.9L1620.6 395.5L1621.3 397.6L1622.0 399.2L1622.7 401.9L1623.4 404.4L1624.1 406.9L1624.7 409.8L1625.4 412.6L1626.1 415.7L1626.8 418.5" stroke="#984ea3" stroke-width="1.7" fill="none" stroke-linejoin="round"/>
<path d="M1368.7 216.5L1369.0 216.9L1369.2 217.1L1369.4 217.7L1369.5 218.2L1369.7 218.9L1370.0 220.7L1370.1 221.3L1370.2 223.9L1370.5 227.8L1370.8 232.8L1371.0 238.0L1371.3 243.6L1371.5 247.2L1371.5 248.8L1371.8 254.0L1372.1 259.0L1372.1 260.4L1372.3 264.0L1372.6 269.3L1372.8 274.6L1373.1 280.0L1373.3 284.8L1373.5 288.1L1373.6 289.6L1373.9 293.6L1374.1 297.4L1374.2 298.8L1374.4 301.3L1374.6 305.1L1374.9 308.7L1375.2 312.2L1375.4 315.4L1375.6 317.8L1375.7 318.6L1375.9 321.5L1376.2 324.2L1376.3 325.4L1376.4 326.9L1376.7 329.2L1377.0 331.0L1377.2 332.6L1377.5 333.8L1377.6 334.6L1377.7 335.0L1378.0 336.2L1378.2 337.1L1378.3 337.4L1378.5 337.9L1378.8 338.9L1379.0 339.6L1379.3 340.2L1379.5 341.2L1379.7 341.6L1379.8 341.6L1380.1 342.2L1380.3 342.9L1380.4 342.7L1380.6 343.1L1381.1 343.9L1381.8 344.3L1382.5 345.4L1383.2 345.9L1383.8 346.6L1384.5 347.0L1385.2 347.4L1385.9 348.1L1386.6 348.4L1387.3 348.8L1388.0 349.3L1388.7 349.3L1389.3 349.8L1390.0 350.2L1390.7 350.6L1391.4 350.8L1392.1 351.1L1392.8 351.6L1393.5 351.7L1394.2 352.7L1394.9 353.1L1395.5 353.3L1396.2 354.0L1396.9 354.2L1397.6 354.7L1398.3 355.0L1399.0 355.4L1399.7 355.8L1400.4 356.3L1401.0 356.7L1401.7 357.2L1402.4 357.6L1403.1 358.1L1403.8 358.7L1404.5 359.3L1405.2 359.7L1405.9 359.9L1406.6 360.8L1407.2 360.9L1407.9 361.5L1408.6 361.8L1409.3 362.3L1410.0 362.9L1410.7 363.3L1411.4 364.1L1412.1 364.2L1412.7 364.7L1413.4 365.7L1414.1 365.9L1414.8 366.7L1415.5 367.4L1416.2 368.3L1416.9 368.7L1417.6 369.4L1418.3 370.1L1418.9 371.0L1419.6 371.3L1420.3 371.9L1421.0 372.5L1421.7 372.9L1422.4 373.6L1423.1 373.9L1423.8 374.1L1424.5 374.3L1425.1 374.1L1425.8 374.4L1426.5 374.6L1427.2 374.4L1427.9 374.6L1428.6 374.4L1429.3 374.4L1430.0 374.6L1430.6 374.5L1431.3 374.6L1432.0 374.5L1432.7 374.6L1433.4 374.2L1434.1 374.4L1434.8 374.5L1435.5 374.7L1436.2 374.2L1436.8 374.3L1437.5 374.4L1438.2 374.5L1438.9 374.8L1439.6 375.3L1440.3 375.4L1441.0 376.3L1441.7 377.3L1442.3 377.9L1443.0 379.1L1443.7 379.5L1444.4 380.4L1445.1 381.3L1445.8 382.2L1446.5 383.6L1447.2 384.6L1447.9 385.8L1448.5 387.3L1449.2 389.1L1449.9 390.6L1450.6 392.3L1451.3 393.9L1452.0 395.7L1452.7 397.2L1453.4 398.7L1454.0 400.0L1454.6 401.0L1454.7 216.5L1455.0 219.1L1455.3 222.1L1455.4 224.1L1455.5 225.3L1455.8 228.8L1456.0 232.8L1456.1 233.8L1456.3 236.5L1456.5 241.3L1456.8 246.2L1457.1 251.4L1457.3 256.7L1457.5 260.2L1457.6 262.1L1457.8 267.1L1458.1 272.4L1458.2 273.8L1458.3 277.1L1458.6 282.3L1458.9 287.4L1459.1 293.1L1459.4 298.6L1459.6 302.4L1459.6 304.0L1459.9 309.4L1460.2 314.6L1460.2 316.4L1460.4 319.1L1460.7 323.3L1460.9 327.0L1461.2 330.0L1461.4 332.1L1461.6 333.1L1461.7 333.6L1462.0 334.5L1462.2 335.4L1462.3 335.8L1462.5 336.4L1462.7 336.7L1463.0 337.6L1463.3 338.4L1463.5 339.0L1463.7 339.6L1463.8 339.6L1464.0 339.9L1464.3 340.1L1464.4 340.8L1464.5 340.9L1464.8 340.9L1465.1 341.5L1465.3 341.9L1465.6 342.2L1465.7 342.6L1465.8 342.8L1466.1 343.0L1466.3 343.3L1466.4 343.7L1466.6 343.5L1467.1 344.7L1467.8 345.3L1468.5 345.4L1469.2 346.6L1469.9 347.1L1470.6 348.0L1471.3 348.5L1471.9 349.2L1472.6 349.7L1473.3 350.2L1474.0 350.6L1474.7 351.3L1475.4 351.8L1476.1 352.6L1476.8 352.9L1477.4 353.6L1478.1 354.0L1478.8 354.7L1479.5 355.2L1480.2 355.5L1480.9 356.1L1481.6 356.6L1482.3 357.2L1483.0 357.6L1483.6 358.0L1484.3 358.5L1485.0 359.2L1485.7 359.6L1486.4 360.0L1487.1 360.7L1487.8 360.9L1488.5 361.5L1489.1 362.0L1489.8 362.9L1490.5 363.3L1491.2 363.6L1491.9 364.0L1492.6 364.6L1493.3 364.8L1494.0 365.3L1494.7 365.8L1495.3 366.5L1496.0 366.4L1496.7 367.1L1497.4 367.4L1498.1 368.1L1498.8 368.4L1499.5 368.8L1500.2 369.3L1500.8 369.7L1501.5 370.4L1502.2 370.6L1502.9 371.7L1503.6 372.1L1504.3 372.4L1505.0 373.2L1505.7 373.9L1506.4 374.8L1507.0 375.1L1507.7 376.4L1508.4 377.0L1509.1 378.1L1509.8 379.1L1510.5 380.1L1511.2 381.5L1511.9 382.6L1512.6 383.6L1513.2 384.8L1513.9 385.3L1514.6 386.2L1515.3 386.7L1516.0 387.5L1516.7 387.8L1517.4 388.4L1518.1 388.7L1518.7 389.2L1519.4 389.3L1520.1 389.9L1520.8 390.5L1521.5 390.4L1522.2 390.9L1522.9 391.3L1523.6 391.2L1524.3 392.0L1524.9 392.6L1525.6 393.0L1526.3 393.3L1527.0 394.0L1527.7 394.4L1528.4 395.1L1529.1 396.1L1529.8 396.7L1530.4 397.4L1531.1 398.4L1531.8 399.4L1532.5 400.1L1533.2 401.2L1533.9 402.6L1534.6 403.6L1535.3 404.8L1536.0 406.1L1536.6 407.7L1537.3 409.1L1538.0 411.4L1538.7 413.4L1539.4 415.4L1540.1 418.0L1540.6 419.5L1540.8 216.4L1541.0 220.7L1541.3 224.7L1541.5 227.1L1541.5 228.6L1541.8 233.0L1542.1 237.4L1542.1 239.0L1542.3 242.0L1542.6 247.2L1542.8 252.2L1543.1 258.3L1543.4 264.3L1543.5 268.3L1543.6 270.3L1543.9 276.5L1544.1 282.4L1544.2 284.0L1544.4 288.2L1544.6 293.6L1544.9 298.5L1545.2 303.1L1545.4 307.6L1545.6 309.6L1545.7 311.0L1545.9 313.4L1546.2 315.9L1546.3 316.8L1546.4 318.1L1546.7 320.3L1547.0 322.6L1547.2 324.1L1547.5 326.4L1547.7 327.3L1547.7 328.2L1548.0 330.1L1548.3 331.6L1548.3 332.0L1548.5 332.9L1548.8 334.2L1549.0 335.8L1549.3 337.1L1549.5 338.4L1549.7 339.0L1549.8 339.3L1550.1 340.6L1550.3 341.0L1550.4 341.3L1550.6 341.7L1550.8 342.9L1551.1 343.3L1551.4 343.9L1551.6 344.6L1551.8 344.9L1551.9 345.1L1552.1 345.4L1552.4 345.8L1552.5 345.9L1552.6 346.4L1553.2 347.4L1553.8 348.1L1554.5 349.0L1555.2 349.7L1555.9 350.4L1556.6 351.3L1557.3 351.8L1558.0 352.7L1558.7 353.2L1559.4 353.8L1560.0 354.5L1560.7 355.1L1561.4 355.9L1562.1 356.3L1562.8 356.7L1563.5 357.5L1564.2 357.9L1564.9 357.9L1565.5 358.7L1566.2 359.4L1566.9 359.9L1567.6 360.0L1568.3 361.0L1569.0 361.1L1569.7 361.4L1570.4 362.0L1571.1 362.3L1571.7 363.0L1572.4 363.3L1573.1 363.7L1573.8 364.1L1574.5 364.6L1575.2 365.0L1575.9 365.3L1576.6 366.0L1577.2 366.4L1577.9 366.8L1578.6 367.2L1579.3 367.7L1580.0 368.2L1580.7 368.4L1581.4 368.6L1582.1 369.1L1582.8 369.4L1583.4 369.2L1584.1 369.9L1584.8 370.4L1585.5 370.9L1586.2 371.0L1586.9 371.7L1587.6 371.8L1588.3 372.4L1588.9 372.7L1589.6 373.5L1590.3 373.7L1591.0 374.7L1591.7 375.0L1592.4 375.4L1593.1 376.1L1593.8 377.2L1594.5 377.6L1595.1 378.6L1595.8 379.6L1596.5 380.7L1597.2 381.6L1597.9 382.6L1598.6 383.4L1599.3 384.4L1600.0 385.2L1600.7 386.0L1601.3 387.0L1602.0 387.5L1602.7 387.8L1603.4 388.9L1604.1 389.3L1604.8 390.0L1605.5 390.5L1606.2 390.9L1606.8 391.3L1607.5 391.8L1608.2 392.4L1608.9 392.8L1609.6 393.7L1610.3 393.9L1611.0 394.5L1611.7 395.1L1612.4 395.7L1613.0 396.4L1613.7 396.7L1614.4 397.7L1615.1 398.5L1615.8 399.0L1616.5 399.7L1617.2 400.2L1617.9 400.6L1618.5 401.6L1619.2 402.3L1619.9 402.7L1620.6 404.2L1621.3 405.0L1622.0 406.1L1622.7 407.4L1623.4 408.8L1624.1 411.8L1624.7 415.6L1625.4 420.7L1626.1 426.3L1626.8 432.0" stroke="#ff7f00" stroke-width="1.7" fill="none" stroke-linejoin="round"/>
<path d="M1368.7 229.2L1369.0 225.3L1369.2 222.1L1369.4 220.6L1369.5 219.5L1369.7 217.8L1370.0 216.0L1370.1 215.7L1370.2 214.1L1370.5 213.1L1370.8 212.8L1371.0 213.2L1371.3 214.5L1371.5 215.3L1371.5 216.0L1371.8 218.0L1372.1 220.5L1372.1 221.5L1372.3 223.2L1372.6 225.4L1372.8 227.9L1373.1 229.5L1373.3 231.3L1373.5 232.8L1373.6 233.2L1373.9 235.1L1374.1 236.9L1374.2 237.7L1374.4 238.9L1374.6 240.6L1374.9 242.1L1375.2 243.9L1375.4 245.4L1375.6 246.6L1375.7 246.8L1375.9 248.3L1376.2 249.5L1376.3 249.9L1376.4 250.6L1376.7 252.0L1377.0 253.3L1377.2 254.5L1377.5 255.5L1377.6 256.6L1377.7 256.8L1378.0 257.8L1378.2 259.1L1378.3 259.3L1378.5 260.0L1378.8 260.8L1379.0 261.9L1379.3 263.3L1379.5 263.9L1379.7 264.4L1379.8 264.6L1380.1 265.4L1380.3 266.0L1380.4 266.3L1380.6 267.1L1381.1 268.2L1381.8 270.0L1382.5 270.8L1383.2 272.5L1383.8 273.8L1384.5 275.2L1385.2 276.2L1385.9 277.1L1386.6 278.3L1387.3 279.3L1388.0 280.3L1388.7 280.8L1389.3 282.0L1390.0 283.0L1390.7 283.7L1391.4 284.5L1392.1 285.2L1392.8 286.1L1393.5 287.0L1394.2 287.7L1394.9 288.4L1395.5 289.5L1396.2 289.8L1396.9 290.7L1397.6 292.0L1398.3 292.6L1399.0 293.2L1399.7 294.0L1400.4 294.7L1401.0 296.0L1401.7 296.7L1402.4 297.3L1403.1 297.9L1403.8 298.9L1404.5 299.3L1405.2 300.0L1405.9 300.6L1406.6 301.5L1407.2 301.9L1407.9 302.4L1408.6 303.0L1409.3 303.2L1410.0 303.9L1410.7 304.0L1411.4 304.7L1412.1 304.6L1412.7 304.9L1413.4 305.5L1414.1 305.6L1414.8 305.8L1415.5 306.2L1416.2 306.1L1416.9 306.3L1417.6 306.7L1418.3 306.8L1418.9 306.8L1419.6 307.1L1420.3 307.4L1421.0 307.2L1421.7 307.7L1422.4 307.7L1423.1 307.8L1423.8 308.0L1424.5 308.6L1425.1 308.6L1425.8 308.8L1426.5 309.1L1427.2 309.2L1427.9 309.5L1428.6 309.8L1429.3 310.0L1430.0 310.1L1430.6 310.4L1431.3 311.1L1432.0 310.8L1432.7 311.5L1433.4 311.5L1434.1 312.2L1434.8 312.4L1435.5 312.8L1436.2 312.8L1436.8 313.2L1437.5 313.8L1438.2 314.2L1438.9 314.6L1439.6 315.3L1440.3 315.7L1441.0 316.3L1441.7 316.7L1442.3 317.7L1443.0 318.8L1443.7 319.7L1444.4 320.9L1445.1 322.1L1445.8 323.8L1446.5 325.0L1447.2 326.2L1447.9 328.0L1448.5 329.3L1449.2 330.4L1449.9 331.8L1450.6 332.9L1451.3 334.1L1452.0 335.4L1452.7 336.3L1453.4 337.6L1454.0 338.9L1454.6 339.6L1454.7 219.0L1455.0 215.7L1455.3 213.1L1455.4 211.9L1455.5 212.0L1455.8 212.0L1456.0 213.1L1456.1 213.2L1456.3 214.2L1456.5 216.1L1456.8 218.1L1457.1 220.0L1457.3 221.7L1457.5 222.3L1457.6 222.6L1457.8 224.5L1458.1 225.5L1458.2 226.3L1458.3 227.4L1458.6 228.6L1458.9 230.0L1459.1 231.4L1459.4 232.9L1459.6 233.5L1459.6 234.2L1459.9 235.3L1460.2 236.6L1460.2 237.3L1460.4 238.3L1460.7 239.6L1460.9 240.7L1461.2 241.9L1461.4 243.6L1461.6 244.3L1461.7 244.4L1462.0 246.2L1462.2 247.1L1462.3 247.6L1462.5 248.3L1462.7 249.9L1463.0 250.8L1463.3 252.1L1463.5 252.8L1463.7 253.8L1463.8 254.0L1464.0 255.1L1464.3 255.8L1464.4 256.3L1464.5 256.5L1464.8 257.2L1465.1 257.9L1465.3 258.2L1465.6 258.9L1465.7 259.1L1465.8 259.4L1466.1 259.6L1466.3 260.5L1466.4 260.6L1466.6 260.9L1467.1 261.7L1467.8 262.9L1468.5 263.9L1469.2 264.9L1469.9 266.0L1470.6 266.8L1471.3 267.5L1471.9 268.7L1472.6 268.9L1473.3 269.9L1474.0 270.6L1474.7 271.1L1475.4 271.8L1476.1 272.7L1476.8 273.1L1477.4 273.5L1478.1 274.2L1478.8 274.8L1479.5 275.8L1480.2 276.5L1480.9 277.0L1481.6 277.7L1482.3 278.6L1483.0 279.5L1483.6 280.3L1484.3 280.5L1485.0 281.7L1485.7 282.0L1486.4 282.6L1487.1 282.9L1487.8 284.1L1488.5 284.8L1489.1 285.3L1489.8 286.0L1490.5 286.5L1491.2 287.2L1491.9 288.1L1492.6 289.0L1493.3 289.3L1494.0 290.1L1494.7 290.4L1495.3 291.5L1496.0 292.0L1496.7 292.8L1497.4 293.5L1498.1 293.8L1498.8 294.8L1499.5 295.6L1500.2 296.1L1500.8 297.1L1501.5 297.8L1502.2 298.5L1502.9 298.9L1503.6 299.9L1504.3 300.5L1505.0 301.2L1505.7 302.2L1506.4 302.9L1507.0 303.9L1507.7 304.3L1508.4 305.1L1509.1 306.0L1509.8 306.5L1510.5 307.7L1511.2 308.1L1511.9 309.2L1512.6 309.9L1513.2 310.5L1513.9 311.1L1514.6 312.2L1515.3 313.0L1516.0 313.8L1516.7 314.0L1517.4 315.0L1518.1 315.7L1518.7 316.2L1519.4 317.2L1520.1 318.3L1520.8 318.7L1521.5 319.6L1522.2 319.8L1522.9 321.1L1523.6 321.6L1524.3 322.6L1524.9 323.4L1525.6 324.2L1526.3 325.1L1527.0 326.2L1527.7 327.3L1528.4 328.2L1529.1 329.4L1529.8 330.5L1530.4 331.7L1531.1 333.1L1531.8 334.5L1532.5 336.2L1533.2 337.6L1533.9 339.7L1534.6 341.8L1535.3 343.9L1536.0 346.7L1536.6 349.3L1537.3 351.7L1538.0 354.1L1538.7 355.9L1539.4 357.0L1540.1 358.0L1540.6 358.6L1540.8 219.2L1541.0 216.2L1541.3 213.8L1541.5 212.6L1541.5 212.3L1541.8 212.0L1542.1 212.4L1542.1 212.8L1542.3 213.3L1542.6 214.4L1542.8 215.7L1543.1 217.0L1543.4 218.5L1543.5 219.6L1543.6 220.2L1543.9 222.2L1544.1 224.5L1544.2 224.6L1544.4 225.9L1544.6 227.9L1544.9 229.8L1545.2 231.6L1545.4 233.1L1545.6 234.5L1545.7 234.8L1545.9 236.3L1546.2 237.6L1546.3 238.2L1546.4 239.1L1546.7 240.5L1547.0 241.6L1547.2 243.0L1547.5 244.5L1547.7 245.3L1547.7 245.8L1548.0 246.7L1548.3 248.2L1548.3 248.6L1548.5 249.6L1548.8 250.8L1549.0 251.6L1549.3 252.9L1549.5 253.9L1549.7 254.3L1549.8 254.6L1550.1 255.8L1550.3 256.7L1550.4 257.0L1550.6 257.6L1550.8 257.9L1551.1 259.0L1551.4 259.4L1551.6 260.2L1551.8 260.5L1551.9 260.4L1552.1 260.9L1552.4 261.4L1552.5 261.7L1552.6 262.1L1553.2 263.0L1553.8 264.2L1554.5 265.1L1555.2 266.1L1555.9 267.2L1556.6 268.3L1557.3 269.3L1558.0 269.9L1558.7 270.8L1559.4 271.8L1560.0 272.0L1560.7 272.9L1561.4 273.7L1562.1 274.4L1562.8 275.1L1563.5 275.5L1564.2 276.4L1564.9 277.0L1565.5 277.6L1566.2 278.1L1566.9 279.1L1567.6 279.9L1568.3 280.7L1569.0 281.1L1569.7 281.8L1570.4 282.7L1571.1 283.1L1571.7 283.9L1572.4 284.7L1573.1 285.2L1573.8 285.5L1574.5 286.0L1575.2 286.7L1575.9 287.4L1576.6 288.0L1577.2 288.4L1577.9 289.0L1578.6 289.8L1579.3 290.0L1580.0 290.8L1580.7 291.2L1581.4 291.8L1582.1 292.3L1582.8 292.9L1583.4 293.6L1584.1 294.5L1584.8 295.1L1585.5 295.4L1586.2 296.2L1586.9 297.2L1587.6 298.0L1588.3 298.3L1588.9 298.8L1589.6 299.8L1590.3 300.8L1591.0 301.6L1591.7 303.0L1592.4 303.7L1593.1 304.4L1593.8 305.5L1594.5 307.1L1595.1 307.7L1595.8 309.0L1596.5 310.2L1597.2 311.6L1597.9 312.7L1598.6 314.1L1599.3 315.1L1600.0 316.3L1600.7 317.7L1601.3 318.7L1602.0 320.1L1602.7 321.1L1603.4 322.4L1604.1 324.2L1604.8 325.1L1605.5 326.3L1606.2 327.8L1606.8 329.0L1607.5 330.2L1608.2 331.4L1608.9 332.2L1609.6 332.9L1610.3 333.8L1611.0 334.4L1611.7 335.1L1612.4 335.6L1613.0 336.3L1613.7 336.7L1614.4 337.0L1615.1 337.7L1615.8 338.4L1616.5 339.2L1617.2 340.0L1617.9 340.6L1618.5 341.5L1619.2 343.0L1619.9 343.9L1620.6 345.4L1621.3 346.9L1622.0 348.8L1622.7 350.2L1623.4 352.4L1624.1 355.0L1624.7 357.6L1625.4 360.3L1626.1 363.6L1626.8 367.0" stroke="#a65628" stroke-width="1.7" fill="none" stroke-linejoin="round"/>
<path d="M1368.7 174V473.4H1627" stroke="#222" stroke-width="1.1" fill="none"/>
<path d="M1368.7 473V477M1454.8 473V477M1540.8 473V477M1626.8 473V477" stroke="#222" stroke-width="1" fill="none"/>
<g font-family="Liberation Sans,sans-serif" font-size="14" fill="#2a2a2a">
<text x="1361" y="179.1" text-anchor="end">1</text>
<text x="1361" y="228.9" text-anchor="end">0.1</text>
<text x="1361" y="278.8" text-anchor="end">0.01</text>
<text x="1361" y="328.6" text-anchor="end">0.001</text>
<text x="1361" y="378.5" text-anchor="end">0.0001</text>
<text x="1361" y="428.4" text-anchor="end">1e-5</text>
<text x="1361" y="478.2" text-anchor="end">1e-6</text>
<text x="1368.7" y="490.5" text-anchor="middle">0</text>
<text x="1454.7" y="490.5" text-anchor="middle">500</text>
<text x="1540.8" y="490.5" text-anchor="middle">1000</text>
<text x="1626.8" y="490.5" text-anchor="middle">1500</text>
</g>
<g font-family="Liberation Sans,sans-serif" font-weight="bold" fill="#111">
<text x="1498.5" y="170" font-size="19.5" text-anchor="middle">CFD Residuals</text>
<text x="1498.5" y="510" font-size="18" text-anchor="middle">iterations</text>
<text transform="translate(1311.5 324) rotate(-90)" font-size="18" text-anchor="middle">residuals</text>
</g>
<rect x="1535.5" y="173.5" width="92" height="125" fill="#fff" stroke="#444" stroke-width="1"/>
<g font-family="Liberation Sans,sans-serif" font-weight="bold" font-size="15" fill="#111" letter-spacing=".6">
<path d="M1540.7 185.4H1561.4" stroke="#000000" stroke-width="1.8"/>
<text x="1565.5" y="190.4">k</text>
<path d="M1540.7 205.5H1561.4" stroke="#e41a1c" stroke-width="1.8"/>
<text x="1565.5" y="210.5">omega</text>
<path d="M1540.7 225.6H1561.4" stroke="#377eb8" stroke-width="1.8"/>
<text x="1565.5" y="230.6">p</text>
<path d="M1540.7 245.8H1561.4" stroke="#984ea3" stroke-width="1.8"/>
<text x="1565.5" y="250.8">Ux</text>
<path d="M1540.7 265.9H1561.4" stroke="#ff7f00" stroke-width="1.8"/>
<text x="1565.5" y="270.9">Uy</text>
<path d="M1540.7 286.0H1561.4" stroke="#a65628" stroke-width="1.8"/>
<text x="1565.5" y="291.0">Uz</text>
</g>
</svg>
<div class="a" style="left:1289px;top:553px;width:361px;height:375px;background:#fff;border:2px solid #0a0aff"></div>
<svg style="left:1291px;top:555px" width="357" height="371" viewBox="1291 555 357 371">
<path d="M1361 602.0H1627M1361 650.3H1627M1361 698.6H1627M1361 746.9H1627M1361 795.2H1627M1361 843.5H1627" stroke="#efefef" stroke-width="1" fill="none"/>
<path d="M1355 602.0H1361M1355 650.3H1361M1355 698.6H1361M1355 746.9H1361M1355 795.2H1361M1355 843.5H1361M1448.9 878V883M1541.1 878V883" stroke="#222" stroke-width="1" fill="none"/>
<path d="M1363.6 580V878.3M1364.3 580V791.4L1365.2 690L1366 640L1367.7 606.1L1369 613L1370.5 619.5L1372.4 621.1L1376 620.3L1385 619.3L1397.8 618.9L1420 618.6L1449 618.3V878.3M1449.5 580V878.3M1451.4 580V878.3M1453.3 580V878.3M1455.7 580V878.3M1459.3 815.8L1459.8 667.2L1461.5 678L1464 690.7L1466 687L1469 683.5L1473 681.3L1480 680L1488 678.9L1495 679.3L1510 678.8L1525 678.3L1541.3 677.7V878.3M1541.6 580V878.3M1544.5 580V878.3M1548.8 580V878.3M1552.5 878.3L1552.9 806.4L1555 845L1556.6 866L1558 870.4L1559.5 869.5L1562 863.5L1565.1 859.1L1570 855L1575 851.8L1580.2 849.7L1584 850.5L1589.6 851.9L1596 851.3L1602.7 851.2L1609 849.2L1615.9 847.4L1621 847.8L1626.8 848.4" stroke="#000" stroke-width="1.35" fill="none" stroke-linejoin="round"/>
<path d="M1360.8 580V878.3H1627" stroke="#222" stroke-width="1.1" fill="none"/>
<g font-family="Liberation Sans,sans-serif" font-size="14" fill="#2a2a2a">
<text x="1353" y="607.0" text-anchor="end">1</text>
<text x="1353" y="655.3" text-anchor="end">0.995</text>
<text x="1353" y="703.6" text-anchor="end">0.99</text>
<text x="1353" y="751.9" text-anchor="end">0.985</text>
<text x="1353" y="800.2" text-anchor="end">0.98</text>
<text x="1353" y="848.5" text-anchor="end">0.975</text>
<text x="1448.9" y="895.5" text-anchor="middle">500</text><text x="1541.1" y="895.5" text-anchor="middle">1000</text>
</g>
<g font-family="Liberation Sans,sans-serif" font-weight="bold" fill="#111">
<text x="1494.5" y="576.5" font-size="19.5" text-anchor="middle" letter-spacing=".37">CFD Quantity monitor</text>
<text x="1494.5" y="915" font-size="18" text-anchor="middle">iterations</text>
<text transform="translate(1311 728) rotate(-90)" font-size="18" text-anchor="middle">quantity</text>
</g>
<rect x="1487.5" y="579.5" width="140" height="25" fill="#fff" stroke="#444" stroke-width="1"/>
<path d="M1493.3 591.6H1514.4" stroke="#000" stroke-width="1.8"/>
<text x="1520" y="597" font-family="Liberation Sans,sans-serif" font-weight="bold" font-size="14.5" fill="#111" letter-spacing=".45">1_PTotRatio(-)</text>
</svg>
<svg style="left:432px;top:119px" width="1572" height="440" viewBox="432 119 1572 440">
<defs><linearGradient id="vbg" x1="0" y1="0" x2="0" y2="1"><stop offset="0" stop-color="#fbfaf9"/><stop offset="1" stop-color="#e9e5e1"/></linearGradient></defs>
<g transform="translate(437.0 124.0)"><path d="M1.500 5.500h3l1-1.800h6l1 1.800h3.500v9h-14.500z" fill="#c4c6c4" stroke="#8a8c8a" stroke-width=".9"/><circle cx="8.800" cy="9.800" r="3.300" fill="#bfe0f8" stroke="#7a9ab0" stroke-width="1.200"/><circle cx="8.800" cy="9.800" r="1.500" fill="#eaf6ff"/><rect x="2.800" y="6.300" width="1.300" height="1.300" fill="#e03a2a"/><path d="M1 15l1.800-5 1.500 1.800c2.500-2 6-1.500 7 1 .7 2-.3 3.800-2 4.700.8-1.800.3-3.200-.9-3.700-1.200-.5-2.300-.1-3.100.6l1.500 1.700z" fill="#e8202a" stroke="#b01820" stroke-width=".4"/></g>
<g transform="translate(463.0 124.0)"><path d="M1.500 5.500h3l1-1.800h6l1 1.800h3.500v9h-14.500z" fill="#dedbd7" stroke="#c4c1bd" stroke-width=".9"/><circle cx="8.800" cy="9.800" r="3.300" fill="#e9e7e4" stroke="#c4c1bd" stroke-width="1.200"/><circle cx="8.800" cy="9.800" r="1.500" fill="#eaf6ff"/><path d="M17 16l-1.800-5-1.500 1.800c-2.500-2-6-1.500-7 1-.7 2 .3 3.800 2 4.700-.8-1.800-.3-3.200.9-3.700 1.200-.5 2.300-.1 3.100.6l-1.500 1.700z" fill="#d2cfcb" stroke="#bdbab5" stroke-width=".4"/></g>
<g transform="translate(479.5 124.0)"><path d="M9 1v16" stroke="#cfcac4" stroke-width="1"/><path d="M10 1v16" stroke="#fbfaf9" stroke-width="1"/></g>
<g transform="translate(495.0 124.0)"><path d="M.5 4V.500h3.500M14 .500h3.500V4M17.500 14v3.500H14M4 17.500H.500V14" fill="none" stroke="#777" stroke-width=".9" stroke-dasharray="2.500 1.500"/><g transform="translate(0.200 -.5)"><path d="M1.500 5.500h3l1-1.800h6l1 1.800h3.500v9h-14.500z" fill="#c4c6c4" stroke="#8a8c8a" stroke-width=".9"/><circle cx="8.800" cy="9.800" r="3.300" fill="#bfe0f8" stroke="#7a9ab0" stroke-width="1.200"/><circle cx="8.800" cy="9.800" r="1.500" fill="#eaf6ff"/><rect x="2.800" y="6.300" width="1.300" height="1.300" fill="#e03a2a"/></g></g>
<g transform="translate(512.0 124.0)"><path d="M9 1v16" stroke="#cfcac4" stroke-width="1"/><path d="M10 1v16" stroke="#fbfaf9" stroke-width="1"/></g>
<g transform="translate(553.0 124.0)"><path d="M1.500 5.500h3l1-1.800h6l1 1.800h3.500v9h-14.500z" fill="#dedbd7" stroke="#c4c1bd" stroke-width=".9"/><circle cx="8.800" cy="9.800" r="3.300" fill="#e9e7e4" stroke="#c4c1bd" stroke-width="1.200"/><circle cx="8.800" cy="9.800" r="1.500" fill="#eaf6ff"/><path d="M10 10l6.500 7" stroke="#bcb9b4" stroke-width="2.400"/><path d="M10 10l6.500 7" stroke="#e4e1dd" stroke-width="1"/></g>
<g transform="translate(570.0 124.0)"><path d="M9 1v16" stroke="#cfcac4" stroke-width="1"/><path d="M10 1v16" stroke="#fbfaf9" stroke-width="1"/></g>
<g transform="translate(585.0 124.0)"><rect x="1.5" y="1.5" width="15" height="15" fill="none" stroke="#777" stroke-width=".9" stroke-dasharray="2.500 1.800"/><path d="M9 4.500v9M4.500 9h9" stroke="#7aa565" stroke-width="3.400"/><path d="M9 5.200v7.600M5.200 9h7.600" stroke="#9bd07f" stroke-width="2"/></g>
<g transform="translate(611.0 124.0)"><rect x="1.5" y="1.5" width="15" height="15" fill="none" stroke="#777" stroke-width=".9" stroke-dasharray="2.500 1.800"/><path d="M4.800 9h8.400" stroke="#e8202a" stroke-width="2.600"/></g>
<g transform="translate(637.0 124.0)"><rect x="1.5" y="1.5" width="15" height="15" fill="none" stroke="#777" stroke-width=".9" stroke-dasharray="2.500 1.800"/><path d="M7.500 2.500v6M4.500 5.500h6" stroke="#7aa565" stroke-width="2.400"/><path d="M7.500 3.200v4.600M5.200 5.500h4.600" stroke="#9bd07f" stroke-width="1.200"/><path d="M4 12.500h7" stroke="#e8202a" stroke-width="2"/><path d="M12 12l5 5.500-1.800.1-.9 1.600z" fill="#666" stroke="#666" stroke-width=".4"/><path d="M14.5 15l2.500 3.500" stroke="#666" stroke-width="1.300"/></g>
<g transform="translate(654.0 124.0)"><path d="M9 1v16" stroke="#cfcac4" stroke-width="1"/><path d="M10 1v16" stroke="#fbfaf9" stroke-width="1"/></g>
<g transform="translate(669.0 124.0)"><rect x="1.5" y="1.5" width="15" height="15" fill="none" stroke="#777" stroke-width=".9" stroke-dasharray="2.500 1.800"/><path d="M9 4l5.500 9.500h-11z" fill="#9bd07f" stroke="#7aa565" stroke-width=".9"/><path d="M12 12l5 5.500-1.800.1-.9 1.600z" fill="#666" stroke="#666" stroke-width=".4"/><path d="M14.5 15l2.500 3.500" stroke="#666" stroke-width="1.300"/></g>
<g transform="translate(695.0 124.0)"><rect x="1.5" y="1.5" width="15" height="15" fill="none" stroke="#777" stroke-width=".9" stroke-dasharray="2.500 1.800"/><path d="M9 4l5 9h-10z" fill="none" stroke="#bbb" stroke-width=".8"/><circle cx="9" cy="4" r="1.500" fill="#c8402a"/><circle cx="4" cy="13" r="1.500" fill="#c8402a"/><path d="M12 12l5 5.500-1.800.1-.9 1.600z" fill="#666" stroke="#666" stroke-width=".4"/><path d="M14.5 15l2.500 3.500" stroke="#666" stroke-width="1.300"/></g>
<g transform="translate(721.0 124.0)"><path d="M1.500 9V2.500h8M12 14.500H1.500v-3" fill="none" stroke="#888" stroke-width=".8" stroke-dasharray="2.500 1.800"/><path d="M4 6l5-3.500h5l3 1.500v6.500l-8 1.500-5-.5z" fill="#9bd07f" stroke="#6a9a55" stroke-width=".9"/><path d="M4 6l5 .5 8-2M9 6.500V12" fill="none" stroke="#6a9a55" stroke-width=".7"/><path d="M9.5 12l5 5.500-1.800.1-.9 1.600z" fill="#666" stroke="#666" stroke-width=".4"/><path d="M12.0 15l2.500 3.500" stroke="#666" stroke-width="1.300"/></g>
<g transform="translate(747.5 124.0)"><path d="M1.500 2.500h9M1.500 2.500v11h7" fill="none" stroke="#999" stroke-width=".8" stroke-dasharray="2.500 1.800"/><path d="M4 6.500l6-3.500 7 1.500v7l-7 .5-6-1z M4 6.500l6 0 7-2M10 6.500v5.500" fill="none" stroke="#bbb" stroke-width=".7" stroke-dasharray="1.500 1"/><rect x="3.2" y="5.7" width="1.600" height="1.600" fill="#e84a3a"/><rect x="3.2" y="10.2" width="1.600" height="1.600" fill="#e84a3a"/><rect x="9.2" y="2.2" width="1.600" height="1.600" fill="#e84a3a"/><rect x="16.2" y="3.7" width="1.600" height="1.600" fill="#e84a3a"/><rect x="16.2" y="10.7" width="1.600" height="1.600" fill="#e84a3a"/><rect x="6.2" y="5.7" width="1.600" height="1.600" fill="#e84a3a"/><rect x="6.2" y="10.7" width="1.600" height="1.600" fill="#e84a3a"/><path d="M10 12l5 5.500-1.800.1-.9 1.600z" fill="#666" stroke="#666" stroke-width=".4"/><path d="M12.5 15l2.500 3.500" stroke="#666" stroke-width="1.300"/></g>
<g transform="translate(773.0 124.0)"><path d="M1.500 3l7-1.500 8 .5-4 7 4.500 3-7 5-5-4z" fill="none" stroke="#888" stroke-width=".8" stroke-dasharray="2.500 1.800"/><path d="M10 5v9l-7-4.500z" fill="#9bd07f" stroke="#7aa565" stroke-width=".8"/><path d="M10 9l5-5" stroke="#999" stroke-width=".8"/></g>
<g transform="translate(798.7 124.0)"><path d="M1.500 3l7-1.500 7 .5-3 6 5 3-7 6-6-4z" fill="none" stroke="#888" stroke-width=".8" stroke-dasharray="2.500 1.800"/><circle cx="4.5" cy="4.5" r="1.400" fill="#c8402a"/><circle cx="11.5" cy="4.5" r="1.400" fill="#c8402a"/><circle cx="8" cy="7.5" r="1.400" fill="#c8402a"/><circle cx="4.5" cy="9.5" r="1.400" fill="#c8402a"/><circle cx="8" cy="12" r="1.400" fill="#c8402a"/><circle cx="12.5" cy="13" r="1.400" fill="#c8402a"/></g>
<g transform="translate(825.0 124.0)"><rect x="1.5" y="1.5" width="15" height="15" fill="none" stroke="#777" stroke-width=".9" stroke-dasharray="2.500 1.800"/><circle cx="6" cy="5.500" r="2.300" fill="#2f8fd0"/><circle cx="6" cy="12.500" r="2.300" fill="#2f8fd0"/><circle cx="12.500" cy="9.500" r="2.800" fill="#9bd07f" stroke="#7aa565" stroke-width=".8"/><path d="M12.5 12l5 5.500-1.800.1-.9 1.600z" fill="#666" stroke="#666" stroke-width=".4"/><path d="M15.0 15l2.500 3.500" stroke="#666" stroke-width="1.300"/></g>
<g transform="translate(854.0 124.0)"><circle cx="6" cy="7" r="2.200" fill="#d6d3cf" stroke="#bcb9b4" stroke-width=".8" stroke-dasharray="1.200 .8"/><path d="M9 10l5 5.500-1.800.1-.9 1.600z" fill="#bcb9b4" stroke="#bcb9b4" stroke-width=".4"/><path d="M11.5 13l2.500 3.500" stroke="#bcb9b4" stroke-width="1.300"/></g>
<g transform="translate(878.0 124.0)"><path d="M2 6l5-3.500h8v9l-5 4h-8z" fill="#d6d3cf" stroke="#bcb9b4" stroke-width=".9"/><path d="M2 6h8l5-3.500M10 6v9.500" fill="none" stroke="#bcb9b4" stroke-width=".8"/><path d="M11.5 10.5l5 5.500-1.800.1-.9 1.600z" fill="#bcb9b4" stroke="#bcb9b4" stroke-width=".4"/><path d="M14.0 13.5l2.500 3.500" stroke="#bcb9b4" stroke-width="1.300"/></g>
<g transform="translate(904.0 124.0)"><path d="M9 4l5.500 9.500h-11z" fill="#9bd07f" stroke="#7aa565" stroke-width=".9"/><path d="M12 12l5 5.500-1.800.1-.9 1.600z" fill="#666" stroke="#666" stroke-width=".4"/><path d="M14.5 15l2.500 3.500" stroke="#666" stroke-width="1.300"/></g>
<g transform="translate(930.0 124.0)"><path d="M9 4l5 9h-10z" fill="none" stroke="#bbb" stroke-width=".8"/><circle cx="9" cy="4" r="1.500" fill="#c8402a"/><circle cx="4" cy="13" r="1.500" fill="#c8402a"/><path d="M12 12l5 5.500-1.800.1-.9 1.600z" fill="#666" stroke="#666" stroke-width=".4"/><path d="M14.5 15l2.500 3.500" stroke="#666" stroke-width="1.300"/></g>
<g transform="translate(955.5 124.0)"><circle cx="5" cy="14" r="2" fill="#d8402a"/><text x="11.500" y="13" font-family="DejaVu Sans,sans-serif" font-size="15" fill="#666" text-anchor="middle">?</text></g>
<g transform="translate(980.5 124.0)"><path d="M6 8.500l4 7h-8z" fill="#9bd07f" stroke="#7aa565" stroke-width=".8"/><text x="12" y="12" font-family="DejaVu Sans,sans-serif" font-size="15" fill="#666" text-anchor="middle">?</text></g>
<g transform="translate(1007.0 124.0)"><path d="M9 2.500v13M2.500 9h13" stroke="#bcb9b4" stroke-width="3.600"/></g>
<text x="536.500" y="138" font-family="Liberation Sans,sans-serif" font-weight="bold" font-size="13.500" fill="#6a6a55" text-anchor="middle">3D</text><text x="1059" y="138" font-family="DejaVu Sans,sans-serif" font-size="13" font-weight="bold" fill="#111" text-anchor="middle">»</text><rect x="1179.0" y="121.5" width="24" height="24" rx="3" fill="url(#vbg)" stroke="#b4aea6"/><rect x="1184.0" y="126.5" width="14" height="14" fill="#cdd4ee" stroke="#8a93b8" stroke-width=".9"/><path d="M1191.0 126.5v14" stroke="#8a93b8" stroke-width=".9"/><rect x="1206.0" y="121.5" width="24" height="24" rx="3" fill="url(#vbg)" stroke="#b4aea6"/><rect x="1211.0" y="126.5" width="14" height="14" fill="#cdd4ee" stroke="#8a93b8" stroke-width=".9"/><path d="M1211.0 133.5h14" stroke="#8a93b8" stroke-width=".9"/><rect x="1233.5" y="121.5" width="24" height="24" rx="3" fill="url(#vbg)" stroke="#b4aea6"/><rect x="1241.0" y="129.0" width="9" height="8" fill="#fff" stroke="#111" stroke-width="1"/><path d="M1241.0 129.7h9" stroke="#111" stroke-width="1.800"/><rect x="1260.5" y="121.5" width="24" height="24" rx="3" fill="url(#vbg)" stroke="#b4aea6"/><rect x="1267.0" y="128.0" width="11" height="11" rx="2" fill="none" stroke="#444" stroke-width="1"/><path d="M1269.5 130.5l6 6m0-6l-6 6" stroke="#333" stroke-width="1.800"/><g transform="translate(1293.0 124.0)"><path d="M.5 4V.500h3.500M14 .500h3.500V4M17.500 14v3.500H14M4 17.500H.500V14" fill="none" stroke="#777" stroke-width=".9" stroke-dasharray="2.500 1.500"/><g transform="translate(0.200 -.5)"><path d="M1.500 5.500h3l1-1.800h6l1 1.800h3.500v9h-14.500z" fill="#c4c6c4" stroke="#8a8c8a" stroke-width=".9"/><circle cx="8.800" cy="9.800" r="3.300" fill="#bfe0f8" stroke="#7a9ab0" stroke-width="1.200"/><circle cx="8.800" cy="9.800" r="1.500" fill="#eaf6ff"/><rect x="2.800" y="6.300" width="1.300" height="1.300" fill="#e03a2a"/></g></g>
<g transform="translate(1309.0 124.0)"><path d="M9 1v16" stroke="#cfcac4" stroke-width="1"/><path d="M10 1v16" stroke="#fbfaf9" stroke-width="1"/></g>
<g transform="translate(1325.0 124.0)"><rect x="1.5" y="1.5" width="15" height="15" fill="none" stroke="#777" stroke-width=".9" stroke-dasharray="2.500 1.800"/><path d="M9 4.500v9M4.500 9h9" stroke="#7aa565" stroke-width="3.400"/><path d="M9 5.200v7.600M5.200 9h7.600" stroke="#9bd07f" stroke-width="2"/></g>
<g transform="translate(1351.0 124.0)"><rect x="1.5" y="1.5" width="15" height="15" fill="none" stroke="#777" stroke-width=".9" stroke-dasharray="2.500 1.800"/><path d="M4.800 9h8.400" stroke="#e8202a" stroke-width="2.600"/></g>
<g transform="translate(1377.0 124.0)"><rect x="1.5" y="1.5" width="15" height="15" fill="none" stroke="#777" stroke-width=".9" stroke-dasharray="2.500 1.800"/><path d="M7.500 2.500v6M4.500 5.500h6" stroke="#7aa565" stroke-width="2.400"/><path d="M7.500 3.200v4.600M5.200 5.500h4.600" stroke="#9bd07f" stroke-width="1.200"/><path d="M4 12.500h7" stroke="#e8202a" stroke-width="2"/><path d="M12 12l5 5.500-1.800.1-.9 1.600z" fill="#666" stroke="#666" stroke-width=".4"/><path d="M14.5 15l2.500 3.500" stroke="#666" stroke-width="1.300"/></g>
<g transform="translate(1393.5 124.0)"><path d="M9 1v16" stroke="#cfcac4" stroke-width="1"/><path d="M10 1v16" stroke="#fbfaf9" stroke-width="1"/></g>
<text x="1421.500" y="138" font-family="DejaVu Sans,sans-serif" font-size="13" font-weight="bold" fill="#111" text-anchor="middle">»</text><rect x="1544.0" y="121.5" width="24" height="24" rx="3" fill="url(#vbg)" stroke="#b4aea6"/><rect x="1549.0" y="126.5" width="14" height="14" fill="#cdd4ee" stroke="#8a93b8" stroke-width=".9"/><path d="M1556.0 126.5v14" stroke="#8a93b8" stroke-width=".9"/><rect x="1571.0" y="121.5" width="24" height="24" rx="3" fill="url(#vbg)" stroke="#b4aea6"/><rect x="1576.0" y="126.5" width="14" height="14" fill="#cdd4ee" stroke="#8a93b8" stroke-width=".9"/><path d="M1576.0 133.5h14" stroke="#8a93b8" stroke-width=".9"/><rect x="1598.5" y="121.5" width="24" height="24" rx="3" fill="url(#vbg)" stroke="#b4aea6"/><rect x="1606.0" y="129.0" width="9" height="8" fill="#fff" stroke="#111" stroke-width="1"/><path d="M1606.0 129.7h9" stroke="#111" stroke-width="1.800"/><rect x="1625.5" y="121.5" width="24" height="24" rx="3" fill="url(#vbg)" stroke="#b4aea6"/><rect x="1632.0" y="128.0" width="11" height="11" rx="2" fill="none" stroke="#444" stroke-width="1"/><path d="M1634.5 130.5l6 6m0-6l-6 6" stroke="#333" stroke-width="1.800"/><rect x="1896.0" y="121.5" width="24" height="24" rx="3" fill="url(#vbg)" stroke="#b4aea6"/><rect x="1901.0" y="126.5" width="14" height="14" fill="#cdd4ee" stroke="#8a93b8" stroke-width=".9"/><path d="M1908.0 126.5v14" stroke="#8a93b8" stroke-width=".9"/><rect x="1923.0" y="121.5" width="24" height="24" rx="3" fill="url(#vbg)" stroke="#b4aea6"/><rect x="1928.0" y="126.5" width="14" height="14" fill="#cdd4ee" stroke="#8a93b8" stroke-width=".9"/><path d="M1928.0 133.5h14" stroke="#8a93b8" stroke-width=".9"/><rect x="1950.5" y="121.5" width="24" height="24" rx="3" fill="url(#vbg)" stroke="#b4aea6"/><rect x="1958.0" y="129.0" width="9" height="8" fill="#fff" stroke="#111" stroke-width="1"/><path d="M1958.0 129.7h9" stroke="#111" stroke-width="1.800"/><rect x="1977.5" y="121.5" width="24" height="24" rx="3" fill="url(#vbg)" stroke="#b4aea6"/><rect x="1984.0" y="128.0" width="11" height="11" rx="2" fill="none" stroke="#444" stroke-width="1"/><path d="M1986.5 130.5l6 6m0-6l-6 6" stroke="#333" stroke-width="1.800"/><g transform="translate(1293.0 530.5)"><path d="M.5 4V.500h3.500M14 .500h3.500V4M17.500 14v3.500H14M4 17.500H.500V14" fill="none" stroke="#777" stroke-width=".9" stroke-dasharray="2.500 1.500"/><g transform="translate(0.200 -.5)"><path d="M1.500 5.500h3l1-1.800h6l1 1.800h3.500v9h-14.500z" fill="#c4c6c4" stroke="#8a8c8a" stroke-width=".9"/><circle cx="8.800" cy="9.800" r="3.300" fill="#bfe0f8" stroke="#7a9ab0" stroke-width="1.200"/><circle cx="8.800" cy="9.800" r="1.500" fill="#eaf6ff"/><rect x="2.800" y="6.300" width="1.300" height="1.300" fill="#e03a2a"/></g></g>
<g transform="translate(1309.0 530.5)"><path d="M9 1v16" stroke="#cfcac4" stroke-width="1"/><path d="M10 1v16" stroke="#fbfaf9" stroke-width="1"/></g>
<g transform="translate(1325.0 530.5)"><rect x="1.5" y="1.5" width="15" height="15" fill="none" stroke="#777" stroke-width=".9" stroke-dasharray="2.500 1.800"/><path d="M9 4.500v9M4.500 9h9" stroke="#7aa565" stroke-width="3.400"/><path d="M9 5.200v7.600M5.200 9h7.600" stroke="#9bd07f" stroke-width="2"/></g>
<g transform="translate(1351.0 530.5)"><rect x="1.5" y="1.5" width="15" height="15" fill="none" stroke="#777" stroke-width=".9" stroke-dasharray="2.500 1.800"/><path d="M4.800 9h8.400" stroke="#e8202a" stroke-width="2.600"/></g>
<g transform="translate(1377.0 530.5)"><rect x="1.5" y="1.5" width="15" height="15" fill="none" stroke="#777" stroke-width=".9" stroke-dasharray="2.500 1.800"/><path d="M7.500 2.500v6M4.500 5.500h6" stroke="#7aa565" stroke-width="2.400"/><path d="M7.500 3.200v4.600M5.200 5.500h4.600" stroke="#9bd07f" stroke-width="1.200"/><path d="M4 12.500h7" stroke="#e8202a" stroke-width="2"/><path d="M12 12l5 5.500-1.800.1-.9 1.600z" fill="#666" stroke="#666" stroke-width=".4"/><path d="M14.5 15l2.500 3.500" stroke="#666" stroke-width="1.300"/></g>
<g transform="translate(1393.5 530.5)"><path d="M9 1v16" stroke="#cfcac4" stroke-width="1"/><path d="M10 1v16" stroke="#fbfaf9" stroke-width="1"/></g>
<text x="1414.500" y="544" font-family="DejaVu Sans,sans-serif" font-size="13" font-weight="bold" fill="#111" text-anchor="middle">»</text><rect x="1544.0" y="527.5" width="24" height="24" rx="3" fill="url(#vbg)" stroke="#b4aea6"/><rect x="1549.0" y="532.5" width="14" height="14" fill="#cdd4ee" stroke="#8a93b8" stroke-width=".9"/><path d="M1556.0 532.5v14" stroke="#8a93b8" stroke-width=".9"/><rect x="1571.0" y="527.5" width="24" height="24" rx="3" fill="url(#vbg)" stroke="#b4aea6"/><rect x="1576.0" y="532.5" width="14" height="14" fill="#cdd4ee" stroke="#8a93b8" stroke-width=".9"/><path d="M1576.0 539.5h14" stroke="#8a93b8" stroke-width=".9"/><rect x="1598.5" y="527.5" width="24" height="24" rx="3" fill="url(#vbg)" stroke="#b4aea6"/><rect x="1606.0" y="535.0" width="9" height="8" fill="#fff" stroke="#111" stroke-width="1"/><path d="M1606.0 535.7h9" stroke="#111" stroke-width="1.800"/><rect x="1625.5" y="527.5" width="24" height="24" rx="3" fill="url(#vbg)" stroke="#b4aea6"/><rect x="1632.0" y="534.0" width="11" height="11" rx="2" fill="none" stroke="#444" stroke-width="1"/><path d="M1634.5 536.5l6 6m0-6l-6 6" stroke="#333" stroke-width="1.800"/><rect x="1896.0" y="527.5" width="24" height="24" rx="3" fill="url(#vbg)" stroke="#b4aea6"/><rect x="1901.0" y="532.5" width="14" height="14" fill="#cdd4ee" stroke="#8a93b8" stroke-width=".9"/><path d="M1908.0 532.5v14" stroke="#8a93b8" stroke-width=".9"/><rect x="1923.0" y="527.5" width="24" height="24" rx="3" fill="url(#vbg)" stroke="#b4aea6"/><rect x="1928.0" y="532.5" width="14" height="14" fill="#cdd4ee" stroke="#8a93b8" stroke-width=".9"/><path d="M1928.0 539.5h14" stroke="#8a93b8" stroke-width=".9"/><rect x="1950.5" y="527.5" width="24" height="24" rx="3" fill="url(#vbg)" stroke="#b4aea6"/><rect x="1958.0" y="535.0" width="9" height="8" fill="#fff" stroke="#111" stroke-width="1"/><path d="M1958.0 535.7h9" stroke="#111" stroke-width="1.800"/><rect x="1977.5" y="527.5" width="24" height="24" rx="3" fill="url(#vbg)" stroke="#b4aea6"/><rect x="1984.0" y="534.0" width="11" height="11" rx="2" fill="none" stroke="#444" stroke-width="1"/><path d="M1986.5 536.5l6 6m0-6l-6 6" stroke="#333" stroke-width="1.800"/></svg>

<!-- ===== HTML VIEW 1 ===== -->
<div class="btn" style="left:1666px;top:159px;width:133px;height:22px;line-height:19px;text-align:left;padding-left:5px">Steady-state repo</div>
<div class="btn" style="left:1805px;top:159px;width:82px;height:22px;line-height:19px">Save as PDF</div>
<div class="btn" style="left:1893px;top:159px;width:85px;height:22px;line-height:19px">Open as PDF</div>
<div class="a" style="left:1666px;top:187px;width:324px;height:324px;background:#fff"></div>
<div class="a hv" style="left:1666px;top:187px;width:303px;height:310px;overflow:hidden;background:linear-gradient(135deg,#1b232e 0%,#1d2631 30%,#1e2a36 100%)">
 <svg style="left:0;top:0" width="303" height="310" viewBox="1666 187 303 310"><defs><linearGradient id="hp1" x1="0" y1="0" x2="0" y2="1"><stop offset="0" stop-color="#7c7d7c"/><stop offset="1" stop-color="#b4b4ae"/></linearGradient><linearGradient id="bd1" x1="0" y1="0" x2="1" y2="1"><stop offset="0" stop-color="#29333f"/><stop offset="1" stop-color="#222c38"/></linearGradient><linearGradient id="bd2" x1="0" y1="0" x2="0" y2="1"><stop offset="0" stop-color="#343d49"/><stop offset="1" stop-color="#454c56"/></linearGradient></defs>
 <path d="M1666 280.7L1882 497H1666z" fill="url(#bd1)"/><path d="M1666 439.5L1723.5 497H1666z" fill="url(#bd2)"/>
 <path d="M1849 419C1872 470 1815 500 1727 503" fill="none" stroke="url(#hp1)" stroke-width="19" stroke-linecap="butt"/>
 <ellipse cx="1849.5" cy="421" rx="8.5" ry="12" transform="rotate(-28 1849.5 421)" fill="#8e8e8c"/></svg>
 <div class="a" style="left:0;top:-4px;width:285px;text-align:center;color:#fff;font-family:'Liberation Sans',sans-serif;font-size:28px;line-height:37.2px">Hi, this is steady-state<br>CFD simulation report<br>of:<br>pipe-tutorial</div>
 <div class="a" style="left:-10px;top:160px;width:305px;text-align:center;color:#d2d4d6;font-family:'Liberation Sans',sans-serif;font-size:16px;line-height:26.8px;white-space:nowrap">Created by <span style="border-bottom:1px dotted #aaa">TCFD</span><sup style="font-size:13px;line-height:0">®</sup> 20.09 on Tue Nov 10<br>11:42:31 2020</div>
</div>
<!-- scrollbars 1 -->
<div class="a" style="left:1976px;top:187px;width:14px;height:311px;background:#e3e0dc;border:1px solid #cfcac4"></div>
<div class="a" style="left:1977px;top:207px;width:12px;height:27px;background:linear-gradient(to right,#fdfcfb,#f1efec);border-top:1px solid #c4bfb8;border-bottom:1px solid #c4bfb8"></div>
<div class="a" style="left:1977px;top:188px;width:12px;height:13px;background:#f7f6f4"></div>
<div class="a" style="left:1977px;top:483px;width:12px;height:14px;background:#f7f6f4;border-top:1px solid #cfcac4"></div>
<div class="a" style="left:1666px;top:497px;width:311px;height:14px;background:#e3e0dc;border:1px solid #cfcac4;border-left:none"></div>
<div class="a" style="left:1666px;top:498px;width:13px;height:12px;background:#f6f4f2"></div>
<div class="a" style="left:1695px;top:498px;width:251px;height:12px;background:linear-gradient(#fdfcfb,#f1efec);border-left:1px solid #c4bfb8;border-right:1px solid #c4bfb8"></div>
<div class="a" style="left:1962px;top:498px;width:14px;height:12px;background:#f6f4f2;border-left:1px solid #cfcac4"></div>
<!-- ===== HTML VIEW 3 ===== -->
<div class="btn" style="left:1666px;top:565px;width:133px;height:22px;line-height:19px;text-align:left;padding-left:5px">TFEA report</div>
<div class="btn" style="left:1805px;top:565px;width:82px;height:22px;line-height:19px">Save as PDF</div>
<div class="btn" style="left:1893px;top:565px;width:85px;height:22px;line-height:19px">Open as PDF</div>
<div class="a" style="left:1666px;top:593px;width:324px;height:322px;background:#fff"></div>
<div class="a hv" style="left:1666px;top:593px;width:304px;height:309px;overflow:hidden;background:linear-gradient(135deg,#1b232e 0%,#1d2631 30%,#1e2a36 100%)">
 <svg style="left:0;top:0" width="304" height="309" viewBox="1666 593 304 309"><defs><linearGradient id="hp2" x1="0" y1="0" x2="1" y2="1"><stop offset="0" stop-color="#c4c4bc"/><stop offset="1" stop-color="#8c8c86"/></linearGradient></defs>
 <path d="M1666 660L1908 902H1666z" fill="url(#bd1)"/><path d="M1666 794.6L1773.4 902H1666z" fill="url(#bd2)"/>
 <path d="M1774 782C1776 842 1788 870 1806 872C1824 874 1839 852 1844.500 823" fill="none" stroke="url(#hp2)" stroke-width="16.500" stroke-linecap="butt"/>
 <ellipse cx="1774" cy="781" rx="8.200" ry="3.500" fill="#cfcfc8"/><ellipse cx="1844.500" cy="822" rx="8.200" ry="3.500" transform="rotate(12 1844.500 822)" fill="#a4a49e"/>
 <path d="M1683 891h8M1686 888v10" stroke="#5a8a3a" stroke-width="1"/></svg>
 <div class="a" style="left:0;top:-4px;width:288px;text-align:center;color:#fff;font-family:'Liberation Sans',sans-serif;font-size:28px;line-height:36.6px">Hi, this is FEA<br>simulation report of:<br>pipe-tutorial</div>
 <div class="a" style="left:-10px;top:123px;width:308px;text-align:center;color:#d2d4d6;font-family:'Liberation Sans',sans-serif;font-size:16px;line-height:26.4px;white-space:nowrap">Created by <span style="border-bottom:1px dotted #aaa">TFEA</span> 20.09 on Tue Nov 10<br>11:44:36 2020</div>
</div>
<!-- scrollbars 3 -->
<div class="a" style="left:1976px;top:593px;width:14px;height:310px;background:#e3e0dc;border:1px solid #cfcac4"></div>
<div class="a" style="left:1977px;top:614px;width:12px;height:27px;background:linear-gradient(to right,#fdfcfb,#f1efec);border-top:1px solid #c4bfb8;border-bottom:1px solid #c4bfb8"></div>
<div class="a" style="left:1977px;top:594px;width:12px;height:13px;background:#f7f6f4"></div>
<div class="a" style="left:1977px;top:888px;width:12px;height:14px;background:#f7f6f4;border-top:1px solid #cfcac4"></div>
<div class="a" style="left:1666px;top:902px;width:311px;height:13px;background:#e3e0dc;border:1px solid #cfcac4;border-left:none"></div>
<div class="a" style="left:1666px;top:903px;width:13px;height:11px;background:#f6f4f2"></div>
<div class="a" style="left:1686px;top:903px;width:107px;height:11px;background:linear-gradient(#fdfcfb,#f1efec);border-left:1px solid #c4bfb8;border-right:1px solid #c4bfb8"></div>
<div class="a" style="left:1962px;top:903px;width:14px;height:11px;background:#f6f4f2;border-left:1px solid #cfcac4"></div>
<div class="a corner1" style="left:1977px;top:498px;width:14px;height:14px;background:#efebe7"></div>
<div class="a" style="left:1977px;top:903px;width:14px;height:13px;background:#efebe7"></div>
<!-- ===== OUTPUT MESSAGES ===== -->
<div class="a" style="left:431px;top:928px;width:1573px;height:1px;background:#b0aca7"></div>
<div class="t" style="left:435px;top:938px">Output Messages</div>
<div class="a" style="left:440px;top:964px;width:620px;height:70px;background:#fff;border:1px solid #aaa59e"></div>
<div class="a" style="left:441px;top:979px;width:604px;height:14px;background:#f4f4f4"></div>
<div class="a" style="left:1045px;top:965px;width:14px;height:68px;background:#e3e0dc;border-left:1px solid #cfcac4"></div>
<div class="a" style="left:1046px;top:979px;width:13px;height:27px;background:linear-gradient(to right,#fdfcfb,#f1efec);border-top:1px solid #c4bfb8;border-bottom:1px solid #c4bfb8"></div>
<div class="a" style="left:1046px;top:965px;width:13px;height:13px;background:#f7f6f4"></div>
<div class="a" style="left:1046px;top:1019px;width:13px;height:14px;background:#f7f6f4;border-top:1px solid #cfcac4"></div>
<div class="a" style="left:441px;top:966px;width:604px;height:67px;overflow:hidden;color:#1e8c1e">
<div class="t" style="left:55px;top:-2px">Using CAE Processor library version 20.09v2</div>
<div class="t" style="left:21px;top:12px;color:#000">4</div>
<div class="t" style="left:55px;top:12px">The license is issued as &nbsp;Perpetual</div>
<div class="t" style="left:75px;top:26px">The license is issued as &nbsp;Perpetual</div>
<div class="t" style="left:75px;top:40px">The license is issued for CFD SUPPORT</div>
<div class="t" style="left:75px;top:54px">The license is issued for Testing License</div>
</div>
<div class="a" style="left:440px;top:1044px;width:14px;height:14px;background:#fff;border:1px solid #aaa59e;border-radius:2px"></div>
<div class="t" style="left:459px;top:1043px">Show full messages</div>
<div class="btn" style="left:885px;top:1040px;width:89px;height:22px;line-height:19px">Save to File...</div>
<div class="btn" style="left:980px;top:1040px;width:80px;height:22px;line-height:19px">Clear</div>
<!-- ===== TCAE OUTPUT ===== -->
<div class="t" style="left:1079px;top:938px">TCAE Output</div>
<div class="btn" style="left:1084px;top:964px;width:223px;height:22px;line-height:19px;text-align:left;padding-left:5px">pipe.tcae</div>
<div class="btn" style="left:1313px;top:964px;width:223px;height:22px;line-height:19px;text-align:left;padding-left:5px">Solver output</div>
<div class="btn" style="left:1543px;top:964px;width:223px;height:22px;line-height:19px">Save output to file...</div>
<div class="btn" style="left:1772px;top:964px;width:223px;height:22px;line-height:19px">Clean window</div>
<div class="a" style="left:1084px;top:992px;width:911px;height:70px;background:#fff;border:1px solid #aaa59e"></div>
<div class="a" style="left:1980px;top:993px;width:14px;height:68px;background:#e3e0dc;border-left:1px solid #cfcac4"></div>
<div class="a" style="left:1981px;top:1007px;width:13px;height:10px;background:#e0dcd7;border-top:1px solid #cfcac4;border-bottom:1px solid #cfcac4"></div>
<div class="a" style="left:1981px;top:993px;width:13px;height:13px;background:#f7f6f4"></div>
<div class="a" style="left:1981px;top:1047px;width:13px;height:14px;background:#f7f6f4;border-top:1px solid #cfcac4"></div>
<div class="a" style="left:1089.5px;top:995px;white-space:pre;font-family:'Liberation Mono',monospace;font-size:11.9px;line-height:15px;color:#3a3a3a">pipe-tutorial.vtu
Step 1, time 1.0, Displacement, 3 components, 108438 values
Step 1, time 1.0, Stress, 10 components, 108438 values
END</div>
<svg style="left:0;top:0" width="2004" height="1064" viewBox="0 0 2004 1064">
<rect x="398.5" y="99.5" width="10" height="10" rx="2" fill="#f4f2ef" stroke="#555" stroke-width="1"/><rect x="402.5" y="101.5" width="4" height="3.500" fill="#fff" stroke="#444" stroke-width=".9"/><rect x="400.5" y="103.5" width="4" height="3.500" fill="#fff" stroke="#444" stroke-width=".9"/><rect x="413.0" y="99.5" width="10" height="10" rx="2" fill="#f4f2ef" stroke="#555" stroke-width="1"/><path d="M415.3 101.8l5.400 5.400m0-5.400l-5.400 5.400" stroke="#333" stroke-width="2.100"/><rect x="398.5" y="266.5" width="10" height="10" rx="2" fill="#f4f2ef" stroke="#555" stroke-width="1"/><rect x="402.5" y="268.5" width="4" height="3.500" fill="#fff" stroke="#444" stroke-width=".9"/><rect x="400.5" y="270.5" width="4" height="3.500" fill="#fff" stroke="#444" stroke-width=".9"/><rect x="413.0" y="266.5" width="10" height="10" rx="2" fill="#f4f2ef" stroke="#555" stroke-width="1"/><path d="M415.3 268.8l5.400 5.400m0-5.400l-5.400 5.400" stroke="#333" stroke-width="2.100"/><rect x="1042.0" y="941.0" width="10" height="10" rx="2" fill="#f4f2ef" stroke="#555" stroke-width="1"/><rect x="1046.0" y="943.0" width="4" height="3.500" fill="#fff" stroke="#444" stroke-width=".9"/><rect x="1044.0" y="945.0" width="4" height="3.500" fill="#fff" stroke="#444" stroke-width=".9"/><rect x="1056.5" y="941.0" width="10" height="10" rx="2" fill="#f4f2ef" stroke="#555" stroke-width="1"/><path d="M1058.8 943.3l5.400 5.400m0-5.400l-5.400 5.400" stroke="#333" stroke-width="2.100"/><rect x="1977.0" y="941.0" width="10" height="10" rx="2" fill="#f4f2ef" stroke="#555" stroke-width="1"/><rect x="1981.0" y="943.0" width="4" height="3.500" fill="#fff" stroke="#444" stroke-width=".9"/><rect x="1979.0" y="945.0" width="4" height="3.500" fill="#fff" stroke="#444" stroke-width=".9"/><rect x="1991.5" y="941.0" width="10" height="10" rx="2" fill="#f4f2ef" stroke="#555" stroke-width="1"/><path d="M1993.8 943.3l5.400 5.400m0-5.400l-5.400 5.400" stroke="#333" stroke-width="2.100"/><path d="M27.500 115V229M45.500 159V216M32 150h5M50 172.500h5M50 194.500h5M50 216.500h5" stroke="#7a7a7a" stroke-width="1" fill="none"/><rect x="23" y="121" width="8" height="13.500" rx="1" fill="#c8c8c8" stroke="#111" stroke-width="1.200"/><rect x="24.500" y="122.500" width="5" height="3" fill="#222"/><path d="M25 128h4M25 130h4M25 132h4" stroke="#777" stroke-width=".8"/><path d="M3.500 148.500c2-3.500 9-3.500 11 0" fill="none" stroke="#aaa" stroke-width=".9"/><path d="M4 151.500c2 2 8 2 10 0M5 152.500l-.8 1.500M7.500 153.300l-.3 1.600M10.500 153.300l.3 1.600M13 152.500l.8 1.500" fill="none" stroke="#999" stroke-width=".8"/><rect x="23.5" y="146.0" width="8" height="8" fill="#fff" stroke="#666" stroke-width="1"/><path d="M25.5 150.0h4" stroke="#111" stroke-width="1.200"/><rect x="41.5" y="168.5" width="8" height="8" fill="#fff" stroke="#666" stroke-width="1"/><path d="M43.5 172.5h4" stroke="#111" stroke-width="1.200"/><path d="M45.5 170.5v4" stroke="#111" stroke-width="1.200"/><rect x="41.5" y="190.5" width="8" height="8" fill="#fff" stroke="#666" stroke-width="1"/><path d="M43.5 194.5h4" stroke="#111" stroke-width="1.200"/><path d="M45.5 192.5v4" stroke="#111" stroke-width="1.200"/><rect x="41.5" y="212.5" width="8" height="8" fill="#fff" stroke="#666" stroke-width="1"/><path d="M43.5 216.5h4" stroke="#111" stroke-width="1.200"/><path d="M45.5 214.5v4" stroke="#111" stroke-width="1.200"/><path d="M41.1 143.7A7.0 7.0 0 0 1 49.5 144.1" fill="none" stroke="#e8442e" stroke-width="1" stroke-dasharray="1.500 1.200"/><path d="M50.8 145.6A7.0 7.0 0 0 1 50.4 154.0" fill="none" stroke="#3fbf3f" stroke-width="1" stroke-dasharray="1.500 1.200"/><path d="M48.9 155.3A7.0 7.0 0 0 1 40.5 154.9" fill="none" stroke="#3f7fe8" stroke-width="1" stroke-dasharray="1.500 1.200"/><path d="M39.2 153.4A7.0 7.0 0 0 1 39.6 145.0" fill="none" stroke="#f08a2a" stroke-width="1" stroke-dasharray="1.500 1.200"/><path d="M45.1 144.6A4.9 4.9 0 0 1 49.7 148.2" fill="none" stroke="#3fbf3f" stroke-width="1"/><path d="M49.9 149.6A4.9 4.9 0 0 1 46.3 154.2" fill="none" stroke="#3f7fe8" stroke-width="1"/><path d="M44.9 154.4A4.9 4.9 0 0 1 40.3 150.8" fill="none" stroke="#f08a2a" stroke-width="1"/><path d="M40.1 149.4A4.9 4.9 0 0 1 43.7 144.8" fill="none" stroke="#e8442e" stroke-width="1"/><path d="M46.7 147.1A2.9 2.9 0 0 1 47.8 150.5" fill="none" stroke="#3f7fe8" stroke-width="1"/><path d="M47.4 151.2A2.9 2.9 0 0 1 44.0 152.3" fill="none" stroke="#f08a2a" stroke-width="1"/><path d="M43.3 151.9A2.9 2.9 0 0 1 42.2 148.5" fill="none" stroke="#e8442e" stroke-width="1"/><path d="M42.6 147.8A2.9 2.9 0 0 1 46.0 146.7" fill="none" stroke="#3fbf3f" stroke-width="1"/><circle cx="45" cy="149.5" r="1.2" fill="#fff" stroke="#777" stroke-width="0.9"/><circle cx="45.0" cy="145.2" r=".9" fill="#d0101a"/><circle cx="48.7" cy="147.3" r=".9" fill="#3fbf3f"/><circle cx="48.7" cy="151.7" r=".9" fill="#3fbf3f"/><circle cx="45.0" cy="153.8" r=".9" fill="#3f7fe8"/><circle cx="41.3" cy="151.7" r=".9" fill="#f08a2a"/><circle cx="41.3" cy="147.3" r=".9" fill="#f08a2a"/><circle cx="45" cy="149.500" r="1.800" fill="#fff" stroke="#aaa" stroke-width=".6"/><circle cx="57" cy="167" r="1.900" fill="#fff" stroke="#e03030" stroke-width=".9"/><circle cx="61" cy="167" r="1.900" fill="#fff" stroke="#e03030" stroke-width=".9"/><circle cx="65" cy="167" r="1.900" fill="#fff" stroke="#e03030" stroke-width=".9"/><circle cx="69" cy="167" r="1.900" fill="#fff" stroke="#e03030" stroke-width=".9"/><circle cx="57" cy="171.5" r="1.900" fill="#fff" stroke="#f08a2a" stroke-width=".9"/><circle cx="61" cy="171.5" r="1.900" fill="#fff" stroke="#f08a2a" stroke-width=".9"/><circle cx="65" cy="171.5" r="1.900" fill="#fff" stroke="#3fbf3f" stroke-width=".9"/><circle cx="69" cy="171.5" r="1.900" fill="#fff" stroke="#3fbf3f" stroke-width=".9"/><circle cx="57" cy="175.5" r="1.900" fill="#fff" stroke="#4a90f0" stroke-width=".9"/><circle cx="61" cy="175.5" r="1.900" fill="#fff" stroke="#4a90f0" stroke-width=".9"/><circle cx="65" cy="175.5" r="1.900" fill="#fff" stroke="#4a90f0" stroke-width=".9"/><circle cx="69" cy="175.5" r="1.900" fill="#fff" stroke="#4a90f0" stroke-width=".9"/><path d="M58.8 187.8A7.5 7.5 0 0 1 67.8 188.3" fill="none" stroke="#e8442e" stroke-width="0.9"/><path d="M69.2 189.8A7.5 7.5 0 0 1 68.7 198.8" fill="none" stroke="#3fbf3f" stroke-width="0.9"/><path d="M67.2 200.2A7.5 7.5 0 0 1 58.2 199.7" fill="none" stroke="#3f7fe8" stroke-width="0.9"/><path d="M56.8 198.2A7.5 7.5 0 0 1 57.3 189.2" fill="none" stroke="#f08a2a" stroke-width="0.9"/><path d="M63.1 188.8A5.2 5.2 0 0 1 68.1 192.6" fill="none" stroke="#3fbf3f" stroke-width="0.9"/><path d="M68.2 194.1A5.2 5.2 0 0 1 64.4 199.1" fill="none" stroke="#3f7fe8" stroke-width="0.9"/><path d="M62.9 199.2A5.2 5.2 0 0 1 57.9 195.4" fill="none" stroke="#f08a2a" stroke-width="0.9"/><path d="M57.8 193.9A5.2 5.2 0 0 1 61.6 188.9" fill="none" stroke="#e8442e" stroke-width="0.9"/><path d="M64.9 191.5A3.1 3.1 0 0 1 66.0 195.1" fill="none" stroke="#3f7fe8" stroke-width="0.9"/><path d="M65.5 195.9A3.1 3.1 0 0 1 61.9 197.0" fill="none" stroke="#f08a2a" stroke-width="0.9"/><path d="M61.1 196.5A3.1 3.1 0 0 1 60.0 192.9" fill="none" stroke="#e8442e" stroke-width="0.9"/><path d="M60.5 192.1A3.1 3.1 0 0 1 64.1 191.0" fill="none" stroke="#3fbf3f" stroke-width="0.9"/><circle cx="63" cy="194" r="1.2" fill="#fff" stroke="#777" stroke-width="0.81"/><path d="M63.0 209.5L68.6 212.8L68.6 219.2L63.0 222.5L57.4 219.2L57.4 212.8zM63 216L63.0 209.5M63 216L68.6 212.8M63 216L68.6 219.2M63 216L63.0 222.5M63 216L57.4 219.2M63 216L57.4 212.8" fill="none" stroke="#ccc" stroke-width=".7"/><circle cx="63.0" cy="209.5" r="1.1" fill="#d0101a"/><circle cx="68.6" cy="212.8" r="1.1" fill="#3fbf3f"/><circle cx="68.6" cy="219.2" r="1.1" fill="#3fbf3f"/><circle cx="63.0" cy="222.5" r="1.1" fill="#3f7fe8"/><circle cx="57.4" cy="219.2" r="1.1" fill="#f08a2a"/><circle cx="57.4" cy="212.8" r="1.1" fill="#f08a2a"/><circle cx="63" cy="216" r="1.2" fill="#fff" stroke="#888" stroke-width=".8"/><path d="M413.3 123.6h8.4l-4.2-4.2z" fill="#444"/><path d="M413.3 219.4h8.4l-4.2 4.2z" fill="#444"/><path d="M404.8 358.1h8.4l-4.2-4.2z" fill="#444"/><path d="M404.8 1052.4h8.4l-4.2 4.2z" fill="#444"/><path d="M1978.8 196.6h8.4l-4.2-4.2z" fill="#444"/><path d="M1978.8 488.4h8.4l-4.2 4.2z" fill="#444"/><path d="M1674.6 499.8v8.4l-4.2-4.2z" fill="#444"/><path d="M1967.4 499.8v8.4l4.2-4.2z" fill="#444"/><path d="M1978.8 602.6h8.4l-4.2-4.2z" fill="#444"/><path d="M1978.8 893.4h8.4l-4.2 4.2z" fill="#444"/><path d="M1674.6 904.3v8.4l-4.2-4.2z" fill="#444"/><path d="M1966.4 904.3v8.4l4.2-4.2z" fill="#444"/><path d="M1048.3 974.1h8.4l-4.2-4.2z" fill="#444"/><path d="M1048.3 1024.4h8.4l-4.2 4.2z" fill="#444"/><path d="M1983.3 1002.1h8.4l-4.2-4.2z" fill="#444"/><path d="M1983.3 1052.4h8.4l-4.2 4.2z" fill="#444"/><path d="M1784.2 168.6h7.6l-3.8 3.8z" fill="#444"/><path d="M1784.2 574.6h7.6l-3.8 3.8z" fill="#444"/><path d="M1292.2 973.6h7.6l-3.8 3.8z" fill="#444"/><path d="M1522.2 973.6h7.6l-3.8 3.8z" fill="#444"/><path d="M480.3 967.1v8.8l4.4-4.4z" fill="#333"/><path d="M478.1 983.8h8.8l-4.4 4.4z" fill="#333"/><rect x="443.500" y="104.500" width="8" height="7" fill="#fff" stroke="#111" stroke-width="1"/><path d="M443 105h9" stroke="#111" stroke-width="1.600"/><rect x="523.500" y="104" width="10" height="10" rx="2" fill="none" stroke="#444" stroke-width="1"/><path d="M525.800 106.300l5.400 5.400m0-5.400l-5.400 5.400" stroke="#333" stroke-width="2.100"/><path d="M33.500 300l4-2 4 1.500v6l-4 2.500-4-2z" fill="#b9b6b1" stroke="#a5a29d" stroke-width=".6"/><path d="M37.500 301.500l4-2v6l-4 2.500z" fill="#d6d3cf"/><path d="M38 300l4-3.500-1-1 4.500-.5-.5 4.500-1-1-4 3.500z" fill="#c4c1bc" stroke="#a5a29d" stroke-width=".5"/><circle cx="143.500" cy="302" r="5.800" fill="none" stroke="#a9a6a1" stroke-width="2.200"/><path d="M139.500 306l8-8" stroke="#a9a6a1" stroke-width="2.200"/><path d="M236.500 297.500l8.500 8.500m0-8.500l-8.500 8.500" stroke="#a9a6a1" stroke-width="3.200"/><path d="M408.5 331.0L411.0 331.0" stroke="#a9a6a1" stroke-width="2.600"/><path d="M407.2 334.2L408.9 335.9" stroke="#a9a6a1" stroke-width="2.600"/><path d="M404.0 335.5L404.0 338.0" stroke="#a9a6a1" stroke-width="2.600"/><path d="M400.8 334.2L399.1 335.9" stroke="#a9a6a1" stroke-width="2.600"/><path d="M399.5 331.0L397.0 331.0" stroke="#a9a6a1" stroke-width="2.600"/><path d="M400.8 327.8L399.1 326.1" stroke="#a9a6a1" stroke-width="2.600"/><path d="M404.0 326.5L404.0 324.0" stroke="#a9a6a1" stroke-width="2.600"/><path d="M407.2 327.8L408.9 326.1" stroke="#a9a6a1" stroke-width="2.600"/><circle cx="404" cy="331" r="4.600" fill="#e3dfda" stroke="#a9a6a1" stroke-width="1.300"/><circle cx="404" cy="331" r="2" fill="none" stroke="#a9a6a1" stroke-width="1"/><path d="M167 372c5 1 9-2 9.500-9" fill="none" stroke="#fff" stroke-width="3" stroke-linecap="round"/><path d="M255 364.500c5-2 9 .5 10 6" fill="none" stroke="#a9a6a1" stroke-width="2.200"/><path d="M261 369.500h8l-4 5z" fill="#a9a6a1"/><path d="M72.1 416.6A15.0 15.0 0 0 1 90.1 417.5" fill="none" stroke="#e8442e" stroke-width="1.1"/><path d="M91.6 415.8L88.7 419.2L92.4 419.4z" fill="#e8442e"/><path d="M92.9 420.6A15.0 15.0 0 0 1 92.0 438.6" fill="none" stroke="#3fbf3f" stroke-width="1.1"/><path d="M93.7 440.1L90.3 437.2L90.1 440.9z" fill="#3fbf3f"/><path d="M88.9 441.4A15.0 15.0 0 0 1 70.9 440.5" fill="none" stroke="#3f7fe8" stroke-width="1.1"/><path d="M69.4 442.2L72.3 438.8L68.6 438.6z" fill="#3f7fe8"/><path d="M68.1 437.4A15.0 15.0 0 0 1 69.0 419.4" fill="none" stroke="#f08a2a" stroke-width="1.1"/><path d="M67.3 417.9L70.7 420.8L70.9 417.1z" fill="#f08a2a"/><path d="M80.7 418.5A10.5 10.5 0 0 1 90.6 426.3" fill="none" stroke="#3fbf3f" stroke-width="1.1"/><path d="M92.8 425.7L88.5 426.9L91.4 429.2z" fill="#3fbf3f"/><path d="M91.0 429.2A10.5 10.5 0 0 1 83.2 439.1" fill="none" stroke="#3f7fe8" stroke-width="1.1"/><path d="M83.8 441.3L82.6 437.0L80.3 439.9z" fill="#3f7fe8"/><path d="M80.3 439.5A10.5 10.5 0 0 1 70.4 431.7" fill="none" stroke="#f08a2a" stroke-width="1.1"/><path d="M68.2 432.3L72.5 431.1L69.6 428.8z" fill="#f08a2a"/><path d="M70.0 428.8A10.5 10.5 0 0 1 77.8 418.9" fill="none" stroke="#e8442e" stroke-width="1.1"/><path d="M77.2 416.7L78.4 421.0L80.7 418.1z" fill="#e8442e"/><path d="M84.2 423.9A6.3 6.3 0 0 1 86.4 431.2" fill="none" stroke="#3f7fe8" stroke-width="1.1"/><path d="M85.6 432.7A6.3 6.3 0 0 1 78.3 434.9" fill="none" stroke="#f08a2a" stroke-width="1.1"/><path d="M76.8 434.1A6.3 6.3 0 0 1 74.6 426.8" fill="none" stroke="#e8442e" stroke-width="1.1"/><path d="M75.4 425.3A6.3 6.3 0 0 1 82.7 423.1" fill="none" stroke="#3fbf3f" stroke-width="1.1"/><circle cx="80.5" cy="429" r="2.0" fill="#fff" stroke="#777" stroke-width="0.9900000000000001"/><path d="M280.0 415.5L291.7 422.2L291.7 435.8L280.0 442.5L268.3 435.8L268.3 422.2zM280 429L280.0 415.5M280 429L291.7 422.2M280 429L291.7 435.8M280 429L280.0 442.5M280 429L268.3 435.8M280 429L268.3 422.2" fill="none" stroke="#ccc" stroke-width=".7"/><circle cx="280.0" cy="415.5" r="2.3" fill="#d0101a"/><circle cx="291.7" cy="422.2" r="2.3" fill="#3fbf3f"/><circle cx="291.7" cy="435.8" r="2.3" fill="#3fbf3f"/><circle cx="280.0" cy="442.5" r="2.3" fill="#3f7fe8"/><circle cx="268.3" cy="435.8" r="2.3" fill="#f08a2a"/><circle cx="268.3" cy="422.2" r="2.3" fill="#f08a2a"/><circle cx="280" cy="429" r="2.5" fill="#fff" stroke="#888" stroke-width=".8"/><rect x="11.5" y="461" width="13" height="5" rx="1" fill="#3a9ad9"/><rect x="11.5" y="623" width="13" height="5" rx="1" fill="#3a9ad9"/><path d="M18.0 703v13M11.5 709.5h13" stroke="#3a9ad9" stroke-width="4.200"/><rect x="11.5" y="733" width="13" height="5" rx="1" fill="#3a9ad9"/><rect x="22.5" y="766" width="13" height="5" rx="1" fill="#3a9ad9"/><path d="M29.0 954v13M22.5 960.5h13" stroke="#3a9ad9" stroke-width="4.200"/><rect x="22.5" y="986" width="13" height="5" rx="1" fill="#3a9ad9"/><path d="M166 536h6.500v8h3.800l-7 8-7-8h3.700z" fill="#2a7af0"/><path d="M141.500 566h4.500v5h3l-5.200 5.500-5.300-5.500h3z" fill="#2a7af0"/><path d="M136 578h16" stroke="#2a7af0" stroke-width="1.800"/><path d="M170.500 646v16M190 646v16" stroke="#36c236" stroke-width="3.200"/><path d="M174 646.500l13 7.500-13 7.500z" fill="#36c236"/><path d="M165.500 674v16M185.500 674v16" stroke="#e0202a" stroke-width="3.200"/><path d="M169 675l13 14m0-14l-13 14" stroke="#e0202a" stroke-width="3.200"/><path d="M140 790l14 8-14 8z" fill="#36c236"/><path d="M140 896l13 8-13 8zM153.500 896l13 8-13 8z" fill="#f0861a"/><rect x="110" y="924" width="15.500" height="16" rx="1.500" fill="#f0861a"/><path d="M151 1010h7l4.500 4.500v11h-11.500z" fill="#444"/><path d="M158 1010v4.500h4.500z" fill="#fff" stroke="#444" stroke-width=".6"/><path d="M154 1024v-3M157 1024v-5.500M160 1024v-7.500" stroke="#fff" stroke-width="1.600"/><rect x="152.5" y="1013" width="4" height="4" fill="#7a4a4a"/><path d="M155 1038h7l4.500 4.500v11h-11.500z" fill="#111"/><path d="M162 1038v4.500h4.500z" fill="#fff" stroke="#111" stroke-width=".6"/><path d="M158 1052v-3M161 1052v-5.500M164 1052v-7.500" stroke="#fff" stroke-width="1.600"/><rect x="156.5" y="1041" width="4" height="4" fill="#402020"/><rect x="204.0" y="232" width="1" height="1" fill="#bdb8b1"/><rect x="1211.0" y="931" width="1" height="1" fill="#bdb8b1"/><rect x="428" y="576.0" width="1" height="1" fill="#bdb8b1"/><rect x="1072" y="985.0" width="1" height="1" fill="#bdb8b1"/><rect x="206.5" y="232" width="1" height="1" fill="#bdb8b1"/><rect x="1213.5" y="931" width="1" height="1" fill="#bdb8b1"/><rect x="428" y="578.5" width="1" height="1" fill="#bdb8b1"/><rect x="1072" y="987.5" width="1" height="1" fill="#bdb8b1"/><rect x="209.0" y="232" width="1" height="1" fill="#bdb8b1"/><rect x="1216.0" y="931" width="1" height="1" fill="#bdb8b1"/><rect x="428" y="581.0" width="1" height="1" fill="#bdb8b1"/><rect x="1072" y="990.0" width="1" height="1" fill="#bdb8b1"/><rect x="211.5" y="232" width="1" height="1" fill="#bdb8b1"/><rect x="1218.5" y="931" width="1" height="1" fill="#bdb8b1"/><rect x="428" y="583.5" width="1" height="1" fill="#bdb8b1"/><rect x="1072" y="992.5" width="1" height="1" fill="#bdb8b1"/><rect x="214.0" y="232" width="1" height="1" fill="#bdb8b1"/><rect x="1221.0" y="931" width="1" height="1" fill="#bdb8b1"/><rect x="428" y="586.0" width="1" height="1" fill="#bdb8b1"/><rect x="1072" y="995.0" width="1" height="1" fill="#bdb8b1"/><rect x="216.5" y="232" width="1" height="1" fill="#bdb8b1"/><rect x="1223.5" y="931" width="1" height="1" fill="#bdb8b1"/><rect x="428" y="588.5" width="1" height="1" fill="#bdb8b1"/><rect x="1072" y="997.5" width="1" height="1" fill="#bdb8b1"/></svg>

</body></html>
